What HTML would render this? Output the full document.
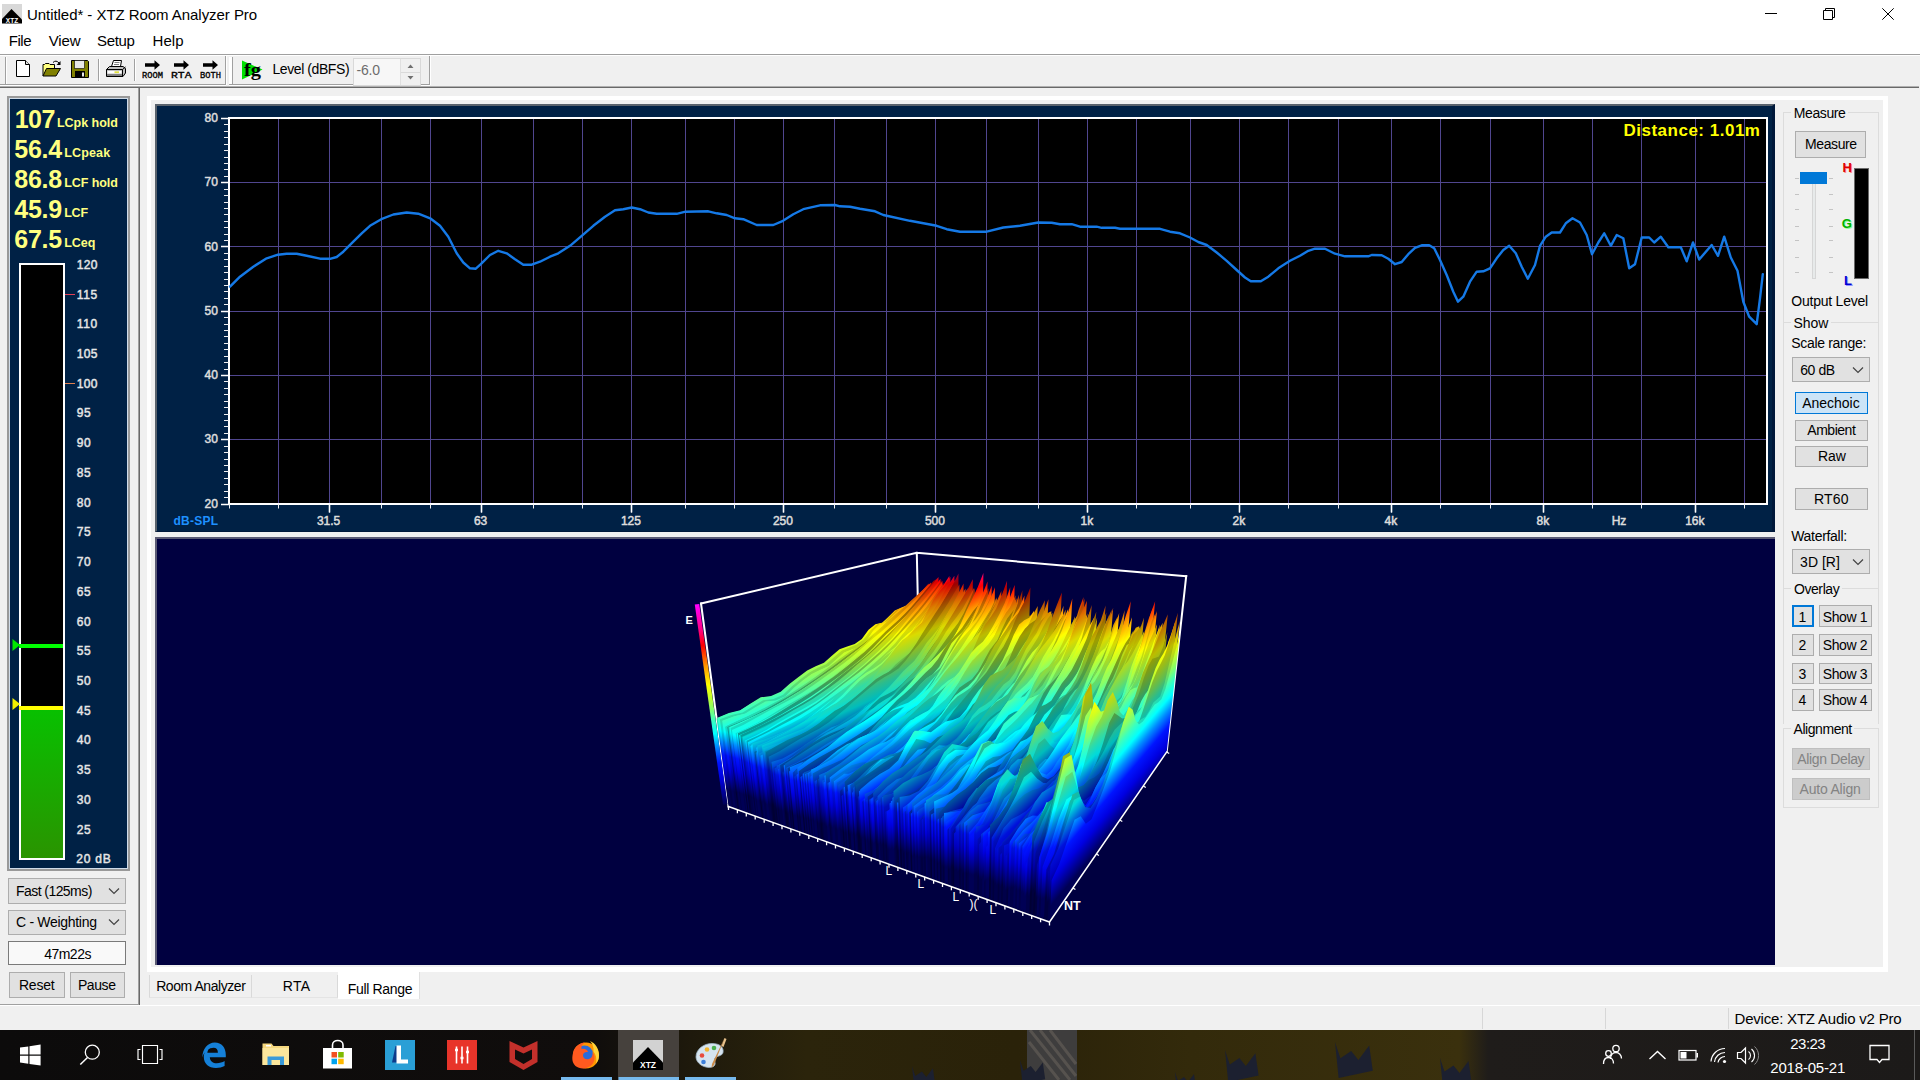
<!DOCTYPE html>
<html lang="en"><head><meta charset="utf-8"><title>Untitled* - XTZ Room Analyzer Pro</title>
<style>
*{box-sizing:border-box}
html,body{margin:0;padding:0}
body{width:1920px;height:1080px;overflow:hidden;background:#f0f0f0;font-family:"Liberation Sans",sans-serif;position:relative}
.a{position:absolute}
.t{position:absolute;white-space:pre;color:#000}
.btn{position:absolute;background:#e1e1e1;border:1px solid #adadad}
.dis{background:#cccccc;border-color:#bfbfbf}
.sel{background:#cce4f7;border-color:#0078d7}
.foc{border:2px solid #0078d7}
.cmb{position:absolute;background:#e1e1e1;border:1px solid #adadad}
.grp{position:absolute;border-top:1px solid #dcdcdc}
.navy{background:#00214a}
</style></head>
<body>
<div class="a" style="left:0px;top:0px;width:1920px;height:54px;background:#fff"></div>
<div class="a" style="left:0px;top:54px;width:1920px;height:1px;background:#a0a0a0"></div>
<div class="a" style="left:0px;top:55px;width:1920px;height:1px;background:#fff"></div>
<svg class="a" style="left:1750px;top:0" width="170" height="30" viewBox="0 0 170 30"><g fill="none" stroke="#000" stroke-width="1"><path d="M15 13.5H27"/><path d="M73.5 10.5h9v9h-9z"/><path d="M75.5 10.5v-2h9v9h-2"/><path d="M132.3 8.3l11.4 11.4M143.7 8.3l-11.4 11.4"/></g></svg>
<div class="a" style="left:0px;top:84px;width:226px;height:1px;background:#a0a0a0"></div>
<div class="a" style="left:0px;top:85px;width:226px;height:1px;background:#fff"></div>
<div class="a" style="left:229px;top:84px;width:201px;height:1px;background:#a0a0a0"></div>
<div class="a" style="left:229px;top:85px;width:201px;height:1px;background:#fff"></div>
<div class="a" style="left:0px;top:86px;width:1919px;height:1px;background:#b0b0b0"></div>
<div class="a" style="left:0px;top:87px;width:1919px;height:1px;background:#696969"></div>
<div class="a" style="left:5px;top:57px;width:1px;height:27px;background:#a0a0a0"></div>
<div class="a" style="left:6px;top:57px;width:1px;height:27px;background:#fff"></div>
<div class="a" style="left:98px;top:59px;width:1px;height:22px;background:#a0a0a0"></div>
<div class="a" style="left:99px;top:59px;width:1px;height:22px;background:#fff"></div>
<div class="a" style="left:134px;top:59px;width:1px;height:22px;background:#a0a0a0"></div>
<div class="a" style="left:135px;top:59px;width:1px;height:22px;background:#fff"></div>
<div class="a" style="left:225px;top:56px;width:1px;height:29px;background:#a0a0a0"></div>
<div class="a" style="left:226px;top:56px;width:1px;height:29px;background:#fff"></div>
<div class="a" style="left:229px;top:57px;width:3px;height:27px;background:#fff"></div>
<div class="a" style="left:232px;top:57px;width:1px;height:27px;background:#a0a0a0"></div>
<div class="a" style="left:429px;top:56px;width:1px;height:29px;background:#a0a0a0"></div>
<div class="a" style="left:430px;top:56px;width:1px;height:29px;background:#fff"></div>
<div class="a" style="left:353px;top:58px;width:68px;height:28px;background:#f7f7f7;border:1px solid #d9d9d9"></div>
<div class="a" style="left:400px;top:59px;width:20px;height:26px;background:#f0f0f0;border-left:1px solid #e0e0e0"></div>
<div class="a" style="left:401px;top:72px;width:19px;height:1px;background:#dadada"></div>
<svg class="a" style="left:400px;top:59px" width="21" height="26" viewBox="0 0 21 26"><path d="M7.5 9L10.5 5.5L13.5 9z M7.5 17L10.5 20.5L13.5 17z" fill="#707070"/></svg>
<div class="a" style="left:138px;top:88px;width:1px;height:917px;background:#a0a0a0"></div>
<div class="a" style="left:139px;top:88px;width:1px;height:917px;background:#696969"></div>
<div class="a" style="left:0px;top:1004px;width:139px;height:1px;background:#a0a0a0"></div>
<div class="a" style="left:0px;top:1005px;width:1920px;height:1px;background:#fff"></div>
<div class="a" style="left:7px;top:96px;width:123px;height:775px;background:#002145;border:2px solid #999;box-shadow:inset 1px 1px 0 #cfdbe8, inset -1px -1px 0 #cfdbe8"></div>
<div class="a" style="left:19px;top:262.5px;width:46px;height:597.5px;background:#000;border:2px solid #fff"></div>
<div class="a" style="left:21px;top:710px;width:42px;height:148px;background:linear-gradient(#08c000,#2a9400)"></div>
<div class="a" style="left:19px;top:706px;width:44px;height:4px;background:#ffff00"></div>
<div class="a" style="left:19px;top:643.5px;width:44px;height:4.0px;background:#00ff00"></div>
<svg class="a" style="left:12px;top:636px" width="10" height="80" viewBox="0 0 10 80"><path d="M0.5 3L8 9L0.5 15z" fill="#00e800"/><path d="M0.5 62L8 68L0.5 74z" fill="#f0f000"/></svg>
<div class="a" style="left:65px;top:294px;width:10px;height:1px;background:#e04058"></div>
<div class="a" style="left:65px;top:383px;width:10px;height:1px;background:#e08050"></div>
<div class="cmb" style="left:8px;top:878px;width:118px;height:26px;"><svg class="a" style="right:5px;top:50%;margin-top:-4px" width="12" height="8" viewBox="0 0 12 8"><path d="M1 1.5 L6 6.5 L11 1.5" fill="none" stroke="#444" stroke-width="1.2"/></svg></div>
<div class="cmb" style="left:8px;top:909.5px;width:118px;height:25.5px;"><svg class="a" style="right:5px;top:50%;margin-top:-4px" width="12" height="8" viewBox="0 0 12 8"><path d="M1 1.5 L6 6.5 L11 1.5" fill="none" stroke="#444" stroke-width="1.2"/></svg></div>
<div class="a" style="left:8px;top:940.5px;width:118px;height:24.5px;background:#f9f9f9;border:1px solid #7a7a7a"></div>
<div class="btn" style="left:9px;top:972px;width:56px;height:25.5px;"></div>
<div class="btn" style="left:69.5px;top:972px;width:55.5px;height:25.5px;"></div>
<div class="a" style="left:147px;top:96px;width:1741px;height:876px;background:#fff"></div>
<div class="a" style="left:151px;top:100px;width:1732px;height:867px;background:#f0f0f0"></div>
<div class="a" style="left:149px;top:975px;width:103px;height:23px;border-left:1px solid #d9d9d9;border-right:1px solid #d9d9d9;border-bottom:1px solid #e4e4e4"></div>
<div class="a" style="left:252px;top:975px;width:86px;height:23px;border-right:1px solid #d9d9d9;border-bottom:1px solid #e4e4e4"></div>
<div class="a" style="left:338px;top:972px;width:82px;height:27px;background:#fff;border-right:1px solid #e0e0e0"></div>
<div class="a" style="left:155px;top:104px;width:1620px;height:428px;background:#002145;border-top:2px solid #59626c;border-left:2px solid #59626c;border-right:3px solid #00183a;border-bottom:1px solid #00183a"></div>
<div class="a" style="left:155px;top:537px;width:1620px;height:428px;background:#000040;border-top:2px solid #5a5a74;border-left:2px solid #5a5a74"></div>
<div class="a" style="left:1783px;top:112px;width:96px;height:210px;border:1px solid #dcdcdc;border-bottom:none"></div>
<div class="a" style="left:1791px;top:104px;width:57px;height:18px;background:#f0f0f0"></div>
<div class="btn" style="left:1795px;top:130.5px;width:71px;height:27.0px;"></div>
<div class="a" style="left:1811.5px;top:178px;width:4.5px;height:101px;background:#e7eaea;border:1px solid #d6d6d6"></div>
<div class="a" style="left:1794.5px;top:178px;width:4.5px;height:1px;background:#c4c4c4"></div>
<div class="a" style="left:1828.5px;top:178px;width:4.5px;height:1px;background:#c4c4c4"></div>
<div class="a" style="left:1794.5px;top:194px;width:4.5px;height:1px;background:#c4c4c4"></div>
<div class="a" style="left:1828.5px;top:194px;width:4.5px;height:1px;background:#c4c4c4"></div>
<div class="a" style="left:1794.5px;top:209px;width:4.5px;height:1px;background:#c4c4c4"></div>
<div class="a" style="left:1828.5px;top:209px;width:4.5px;height:1px;background:#c4c4c4"></div>
<div class="a" style="left:1794.5px;top:226px;width:4.5px;height:1px;background:#c4c4c4"></div>
<div class="a" style="left:1828.5px;top:226px;width:4.5px;height:1px;background:#c4c4c4"></div>
<div class="a" style="left:1794.5px;top:240px;width:4.5px;height:1px;background:#c4c4c4"></div>
<div class="a" style="left:1828.5px;top:240px;width:4.5px;height:1px;background:#c4c4c4"></div>
<div class="a" style="left:1794.5px;top:257px;width:4.5px;height:1px;background:#c4c4c4"></div>
<div class="a" style="left:1828.5px;top:257px;width:4.5px;height:1px;background:#c4c4c4"></div>
<div class="a" style="left:1794.5px;top:272px;width:4.5px;height:1px;background:#c4c4c4"></div>
<div class="a" style="left:1828.5px;top:272px;width:4.5px;height:1px;background:#c4c4c4"></div>
<div class="a" style="left:1800px;top:171.5px;width:26.5px;height:12.5px;background:#0078d7"></div>
<div class="a" style="left:1854px;top:168px;width:15px;height:111px;background:#000;border:1px solid #6a6a6a"></div>
<div class="a" style="left:1783px;top:322px;width:96px;height:266px;border:1px solid #dcdcdc;border-bottom:none"></div>
<div class="a" style="left:1791px;top:314px;width:40px;height:17px;background:#f0f0f0"></div>
<div class="cmb" style="left:1791.5px;top:357px;width:78.0px;height:25px;"><svg class="a" style="right:5px;top:50%;margin-top:-4px" width="12" height="8" viewBox="0 0 12 8"><path d="M1 1.5 L6 6.5 L11 1.5" fill="none" stroke="#444" stroke-width="1.2"/></svg></div>
<div class="btn sel" style="left:1795px;top:392px;width:72.5px;height:21.5px;"></div>
<div class="btn" style="left:1795px;top:419.5px;width:72.5px;height:21.0px;"></div>
<div class="btn" style="left:1795px;top:446px;width:72.5px;height:21px;"></div>
<div class="btn" style="left:1795px;top:488px;width:72.5px;height:21.5px;"></div>
<div class="cmb" style="left:1791.5px;top:549px;width:78.0px;height:25px;"><svg class="a" style="right:5px;top:50%;margin-top:-4px" width="12" height="8" viewBox="0 0 12 8"><path d="M1 1.5 L6 6.5 L11 1.5" fill="none" stroke="#444" stroke-width="1.2"/></svg></div>
<div class="a" style="left:1783px;top:588px;width:96px;height:136px;border:1px solid #dcdcdc;border-bottom:none"></div>
<div class="a" style="left:1791px;top:580px;width:51px;height:17px;background:#f0f0f0"></div>
<div class="btn foc" style="left:1791.5px;top:605.3px;width:22.0px;height:21.700000000000045px;"></div>
<div class="btn" style="left:1819px;top:605.3px;width:53px;height:21.700000000000045px;"></div>
<div class="btn" style="left:1791.5px;top:634.4px;width:22.0px;height:21.399999999999977px;"></div>
<div class="btn" style="left:1819px;top:634.4px;width:53px;height:21.399999999999977px;"></div>
<div class="btn" style="left:1791.5px;top:663px;width:22.0px;height:21.399999999999977px;"></div>
<div class="btn" style="left:1819px;top:663px;width:53px;height:21.399999999999977px;"></div>
<div class="btn" style="left:1791.5px;top:689.4px;width:22.0px;height:21.399999999999977px;"></div>
<div class="btn" style="left:1819px;top:689.4px;width:53px;height:21.399999999999977px;"></div>
<div class="a" style="left:1783px;top:728px;width:96px;height:80px;border:1px solid #dcdcdc"></div>
<div class="a" style="left:1791px;top:720px;width:63px;height:17px;background:#f0f0f0"></div>
<div class="btn dis" style="left:1791.5px;top:748px;width:78.0px;height:21.5px;"></div>
<div class="btn dis" style="left:1791.5px;top:777.5px;width:78.0px;height:22.0px;"></div>
<div class="a" style="left:1482px;top:1008px;width:1px;height:21px;background:#d7d7d7"></div>
<div class="a" style="left:1605px;top:1008px;width:1px;height:21px;background:#d7d7d7"></div>
<div class="a" style="left:1728px;top:1008px;width:1px;height:21px;background:#d7d7d7"></div>
<svg class="a" style="left:155px;top:104px" width="1620" height="427" viewBox="155 104 1620 427">
<rect x="229" y="118" width="1538" height="386" fill="#000" stroke="#fff" stroke-width="2"/>
<path d="M278.5 119V503M329.5 119V503M381.5 119V503M430.5 119V503M481.5 119V503M533.5 119V503M582.5 119V503M631.5 119V503M685.5 119V503M734.5 119V503M783.5 119V503M834.5 119V503M886.5 119V503M935.5 119V503M986.5 119V503M1038.5 119V503M1087.5 119V503M1136.5 119V503M1190.5 119V503M1239.5 119V503M1288.5 119V503M1338.5 119V503M1391.5 119V503M1440.5 119V503M1490.5 119V503M1543.5 119V503M1592.5 119V503M1641.5 119V503M1695.5 119V503M1744.5 119V503M230 182.5H1766M230 246.5H1766M230 311.5H1766M230 375.5H1766M230 439.5H1766" stroke="#50468f" stroke-width="1" fill="none"/>
<path d="M221 504.5H229M224 497.5H229M224 491.5H229M224 484.5H229M224 478.5H229M224 471.5H229M224 465.5H229M224 459.5H229M224 452.5H229M224 446.5H229M221 439.5H229M224 433.5H229M224 426.5H229M224 420.5H229M224 414.5H229M224 407.5H229M224 401.5H229M224 394.5H229M224 388.5H229M224 381.5H229M221 375.5H229M224 369.5H229M224 362.5H229M224 356.5H229M224 349.5H229M224 343.5H229M224 336.5H229M224 330.5H229M224 324.5H229M224 317.5H229M221 311.5H229M224 304.5H229M224 298.5H229M224 291.5H229M224 285.5H229M224 279.5H229M224 272.5H229M224 266.5H229M224 259.5H229M224 253.5H229M221 246.5H229M224 240.5H229M224 234.5H229M224 227.5H229M224 221.5H229M224 214.5H229M224 208.5H229M224 202.5H229M224 195.5H229M224 189.5H229M221 182.5H229M224 176.5H229M224 169.5H229M224 163.5H229M224 157.5H229M224 150.5H229M224 144.5H229M224 137.5H229M224 131.5H229M224 124.5H229M221 118.5H229M229.5 504V508.5M278.5 504V508.5M329.5 504V512.5M381.5 504V508.5M430.5 504V508.5M481.5 504V512.5M533.5 504V508.5M582.5 504V508.5M631.5 504V512.5M685.5 504V508.5M734.5 504V508.5M783.5 504V512.5M834.5 504V508.5M886.5 504V508.5M935.5 504V512.5M986.5 504V508.5M1038.5 504V508.5M1087.5 504V512.5M1136.5 504V508.5M1190.5 504V508.5M1239.5 504V512.5M1288.5 504V508.5M1338.5 504V508.5M1391.5 504V512.5M1440.5 504V508.5M1490.5 504V508.5M1543.5 504V512.5M1592.5 504V508.5M1641.5 504V508.5M1695.5 504V512.5M1744.5 504V508.5" stroke="#f0f0f0" stroke-width="1" fill="none"/>
<path d="M1543.5 504V512.5M1695.5 504V512.5M1391.5 504V512.5M1087.5 504V512.5M1239.5 504V512.5M935.5 504V512.5M783.5 504V512.5M329.5 504V512.5M631.5 504V512.5M481.5 504V512.5M221 504.5H229M221 439.5H229M221 375.5H229M221 311.5H229M221 246.5H229M221 182.5H229M221 118.5H229" stroke="#fff" stroke-width="1.6" fill="none"/>
<path d="M230.0 286.7 L240.0 276.7 L253.3 266.7 L266.7 258.3 L278.0 254.7 L286.7 253.7 L296.7 253.8 L306.7 255.8 L320.0 258.7 L330.0 258.8 L336.7 257.0 L343.3 251.7 L353.3 241.7 L361.7 233.3 L370.0 225.8 L381.3 219.2 L393.3 214.5 L406.7 212.5 L418.3 213.7 L430.8 218.7 L440.0 225.8 L448.3 236.7 L456.7 253.3 L463.3 262.5 L470.0 268.3 L475.8 268.7 L480.8 264.2 L490.0 255.0 L498.3 250.8 L506.7 253.3 L515.0 259.2 L523.3 264.7 L531.7 264.7 L540.0 261.7 L550.0 256.7 L558.3 253.3 L570.0 245.8 L581.7 235.8 L593.3 225.8 L605.0 216.7 L615.0 210.3 L623.3 209.2 L631.7 207.5 L640.0 209.2 L648.3 212.5 L656.7 213.8 L676.7 213.8 L685.5 211.7 L708.3 211.3 L716.7 213.3 L726.7 215.0 L735.0 218.3 L743.3 219.2 L756.7 225.0 L773.3 225.0 L783.0 220.8 L793.3 214.2 L803.3 209.2 L820.0 205.3 L835.0 205.0 L840.0 206.3 L850.0 206.7 L860.0 208.7 L875.0 211.3 L883.3 215.0 L910.0 220.8 L936.7 225.8 L946.7 229.2 L960.0 231.7 L986.7 231.7 L1003.3 227.5 L1020.0 225.8 L1038.3 222.5 L1051.7 222.8 L1060.0 224.2 L1071.7 224.2 L1080.0 226.7 L1096.7 226.7 L1101.7 227.8 L1115.0 227.8 L1120.0 228.8 L1160.0 228.8 L1170.0 231.7 L1180.0 233.3 L1190.0 237.5 L1198.3 242.0 L1206.7 245.0 L1216.7 252.5 L1226.7 260.8 L1236.7 270.0 L1245.0 277.5 L1250.8 281.3 L1260.8 281.3 L1268.3 276.7 L1278.3 268.3 L1290.0 260.8 L1300.0 255.8 L1308.3 250.8 L1315.0 248.7 L1325.0 248.7 L1335.0 253.7 L1345.0 256.3 L1368.3 256.3 L1371.7 255.0 L1381.7 255.3 L1388.3 258.7 L1395.0 264.2 L1401.7 262.0 L1408.3 254.2 L1415.0 247.8 L1421.7 245.3 L1429.2 245.3 L1434.2 248.3 L1440.0 260.0 L1446.7 275.0 L1453.3 291.7 L1458.0 301.7 L1463.3 296.7 L1470.0 281.7 L1476.7 271.7 L1483.3 271.3 L1490.0 268.3 L1496.7 258.3 L1503.3 250.0 L1509.2 245.8 L1515.8 253.3 L1521.7 266.7 L1527.8 278.7 L1535.0 265.0 L1540.0 245.8 L1545.8 236.7 L1551.7 232.5 L1560.0 232.5 L1565.8 223.3 L1572.5 218.3 L1580.0 222.5 L1586.7 235.0 L1592.0 254.2 L1598.3 242.5 L1604.2 233.3 L1610.8 245.8 L1616.7 235.0 L1623.3 238.3 L1629.2 268.3 L1635.0 264.2 L1641.7 237.5 L1649.2 237.5 L1654.2 242.5 L1660.8 236.7 L1668.3 247.2 L1680.8 247.2 L1686.7 261.3 L1693.0 242.5 L1699.2 259.5 L1711.7 245.0 L1718.0 255.8 L1724.2 236.7 L1730.8 257.5 L1737.5 270.8 L1743.3 301.7 L1749.2 316.7 L1756.7 324.2 L1760.0 298.3 L1762.8 274.2" stroke="#1579e6" stroke-width="2.4" fill="none" stroke-linejoin="round" stroke-linecap="round"/>
</svg>
<svg class="a" style="left:157px;top:540px" width="1618" height="425" viewBox="157 540 1618 425">
<defs>
<linearGradient id="j0" gradientUnits="userSpaceOnUse" x1="0" y1="0" x2="0" y2="1"><stop offset="0.000" stop-color="#000034"/><stop offset="0.060" stop-color="#00005d"/><stop offset="0.130" stop-color="#00008b"/><stop offset="0.210" stop-color="#000c9e"/><stop offset="0.290" stop-color="#00569e"/><stop offset="0.354" stop-color="#009e9e"/><stop offset="0.420" stop-color="#259e75"/><stop offset="0.475" stop-color="#509e44"/><stop offset="0.540" stop-color="#7c9e18"/><stop offset="0.597" stop-color="#9e9e00"/><stop offset="0.696" stop-color="#9e5900"/><stop offset="0.795" stop-color="#9e0000"/><stop offset="0.870" stop-color="#9e004f"/><stop offset="1.000" stop-color="#9e009e"/></linearGradient>
<linearGradient id="j1" gradientUnits="userSpaceOnUse" x1="0" y1="0" x2="0" y2="1"><stop offset="0.000" stop-color="#00003e"/><stop offset="0.060" stop-color="#00006f"/><stop offset="0.130" stop-color="#0000a6"/><stop offset="0.210" stop-color="#000ebc"/><stop offset="0.290" stop-color="#0067bc"/><stop offset="0.354" stop-color="#00bcbc"/><stop offset="0.420" stop-color="#2cbc8c"/><stop offset="0.475" stop-color="#60bc51"/><stop offset="0.540" stop-color="#94bc1d"/><stop offset="0.597" stop-color="#bcbc00"/><stop offset="0.696" stop-color="#bc6a00"/><stop offset="0.795" stop-color="#bc0000"/><stop offset="0.870" stop-color="#bc005e"/><stop offset="1.000" stop-color="#bc00bc"/></linearGradient>
<linearGradient id="j2" gradientUnits="userSpaceOnUse" x1="0" y1="0" x2="0" y2="1"><stop offset="0.000" stop-color="#000049"/><stop offset="0.060" stop-color="#000081"/><stop offset="0.130" stop-color="#0000c1"/><stop offset="0.210" stop-color="#0011db"/><stop offset="0.290" stop-color="#0078db"/><stop offset="0.354" stop-color="#00dbdb"/><stop offset="0.420" stop-color="#33dba3"/><stop offset="0.475" stop-color="#6fdb5e"/><stop offset="0.540" stop-color="#acdb22"/><stop offset="0.597" stop-color="#dbdb00"/><stop offset="0.696" stop-color="#db7b00"/><stop offset="0.795" stop-color="#db0000"/><stop offset="0.870" stop-color="#db006e"/><stop offset="1.000" stop-color="#db00db"/></linearGradient>
<linearGradient id="j3" gradientUnits="userSpaceOnUse" x1="0" y1="0" x2="0" y2="1"><stop offset="0.000" stop-color="#000055"/><stop offset="0.060" stop-color="#000096"/><stop offset="0.130" stop-color="#0000e1"/><stop offset="0.210" stop-color="#0014ff"/><stop offset="0.290" stop-color="#008cff"/><stop offset="0.354" stop-color="#00ffff"/><stop offset="0.420" stop-color="#3cffbe"/><stop offset="0.475" stop-color="#82ff6e"/><stop offset="0.540" stop-color="#c8ff28"/><stop offset="0.597" stop-color="#ffff00"/><stop offset="0.696" stop-color="#ff9000"/><stop offset="0.795" stop-color="#ff0000"/><stop offset="0.870" stop-color="#ff0080"/><stop offset="1.000" stop-color="#ff00ff"/></linearGradient>
<linearGradient id="lg" gradientUnits="userSpaceOnUse" x1="697.0" y1="604.3" x2="725.3" y2="804.5"><stop offset="0.000" stop-color="#ff00ff"/><stop offset="0.130" stop-color="#ff0080"/><stop offset="0.205" stop-color="#ff0000"/><stop offset="0.304" stop-color="#ff9000"/><stop offset="0.403" stop-color="#ffff00"/><stop offset="0.460" stop-color="#c8ff28"/><stop offset="0.525" stop-color="#82ff6e"/><stop offset="0.580" stop-color="#3cffbe"/><stop offset="0.646" stop-color="#00ffff"/><stop offset="0.710" stop-color="#008cff"/><stop offset="0.790" stop-color="#0014ff"/><stop offset="0.870" stop-color="#0000e1"/><stop offset="0.940" stop-color="#000096"/><stop offset="1.000" stop-color="#000055"/></linearGradient>
</defs>
<path d="M701.0 603.5L916.8 552.8L1186.2 576.2M916.8 552.8L920.0 700.7" stroke="#fff" stroke-width="2" fill="none" stroke-linecap="square"/>
<path d="M701.0 603.5L728.5 806.5M1186.2 576.2L1166.7 752.0" stroke="#fff" stroke-width="2" fill="none" stroke-linecap="square"/>
<path transform="matrix(-154.07 58.63 -58.63 -154.07 841.50 746.04)" d="M-0.5429 0.0877L-0.7464 0.6594L-0.7033 0.6437L-0.6628 0.6378L-0.6224 0.6350L-0.5818 0.6344L-0.5337 0.6148L-0.4853 0.5974L-0.4448 0.6067L-0.3944 0.5897L-0.3362 0.5516L-0.2842 0.5361L-0.2358 0.5363L-0.1861 0.5367L-0.1290 0.5175L-0.0702 0.4967L-0.0163 0.4979L0.0409 0.4933L0.1029 0.4776L0.1679 0.4572L0.2361 0.4310L0.2996 0.4291L0.3605 0.4449L0.4309 0.4330L0.5039 0.4190L0.5738 0.4277L0.6489 0.4253L0.7711 -0.0990Z" fill="url(#j2)"/>
<path transform="matrix(-154.10 58.22 -58.22 -154.10 842.44 746.24)" d="M-0.5428 0.0892L-0.7535 0.6847L-0.7102 0.6685L-0.6697 0.6626L-0.6294 0.6601L-0.5883 0.6585L-0.5393 0.6362L-0.4899 0.6155L-0.4486 0.6223L-0.3980 0.6048L-0.3401 0.5674L-0.2887 0.5539L-0.2409 0.5559L-0.1913 0.5567L-0.1338 0.5362L-0.0742 0.5132L-0.0197 0.5121L0.0381 0.5053L0.1006 0.4880L0.1656 0.4676L0.2337 0.4417L0.2974 0.4389L0.3588 0.4532L0.4296 0.4396L0.5030 0.4243L0.5729 0.4327L0.6481 0.4304L0.7712 -0.1022Z" fill="url(#j3)"/>
<path transform="matrix(-153.70 59.06 -59.06 -153.70 843.43 746.51)" d="M-0.5432 0.0869L-0.7523 0.6666L-0.7080 0.6478L-0.6665 0.6393L-0.6264 0.6373L-0.5865 0.6390L-0.5380 0.6185L-0.4877 0.5957L-0.4452 0.5991L-0.3943 0.5803L-0.3365 0.5441L-0.2854 0.5316L-0.2377 0.5339L-0.1883 0.5352L-0.1311 0.5160L-0.0717 0.4940L-0.0170 0.4925L0.0408 0.4856L0.1030 0.4697L0.1680 0.4495L0.2366 0.4222L0.3007 0.4180L0.3620 0.4323L0.4323 0.4206L0.5052 0.4073L0.5746 0.4177L0.6493 0.4174L0.7720 -0.0986Z" fill="url(#j3)"/>
<path transform="matrix(-153.69 58.59 -58.59 -153.69 844.37 746.70)" d="M-0.5432 0.0886L-0.7610 0.6964L-0.7158 0.6752L-0.6736 0.6648L-0.6330 0.6613L-0.5931 0.6630L-0.5449 0.6436L-0.4949 0.6216L-0.4522 0.6245L-0.4009 0.6046L-0.3429 0.5677L-0.2913 0.5538L-0.2427 0.5534L-0.1922 0.5514L-0.1345 0.5304L-0.0751 0.5083L-0.0202 0.5060L0.0383 0.4973L0.1011 0.4790L0.1668 0.4564L0.2357 0.4280L0.2997 0.4243L0.3607 0.4396L0.4310 0.4280L0.5041 0.4142L0.5735 0.4249L0.6481 0.4252L0.7723 -0.1021Z" fill="url(#j2)"/>
<path transform="matrix(-153.36 59.04 -59.04 -153.36 845.33 746.90)" d="M-0.5436 0.0872L-0.7615 0.6882L-0.7165 0.6676L-0.6739 0.6561L-0.6324 0.6505L-0.5923 0.6514L-0.5444 0.6331L-0.4949 0.6128L-0.4520 0.6151L-0.3995 0.5921L-0.3403 0.5518L-0.2885 0.5376L-0.2406 0.5391L-0.1905 0.5384L-0.1326 0.5171L-0.0731 0.4948L-0.0185 0.4937L0.0398 0.4855L0.1030 0.4664L0.1689 0.4432L0.2376 0.4158L0.3007 0.4153L0.3609 0.4339L0.4312 0.4227L0.5047 0.4076L0.5742 0.4177L0.6488 0.4180L0.7731 -0.1009Z" fill="url(#j2)"/>
<path transform="matrix(-153.26 58.94 -58.94 -153.26 846.28 747.07)" d="M-0.5437 0.0874L-0.7657 0.6993L-0.7206 0.6785L-0.6779 0.6670L-0.6362 0.6607L-0.5955 0.6601L-0.5472 0.6405L-0.4974 0.6193L-0.4544 0.6213L-0.4016 0.5976L-0.3421 0.5565L-0.2900 0.5412L-0.2418 0.5421L-0.1918 0.5415L-0.1338 0.5199L-0.0739 0.4966L-0.0195 0.4959L0.0379 0.4908L0.1002 0.4748L0.1660 0.4523L0.2355 0.4224L0.2996 0.4185L0.3601 0.4355L0.4303 0.4250L0.5035 0.4110L0.5732 0.4206L0.6481 0.4202L0.7735 -0.1026Z" fill="url(#j3)"/>
<path transform="matrix(-153.02 58.78 -58.78 -153.02 847.21 747.22)" d="M-0.5443 0.0876L-0.7725 0.7166L-0.7272 0.6953L-0.6845 0.6839L-0.6423 0.6765L-0.6007 0.6736L-0.5515 0.6517L-0.5013 0.6295L-0.4582 0.6314L-0.4051 0.6066L-0.3449 0.5638L-0.2921 0.5466L-0.2436 0.5464L-0.1938 0.5466L-0.1361 0.5264L-0.0762 0.5032L-0.0211 0.5004L0.0370 0.4932L0.0994 0.4769L0.1653 0.4545L0.2352 0.4234L0.2997 0.4182L0.3603 0.4353L0.4302 0.4262L0.5032 0.4132L0.5730 0.4228L0.6481 0.4220L0.7746 -0.1048Z" fill="url(#j3)"/>
<path transform="matrix(-152.16 59.35 -59.35 -152.16 848.15 747.35)" d="M-0.5464 0.0850L-0.7808 0.7199L-0.7366 0.7027L-0.6920 0.6867L-0.6465 0.6708L-0.6003 0.6552L-0.5529 0.6392L-0.5038 0.6210L-0.4530 0.6007L-0.4015 0.5816L-0.3502 0.5664L-0.2982 0.5527L-0.2450 0.5388L-0.1906 0.5252L-0.1347 0.5115L-0.0771 0.4963L-0.0176 0.4802L0.0428 0.4658L0.1042 0.4537L0.1674 0.4412L0.2326 0.4281L0.2989 0.4175L0.3663 0.4102L0.4354 0.4048L0.5065 0.4003L0.5800 0.3959L0.6560 0.3914L0.7778 -0.1029Z" fill="url(#j2)"/>
<path transform="matrix(-152.18 59.09 -59.09 -152.18 849.11 747.56)" d="M-0.5462 0.0861L-0.7878 0.7426L-0.7423 0.7218L-0.6970 0.7038L-0.6514 0.6876L-0.6053 0.6723L-0.5584 0.6576L-0.5095 0.6400L-0.4585 0.6193L-0.4067 0.5991L-0.3549 0.5824L-0.3026 0.5676L-0.2492 0.5534L-0.1949 0.5401L-0.1389 0.5261L-0.0809 0.5098L-0.0211 0.4927L0.0397 0.4770L0.1017 0.4626L0.1654 0.4485L0.2304 0.4361L0.2965 0.4263L0.3642 0.4178L0.4339 0.4102L0.5054 0.4041L0.5790 0.3993L0.6551 0.3947L0.7778 -0.1054Z" fill="url(#j2)"/>
<path transform="matrix(-151.85 59.36 -59.36 -151.85 850.07 747.74)" d="M-0.5467 0.0851L-0.7920 0.7456L-0.7452 0.7217L-0.6991 0.7017L-0.6534 0.6853L-0.6069 0.6693L-0.5584 0.6503L-0.5083 0.6296L-0.4577 0.6102L-0.4068 0.5928L-0.3552 0.5769L-0.3029 0.5624L-0.2497 0.5488L-0.1949 0.5344L-0.1383 0.5185L-0.0802 0.5023L-0.0208 0.4867L0.0398 0.4719L0.1019 0.4575L0.1655 0.4440L0.2304 0.4321L0.2967 0.4220L0.3648 0.4126L0.4349 0.4036L0.5068 0.3964L0.5801 0.3929L0.6552 0.3924L0.7788 -0.1051Z" fill="url(#j0)"/>
<path transform="matrix(-151.43 59.44 -59.44 -151.43 851.00 747.85)" d="M-0.5477 0.0841L-0.7978 0.7540L-0.7508 0.7297L-0.7037 0.7074L-0.6571 0.6888L-0.6097 0.6707L-0.5605 0.6500L-0.5105 0.6297L-0.4605 0.6122L-0.4096 0.5956L-0.3574 0.5783L-0.3041 0.5608L-0.2496 0.5437L-0.1938 0.5264L-0.1370 0.5102L-0.0794 0.4959L-0.0206 0.4825L0.0399 0.4685L0.1024 0.4533L0.1664 0.4388L0.2315 0.4264L0.2978 0.4167L0.3656 0.4088L0.4353 0.4019L0.5068 0.3964L0.5802 0.3933L0.6555 0.3926L0.7805 -0.1062Z" fill="url(#j2)"/>
<path transform="matrix(-151.26 59.27 -59.27 -151.26 851.94 748.00)" d="M-0.5481 0.0844L-0.8028 0.7669L-0.7563 0.7439L-0.7097 0.7234L-0.6632 0.7052L-0.6159 0.6871L-0.5670 0.6674L-0.5170 0.6474L-0.4658 0.6269L-0.4137 0.6066L-0.3604 0.5862L-0.3063 0.5667L-0.2518 0.5498L-0.1964 0.5338L-0.1395 0.5174L-0.0810 0.5004L-0.0215 0.4846L0.0390 0.4708L0.1010 0.4575L0.1645 0.4447L0.2295 0.4329L0.2963 0.4215L0.3648 0.4117L0.4343 0.4056L0.5055 0.4016L0.5793 0.3973L0.6555 0.3933L0.7813 -0.1084Z" fill="url(#j3)"/>
<path transform="matrix(-151.26 59.29 -59.29 -151.26 852.93 748.25)" d="M-0.5477 0.0849L-0.8052 0.7735L-0.7591 0.7517L-0.7135 0.7336L-0.6673 0.7162L-0.6195 0.6970L-0.5700 0.6757L-0.5197 0.6547L-0.4689 0.6352L-0.4173 0.6167L-0.3642 0.5967L-0.3094 0.5751L-0.2538 0.5549L-0.1982 0.5381L-0.1418 0.5231L-0.0838 0.5076L-0.0242 0.4918L0.0367 0.4766L0.0990 0.4621L0.1628 0.4486L0.2279 0.4363L0.2948 0.4247L0.3630 0.4153L0.4326 0.4089L0.5044 0.4031L0.5788 0.3961L0.6554 0.3904L0.7810 -0.1093Z" fill="url(#j2)"/>
<path transform="matrix(-150.97 59.72 -59.72 -150.97 853.92 748.50)" d="M-0.5480 0.0838L-0.8077 0.7705L-0.7610 0.7477L-0.7137 0.7252L-0.6659 0.7036L-0.6176 0.6831L-0.5684 0.6628L-0.5181 0.6421L-0.4673 0.6229L-0.4164 0.6061L-0.3643 0.5895L-0.3103 0.5707L-0.2545 0.5497L-0.1977 0.5298L-0.1405 0.5126L-0.0824 0.4972L-0.0232 0.4826L0.0377 0.4675L0.1005 0.4516L0.1646 0.4372L0.2294 0.4263L0.2950 0.4190L0.3624 0.4129L0.4326 0.4047L0.5055 0.3947L0.5804 0.3860L0.6566 0.3820L0.7817 -0.1079Z" fill="url(#j3)"/>
<path transform="matrix(-150.64 59.80 -59.80 -150.64 854.87 748.65)" d="M-0.5487 0.0832L-0.8133 0.7793L-0.7662 0.7556L-0.7177 0.7303L-0.6694 0.7075L-0.6212 0.6878L-0.5725 0.6689L-0.5220 0.6479L-0.4699 0.6253L-0.4174 0.6043L-0.3645 0.5855L-0.3109 0.5680L-0.2560 0.5503L-0.1997 0.5320L-0.1420 0.5136L-0.0831 0.4957L-0.0233 0.4795L0.0377 0.4646L0.1002 0.4501L0.1637 0.4375L0.2283 0.4276L0.2943 0.4197L0.3621 0.4124L0.4326 0.4033L0.5059 0.3925L0.5810 0.3834L0.6575 0.3786L0.7829 -0.1088Z" fill="url(#j3)"/>
<path transform="matrix(-150.55 60.11 -60.11 -150.55 855.87 748.94)" d="M-0.5484 0.0829L-0.8131 0.7740L-0.7656 0.7494L-0.7178 0.7258L-0.6698 0.7040L-0.6215 0.6838L-0.5725 0.6646L-0.5225 0.6450L-0.4710 0.6240L-0.4180 0.6016L-0.3641 0.5799L-0.3099 0.5608L-0.2554 0.5441L-0.1997 0.5278L-0.1422 0.5099L-0.0829 0.4908L-0.0225 0.4729L0.0386 0.4576L0.1002 0.4456L0.1626 0.4368L0.2266 0.4290L0.2930 0.4196L0.3619 0.4088L0.4328 0.3981L0.5058 0.3881L0.5807 0.3796L0.6574 0.3744L0.7828 -0.1081Z" fill="url(#j3)"/>
<path transform="matrix(-150.35 60.46 -60.46 -150.35 856.88 749.21)" d="M-0.5485 0.0822L-0.8141 0.7698L-0.7673 0.7471L-0.7197 0.7241L-0.6705 0.6996L-0.6210 0.6763L-0.5717 0.6560L-0.5218 0.6369L-0.4708 0.6174L-0.4182 0.5966L-0.3643 0.5752L-0.3099 0.5554L-0.2554 0.5388L-0.2001 0.5237L-0.1426 0.5061L-0.0829 0.4861L-0.0224 0.4679L0.0385 0.4533L0.1001 0.4415L0.1629 0.4316L0.2273 0.4225L0.2937 0.4131L0.3625 0.4025L0.4337 0.3909L0.5069 0.3803L0.5815 0.3732L0.6574 0.3705L0.7832 -0.1070Z" fill="url(#j2)"/>
<path transform="matrix(-150.13 60.47 -60.47 -150.13 857.84 749.39)" d="M-0.5489 0.0821L-0.8208 0.7837L-0.7730 0.7588L-0.7242 0.7330L-0.6744 0.7070L-0.6248 0.6836L-0.5752 0.6625L-0.5246 0.6416L-0.4733 0.6216L-0.4212 0.6022L-0.3678 0.5823L-0.3132 0.5622L-0.2582 0.5444L-0.2026 0.5288L-0.1452 0.5115L-0.0854 0.4913L-0.0245 0.4723L0.0367 0.4569L0.0988 0.4438L0.1624 0.4313L0.2276 0.4197L0.2943 0.4094L0.3630 0.3993L0.4338 0.3894L0.5064 0.3810L0.5807 0.3751L0.6568 0.3722L0.7840 -0.1082Z" fill="url(#j3)"/>
<path transform="matrix(-149.79 60.36 -60.36 -149.79 858.78 749.50)" d="M-0.5498 0.0818L-0.8287 0.8001L-0.7809 0.7754L-0.7322 0.7501L-0.6821 0.7236L-0.6314 0.6976L-0.5806 0.6739L-0.5299 0.6529L-0.4792 0.6347L-0.4271 0.6158L-0.3727 0.5933L-0.3167 0.5696L-0.2604 0.5481L-0.2039 0.5300L-0.1461 0.5120L-0.0868 0.4935L-0.0267 0.4773L0.0343 0.4629L0.0969 0.4487L0.1610 0.4351L0.2263 0.4236L0.2934 0.4125L0.3629 0.3998L0.4344 0.3880L0.5069 0.3804L0.5809 0.3762L0.6570 0.3737L0.7855 -0.1103Z" fill="url(#j0)"/>
<path transform="matrix(-149.17 60.85 -60.85 -149.17 859.76 749.70)" d="M-0.5511 0.0798L-0.8319 0.7931L-0.7834 0.7670L-0.7340 0.7406L-0.6838 0.7142L-0.6328 0.6880L-0.5814 0.6632L-0.5301 0.6412L-0.4790 0.6223L-0.4265 0.6026L-0.3715 0.5793L-0.3148 0.5540L-0.2575 0.5306L-0.2005 0.5114L-0.1431 0.4948L-0.0844 0.4787L-0.0243 0.4629L0.0373 0.4472L0.1003 0.4321L0.1645 0.4186L0.2300 0.4071L0.2969 0.3970L0.3658 0.3870L0.4366 0.3783L0.5090 0.3716L0.5833 0.3669L0.6593 0.3652L0.7876 -0.1086Z" fill="url(#j3)"/>
<path transform="matrix(-148.72 60.81 -60.81 -148.72 860.67 749.74)" d="M-0.5523 0.0787L-0.8403 0.8073L-0.7915 0.7810L-0.7406 0.7509L-0.6885 0.7202L-0.6363 0.6912L-0.5840 0.6643L-0.5319 0.6404L-0.4797 0.6190L-0.4268 0.5984L-0.3723 0.5767L-0.3162 0.5535L-0.2593 0.5316L-0.2026 0.5134L-0.1454 0.4981L-0.0867 0.4825L-0.0258 0.4645L0.0371 0.4454L0.1008 0.4287L0.1649 0.4158L0.2301 0.4056L0.2968 0.3966L0.3655 0.3881L0.4357 0.3817L0.5079 0.3764L0.5825 0.3716L0.6593 0.3681L0.7896 -0.1107Z" fill="url(#j0)"/>
<path transform="matrix(-148.25 61.21 -61.21 -148.25 861.66 749.96)" d="M-0.5532 0.0774L-0.8418 0.7993L-0.7941 0.7759L-0.7434 0.7472L-0.6906 0.7150L-0.6380 0.6855L-0.5861 0.6600L-0.5335 0.6354L-0.4799 0.6104L-0.4256 0.5866L-0.3707 0.5639L-0.3145 0.5411L-0.2576 0.5195L-0.2010 0.5020L-0.1438 0.4869L-0.0846 0.4701L-0.0233 0.4515L0.0391 0.4340L0.1024 0.4191L0.1667 0.4059L0.2321 0.3954L0.2985 0.3878L0.3668 0.3811L0.4372 0.3743L0.5098 0.3682L0.5844 0.3636L0.6613 0.3600L0.7912 -0.1095Z" fill="url(#j1)"/>
<path transform="matrix(-148.13 61.05 -61.05 -148.13 862.63 750.14)" d="M-0.5534 0.0779L-0.8494 0.8186L-0.8011 0.7939L-0.7510 0.7665L-0.6990 0.7366L-0.6473 0.7095L-0.5956 0.6849L-0.5423 0.6584L-0.4872 0.6299L-0.4317 0.6029L-0.3764 0.5794L-0.3207 0.5579L-0.2642 0.5375L-0.2069 0.5184L-0.1479 0.4982L-0.0869 0.4763L-0.0252 0.4566L0.0365 0.4413L0.0993 0.4280L0.1636 0.4150L0.2291 0.4043L0.2958 0.3960L0.3650 0.3864L0.4368 0.3754L0.5100 0.3671L0.5844 0.3632L0.6611 0.3607L0.7917 -0.1117Z" fill="url(#j2)"/>
<path transform="matrix(-147.54 61.91 -61.91 -147.54 863.67 750.48)" d="M-0.5543 0.0755L-0.8469 0.7934L-0.7971 0.7654L-0.7473 0.7395L-0.6969 0.7143L-0.6454 0.6882L-0.5918 0.6594L-0.5365 0.6283L-0.4806 0.5982L-0.4255 0.5728L-0.3706 0.5509L-0.3149 0.5298L-0.2582 0.5094L-0.2005 0.4896L-0.1415 0.4699L-0.0812 0.4505L-0.0202 0.4332L0.0413 0.4188L0.1042 0.4055L0.1683 0.3936L0.2334 0.3844L0.3002 0.3763L0.3693 0.3672L0.4407 0.3580L0.5136 0.3509L0.5881 0.3472L0.6645 0.3459L0.7933 -0.1073Z" fill="url(#j2)"/>
<path transform="matrix(-147.58 61.78 -61.78 -147.58 864.65 750.67)" d="M-0.5539 0.0761L-0.8520 0.8080L-0.8016 0.7786L-0.7512 0.7512L-0.7004 0.7247L-0.6489 0.6987L-0.5962 0.6719L-0.5414 0.6422L-0.4847 0.6100L-0.4288 0.5823L-0.3743 0.5613L-0.3188 0.5407L-0.2618 0.5193L-0.2037 0.4984L-0.1452 0.4800L-0.0859 0.4634L-0.0250 0.4465L0.0374 0.4297L0.1013 0.4134L0.1656 0.4007L0.2304 0.3925L0.2969 0.3851L0.3656 0.3774L0.4369 0.3683L0.5110 0.3576L0.5867 0.3495L0.6633 0.3473L0.7930 -0.1094Z" fill="url(#j3)"/>
<path transform="matrix(-147.77 62.16 -62.16 -147.77 865.72 751.07)" d="M-0.5526 0.0766L-0.8487 0.7991L-0.7977 0.7679L-0.7470 0.7396L-0.6957 0.7118L-0.6439 0.6846L-0.5914 0.6583L-0.5381 0.6321L-0.4832 0.6045L-0.4278 0.5779L-0.3729 0.5557L-0.3176 0.5354L-0.2613 0.5158L-0.2039 0.4964L-0.1455 0.4782L-0.0864 0.4618L-0.0259 0.4457L0.0363 0.4292L0.1006 0.4112L0.1660 0.3950L0.2312 0.3851L0.2971 0.3792L0.3651 0.3731L0.4362 0.3643L0.5097 0.3550L0.5844 0.3499L0.6606 0.3485L0.7914 -0.1079Z" fill="url(#j1)"/>
<path transform="matrix(-147.56 62.54 -62.54 -147.56 866.75 751.36)" d="M-0.5526 0.0760L-0.8499 0.7948L-0.7986 0.7633L-0.7469 0.7325L-0.6944 0.7021L-0.6420 0.6736L-0.5895 0.6475L-0.5367 0.6227L-0.4827 0.5975L-0.4278 0.5726L-0.3726 0.5497L-0.3167 0.5279L-0.2601 0.5075L-0.2029 0.4888L-0.1449 0.4719L-0.0861 0.4565L-0.0259 0.4413L0.0362 0.4252L0.1002 0.4083L0.1656 0.3923L0.2317 0.3796L0.2987 0.3702L0.3671 0.3631L0.4372 0.3571L0.5097 0.3512L0.5844 0.3461L0.6614 0.3423L0.7916 -0.1067Z" fill="url(#j3)"/>
<path transform="matrix(-147.11 63.07 -63.07 -147.11 867.77 751.64)" d="M-0.5532 0.0745L-0.8497 0.7818L-0.7982 0.7503L-0.7455 0.7177L-0.6923 0.6858L-0.6407 0.6600L-0.5900 0.6386L-0.5371 0.6139L-0.4811 0.5842L-0.4244 0.5551L-0.3686 0.5307L-0.3132 0.5106L-0.2570 0.4918L-0.1994 0.4722L-0.1403 0.4527L-0.0807 0.4350L-0.0207 0.4207L0.0404 0.4078L0.1035 0.3938L0.1684 0.3797L0.2348 0.3664L0.3022 0.3560L0.3701 0.3504L0.4392 0.3481L0.5109 0.3450L0.5858 0.3397L0.6631 0.3349L0.7929 -0.1045Z" fill="url(#j2)"/>
<path transform="matrix(-146.81 64.22 -64.22 -146.81 868.89 752.14)" d="M-0.5528 0.0726L-0.8390 0.7409L-0.7876 0.7100L-0.7345 0.6768L-0.6807 0.6440L-0.6295 0.6193L-0.5790 0.5986L-0.5241 0.5693L-0.4667 0.5364L-0.4119 0.5122L-0.3591 0.4959L-0.3062 0.4823L-0.2502 0.4641L-0.1916 0.4422L-0.1311 0.4189L-0.0686 0.3936L-0.0072 0.3752L0.0524 0.3663L0.1128 0.3595L0.1765 0.3486L0.2442 0.3316L0.3117 0.3206L0.3769 0.3226L0.4434 0.3279L0.5139 0.3285L0.5873 0.3277L0.6622 0.3309L0.7925 -0.0980Z" fill="url(#j3)"/>
<path transform="matrix(-147.44 63.99 -63.99 -147.44 869.96 752.51)" d="M-0.5506 0.0753L-0.8370 0.7484L-0.7903 0.7280L-0.7420 0.7058L-0.6905 0.6779L-0.6365 0.6460L-0.5816 0.6140L-0.5257 0.5816L-0.4719 0.5568L-0.4211 0.5424L-0.3697 0.5291L-0.3152 0.5111L-0.2574 0.4876L-0.1984 0.4643L-0.1393 0.4440L-0.0804 0.4280L-0.0213 0.4158L0.0389 0.4045L0.1014 0.3919L0.1670 0.3750L0.2357 0.3545L0.3050 0.3375L0.3734 0.3294L0.4421 0.3269L0.5122 0.3274L0.5836 0.3324L0.6574 0.3382L0.7896 -0.1003Z" fill="url(#j3)"/>
<path transform="matrix(-146.99 63.72 -63.72 -146.99 870.85 752.49)" d="M-0.5520 0.0745L-0.8519 0.7790L-0.8019 0.7513L-0.7491 0.7187L-0.6952 0.6853L-0.6413 0.6538L-0.5862 0.6217L-0.5294 0.5875L-0.4737 0.5582L-0.4215 0.5404L-0.3712 0.5300L-0.3184 0.5168L-0.2618 0.4967L-0.2024 0.4727L-0.1437 0.4540L-0.0872 0.4449L-0.0289 0.4353L0.0339 0.4175L0.1003 0.3944L0.1672 0.3741L0.2346 0.3578L0.3029 0.3444L0.3712 0.3370L0.4401 0.3348L0.5106 0.3350L0.5823 0.3394L0.6558 0.3471L0.7919 -0.1039Z" fill="url(#j2)"/>
<path transform="matrix(-146.00 65.09 -65.09 -146.00 871.94 752.90)" d="M-0.5536 0.0706L-0.8475 0.7407L-0.7983 0.7158L-0.7445 0.6822L-0.6876 0.6430L-0.6298 0.6034L-0.5735 0.5694L-0.5195 0.5430L-0.4664 0.5210L-0.4129 0.5008L-0.3590 0.4823L-0.3043 0.4645L-0.2492 0.4489L-0.1941 0.4367L-0.1392 0.4288L-0.0830 0.4213L-0.0225 0.4063L0.0419 0.3854L0.1077 0.3646L0.1736 0.3484L0.2403 0.3351L0.3088 0.3221L0.3778 0.3132L0.4480 0.3076L0.5206 0.3018L0.5941 0.3007L0.6682 0.3063L0.7945 -0.0960Z" fill="url(#j0)"/>
<path transform="matrix(-145.66 64.97 -64.97 -145.66 872.91 753.04)" d="M-0.5545 0.0705L-0.8568 0.7584L-0.8070 0.7324L-0.7530 0.6984L-0.6966 0.6608L-0.6381 0.6199L-0.5809 0.5840L-0.5274 0.5592L-0.4758 0.5413L-0.4218 0.5199L-0.3634 0.4906L-0.3044 0.4626L-0.2485 0.4452L-0.1962 0.4403L-0.1444 0.4405L-0.0879 0.4326L-0.0260 0.4143L0.0392 0.3915L0.1055 0.3699L0.1729 0.3499L0.2417 0.3307L0.3102 0.3180L0.3769 0.3162L0.4454 0.3161L0.5186 0.3089L0.5943 0.3018L0.6705 0.3010L0.7961 -0.0979Z" fill="url(#j2)"/>
<path transform="matrix(-145.66 63.74 -63.74 -145.66 873.75 752.88)" d="M-0.5554 0.0723L-0.8820 0.8292L-0.8282 0.7939L-0.7743 0.7597L-0.7165 0.7184L-0.6555 0.6711L-0.5972 0.6323L-0.5455 0.6116L-0.4967 0.6005L-0.4439 0.5825L-0.3846 0.5509L-0.3240 0.5187L-0.2662 0.4966L-0.2115 0.4860L-0.1577 0.4814L-0.0991 0.4679L-0.0346 0.4429L0.0330 0.4131L0.0992 0.3917L0.1640 0.3790L0.2316 0.3636L0.3006 0.3496L0.3692 0.3428L0.4385 0.3408L0.5107 0.3373L0.5864 0.3306L0.6643 0.3253L0.7976 -0.1080Z" fill="url(#j3)"/>
<path transform="matrix(-145.39 63.68 -63.68 -145.39 874.70 752.96)" d="M-0.5560 0.0717L-0.8819 0.8252L-0.8282 0.7901L-0.7791 0.7674L-0.7252 0.7354L-0.6622 0.6839L-0.5976 0.6299L-0.5416 0.5990L-0.4936 0.5899L-0.4444 0.5807L-0.3870 0.5541L-0.3253 0.5192L-0.2659 0.4932L-0.2094 0.4779L-0.1542 0.4694L-0.0945 0.4534L-0.0301 0.4283L0.0366 0.4013L0.1019 0.3822L0.1642 0.3767L0.2279 0.3725L0.2949 0.3649L0.3647 0.3550L0.4360 0.3474L0.5090 0.3419L0.5844 0.3365L0.6602 0.3384L0.7987 -0.1102Z" fill="url(#j2)"/>
<path transform="matrix(-144.69 65.37 -65.37 -144.69 875.90 753.63)" d="M-0.5563 0.0686L-0.8615 0.7516L-0.8127 0.7282L-0.7614 0.7013L-0.7061 0.6670L-0.6471 0.6259L-0.5885 0.5877L-0.5344 0.5623L-0.4827 0.5446L-0.4278 0.5220L-0.3668 0.4872L-0.3041 0.4509L-0.2444 0.4247L-0.1878 0.4090L-0.1320 0.3992L-0.0732 0.3853L-0.0119 0.3690L0.0502 0.3545L0.1134 0.3417L0.1766 0.3337L0.2400 0.3303L0.3046 0.3294L0.3726 0.3251L0.4438 0.3177L0.5175 0.3103L0.5931 0.3043L0.6696 0.3039L0.7995 -0.0993Z" fill="url(#j2)"/>
<path transform="matrix(-144.88 65.87 -65.87 -144.88 877.04 754.13)" d="M-0.5548 0.0694L-0.8567 0.7398L-0.8105 0.7224L-0.7601 0.6971L-0.7045 0.6622L-0.6484 0.6278L-0.5951 0.6020L-0.5420 0.5789L-0.4836 0.5456L-0.4221 0.5070L-0.3623 0.4749L-0.3060 0.4542L-0.2508 0.4387L-0.1940 0.4227L-0.1363 0.4081L-0.0764 0.3912L-0.0151 0.3748L0.0464 0.3616L0.1091 0.3501L0.1726 0.3411L0.2378 0.3325L0.3057 0.3218L0.3771 0.3073L0.4492 0.2968L0.5205 0.2954L0.5938 0.2959L0.6704 0.2940L0.7976 -0.0966Z" fill="url(#j3)"/>
<path transform="matrix(-145.45 66.32 -66.32 -145.45 878.20 754.67)" d="M-0.5520 0.0710L-0.8522 0.7347L-0.8013 0.7062L-0.7497 0.6779L-0.6957 0.6461L-0.6410 0.6146L-0.5882 0.5893L-0.5360 0.5676L-0.4802 0.5400L-0.4220 0.5089L-0.3660 0.4855L-0.3133 0.4731L-0.2585 0.4584L-0.1968 0.4299L-0.1315 0.3955L-0.0686 0.3705L-0.0093 0.3580L0.0492 0.3521L0.1076 0.3508L0.1692 0.3461L0.2367 0.3306L0.3083 0.3088L0.3794 0.2939L0.4477 0.2933L0.5171 0.2966L0.5898 0.2976L0.6649 0.2995L0.7939 -0.0945Z" fill="url(#j3)"/>
<path transform="matrix(-145.77 64.34 -64.34 -145.77 878.94 754.29)" d="M-0.5526 0.0742L-0.8855 0.8338L-0.8322 0.7992L-0.7754 0.7583L-0.7168 0.7150L-0.6600 0.6776L-0.6084 0.6547L-0.5601 0.6419L-0.5084 0.6234L-0.4531 0.5990L-0.3959 0.5726L-0.3379 0.5468L-0.2769 0.5165L-0.2123 0.4799L-0.1482 0.4476L-0.0877 0.4284L-0.0289 0.4175L0.0312 0.4074L0.0906 0.4041L0.1523 0.3993L0.2215 0.3791L0.2946 0.3529L0.3657 0.3381L0.4333 0.3399L0.5028 0.3438L0.5762 0.3436L0.6514 0.3463L0.7950 -0.1101Z" fill="url(#j2)"/>
<path transform="matrix(-144.83 65.22 -65.22 -144.83 880.00 754.60)" d="M-0.5546 0.0713L-0.8858 0.8108L-0.8321 0.7764L-0.7744 0.7347L-0.7151 0.6910L-0.6589 0.6562L-0.6052 0.6290L-0.5519 0.6051L-0.4957 0.5768L-0.4405 0.5531L-0.3867 0.5355L-0.3298 0.5133L-0.2688 0.4839L-0.2053 0.4511L-0.1427 0.4238L-0.0828 0.4068L-0.0229 0.3937L0.0386 0.3806L0.1004 0.3712L0.1647 0.3599L0.2335 0.3413L0.3044 0.3223L0.3734 0.3141L0.4407 0.3174L0.5096 0.3233L0.5807 0.3305L0.6544 0.3385L0.7981 -0.1053Z" fill="url(#j2)"/>
<path transform="matrix(-145.39 66.21 -66.21 -145.39 881.21 755.25)" d="M-0.5513 0.0718L-0.8580 0.7479L-0.8105 0.7269L-0.7577 0.6957L-0.7026 0.6613L-0.6510 0.6367L-0.5972 0.6091L-0.5396 0.5748L-0.4790 0.5356L-0.4221 0.5075L-0.3710 0.4954L-0.3171 0.4796L-0.2584 0.4554L-0.1986 0.4311L-0.1407 0.4150L-0.0835 0.4044L-0.0210 0.3841L0.0420 0.3664L0.1001 0.3657L0.1613 0.3619L0.2302 0.3425L0.3034 0.3166L0.3726 0.3068L0.4388 0.3120L0.5090 0.3130L0.5814 0.3149L0.6535 0.3260L0.7936 -0.0998Z" fill="url(#j1)"/>
<path transform="matrix(-143.46 65.21 -65.21 -143.46 881.83 754.59)" d="M-0.5585 0.0673L-0.9007 0.8220L-0.8462 0.7870L-0.7889 0.7473L-0.7307 0.7075L-0.6737 0.6718L-0.6152 0.6348L-0.5548 0.5955L-0.4922 0.5531L-0.4311 0.5163L-0.3737 0.4906L-0.3183 0.4728L-0.2640 0.4605L-0.2095 0.4510L-0.1534 0.4413L-0.0930 0.4244L-0.0277 0.3989L0.0359 0.3815L0.0953 0.3796L0.1571 0.3765L0.2255 0.3608L0.2979 0.3395L0.3685 0.3289L0.4370 0.3305L0.5081 0.3318L0.5837 0.3273L0.6630 0.3200L0.8043 -0.1094Z" fill="url(#j0)"/>
<path transform="matrix(-142.93 65.26 -65.26 -142.93 882.79 754.67)" d="M-0.5599 0.0660L-0.9167 0.8484L-0.8554 0.7991L-0.7953 0.7535L-0.7364 0.7125L-0.6771 0.6722L-0.6166 0.6312L-0.5563 0.5923L-0.4953 0.5543L-0.4359 0.5218L-0.3767 0.4926L-0.3194 0.4703L-0.2671 0.4632L-0.2162 0.4630L-0.1610 0.4560L-0.1001 0.4384L-0.0369 0.4191L0.0268 0.4023L0.0915 0.3873L0.1568 0.3753L0.2245 0.3623L0.2944 0.3482L0.3654 0.3371L0.4368 0.3311L0.5099 0.3272L0.5867 0.3199L0.6670 0.3102L0.8065 -0.1108Z" fill="url(#j0)"/>
<path transform="matrix(-144.41 66.57 -66.57 -144.41 884.24 755.83)" d="M-0.5531 0.0700L-0.8816 0.7824L-0.8262 0.7450L-0.7690 0.7051L-0.7132 0.6700L-0.6577 0.6373L-0.6009 0.6034L-0.5444 0.5725L-0.4884 0.5447L-0.4316 0.5176L-0.3724 0.4872L-0.3143 0.4622L-0.2616 0.4526L-0.2100 0.4493L-0.1551 0.4413L-0.0963 0.4276L-0.0348 0.4109L0.0289 0.3924L0.0952 0.3715L0.1622 0.3533L0.2301 0.3376L0.2979 0.3270L0.3654 0.3230L0.4353 0.3188L0.5090 0.3106L0.5855 0.3015L0.6621 0.2997L0.7971 -0.1015Z" fill="url(#j1)"/>
<path transform="matrix(-142.81 69.13 -69.13 -142.81 885.52 756.59)" d="M-0.5552 0.0638L-0.8592 0.6908L-0.8032 0.6540L-0.7442 0.6126L-0.6846 0.5713L-0.6261 0.5339L-0.5732 0.5104L-0.5238 0.4963L-0.4687 0.4722L-0.4075 0.4370L-0.3443 0.3997L-0.2840 0.3708L-0.2270 0.3523L-0.1709 0.3387L-0.1151 0.3288L-0.0586 0.3211L0.0016 0.3081L0.0646 0.2923L0.1276 0.2805L0.1885 0.2781L0.2519 0.2746L0.3211 0.2616L0.3926 0.2477L0.4634 0.2415L0.5324 0.2463L0.6019 0.2571L0.6721 0.2738L0.8004 -0.0844Z" fill="url(#j0)"/>
<path transform="matrix(-143.21 68.14 -68.14 -143.21 886.44 756.60)" d="M-0.5547 0.0664L-0.8632 0.7131L-0.8166 0.6953L-0.7662 0.6713L-0.7088 0.6341L-0.6482 0.5916L-0.5937 0.5643L-0.5401 0.5410L-0.4794 0.5041L-0.4191 0.4702L-0.3628 0.4478L-0.3056 0.4255L-0.2427 0.3932L-0.1804 0.3649L-0.1240 0.3535L-0.0709 0.3535L-0.0116 0.3425L0.0538 0.3205L0.1172 0.3072L0.1761 0.3100L0.2358 0.3159L0.3033 0.3072L0.3748 0.2934L0.4474 0.2826L0.5213 0.2743L0.5960 0.2708L0.6686 0.2811L0.7999 -0.0927Z" fill="url(#j2)"/>
<path transform="matrix(-143.04 68.47 -68.47 -143.04 887.51 756.90)" d="M-0.5545 0.0660L-0.8706 0.7236L-0.8164 0.6902L-0.7653 0.6648L-0.7120 0.6366L-0.6525 0.5968L-0.5913 0.5552L-0.5316 0.5185L-0.4720 0.4841L-0.4167 0.4616L-0.3653 0.4499L-0.3101 0.4326L-0.2496 0.4061L-0.1903 0.3850L-0.1336 0.3731L-0.0748 0.3598L-0.0135 0.3441L0.0465 0.3356L0.1064 0.3314L0.1708 0.3207L0.2371 0.3100L0.3029 0.3054L0.3700 0.3033L0.4422 0.2937L0.5206 0.2737L0.6006 0.2557L0.6785 0.2504L0.8000 -0.0918Z" fill="url(#j1)"/>
<path transform="matrix(-141.24 68.18 -68.18 -141.24 888.36 756.75)" d="M-0.5605 0.0626L-0.9117 0.7861L-0.8503 0.7393L-0.7893 0.6949L-0.7281 0.6515L-0.6653 0.6061L-0.6026 0.5627L-0.5436 0.5292L-0.4865 0.5018L-0.4314 0.4809L-0.3784 0.4672L-0.3227 0.4503L-0.2618 0.4245L-0.2000 0.3996L-0.1393 0.3800L-0.0768 0.3596L-0.0134 0.3408L0.0486 0.3287L0.1109 0.3202L0.1764 0.3086L0.2444 0.2952L0.3121 0.2877L0.3801 0.2850L0.4512 0.2801L0.5268 0.2696L0.6061 0.2559L0.6860 0.2477L0.8089 -0.0944Z" fill="url(#j2)"/>
<path transform="matrix(-141.50 69.20 -69.20 -141.50 889.59 757.39)" d="M-0.5581 0.0628L-0.8895 0.7359L-0.8324 0.6979L-0.7727 0.6562L-0.7113 0.6124L-0.6507 0.5719L-0.5918 0.5366L-0.5329 0.5032L-0.4739 0.4715L-0.4181 0.4491L-0.3660 0.4369L-0.3121 0.4236L-0.2519 0.3991L-0.1889 0.3712L-0.1271 0.3487L-0.0654 0.3297L-0.0030 0.3126L0.0600 0.2976L0.1223 0.2886L0.1844 0.2842L0.2486 0.2797L0.3146 0.2758L0.3831 0.2708L0.4549 0.2637L0.5304 0.2526L0.6075 0.2442L0.6836 0.2455L0.8057 -0.0883Z" fill="url(#j2)"/>
<path transform="matrix(-141.89 68.55 -68.55 -141.89 890.51 757.38)" d="M-0.5572 0.0641L-0.8947 0.7572L-0.8411 0.7259L-0.7822 0.6852L-0.7183 0.6355L-0.6559 0.5904L-0.5981 0.5569L-0.5412 0.5272L-0.4810 0.4924L-0.4221 0.4624L-0.3672 0.4440L-0.3136 0.4307L-0.2570 0.4138L-0.1978 0.3938L-0.1389 0.3775L-0.0809 0.3670L-0.0227 0.3595L0.0396 0.3464L0.1058 0.3279L0.1709 0.3160L0.2332 0.3161L0.2972 0.3173L0.3684 0.3059L0.4456 0.2844L0.5247 0.2636L0.6006 0.2579L0.6735 0.2677L0.8046 -0.0954Z" fill="url(#j2)"/>
<path transform="matrix(-143.02 69.72 -69.72 -143.02 891.87 758.27)" d="M-0.5517 0.0666L-0.8675 0.7083L-0.8171 0.6830L-0.7603 0.6460L-0.6991 0.6013L-0.6400 0.5626L-0.5857 0.5357L-0.5313 0.5107L-0.4732 0.4798L-0.4170 0.4550L-0.3641 0.4400L-0.3117 0.4285L-0.2550 0.4105L-0.1944 0.3865L-0.1327 0.3631L-0.0736 0.3485L-0.0170 0.3437L0.0422 0.3363L0.1054 0.3237L0.1685 0.3158L0.2305 0.3152L0.2975 0.3073L0.3722 0.2852L0.4492 0.2624L0.5238 0.2516L0.5976 0.2496L0.6730 0.2505L0.7970 -0.0884Z" fill="url(#j3)"/>
<path transform="matrix(-143.27 68.84 -68.84 -143.27 892.81 758.30)" d="M-0.5515 0.0687L-0.8878 0.7610L-0.8293 0.7186L-0.7697 0.6752L-0.7091 0.6313L-0.6516 0.5953L-0.6010 0.5761L-0.5526 0.5636L-0.4953 0.5341L-0.4331 0.4961L-0.3761 0.4718L-0.3239 0.4606L-0.2680 0.4442L-0.2079 0.4212L-0.1470 0.3993L-0.0857 0.3794L-0.0233 0.3607L0.0392 0.3455L0.1006 0.3368L0.1621 0.3326L0.2252 0.3290L0.2923 0.3206L0.3646 0.3043L0.4387 0.2890L0.5116 0.2826L0.5857 0.2800L0.6635 0.2746L0.7970 -0.0959Z" fill="url(#j2)"/>
<path transform="matrix(-143.57 69.37 -69.37 -143.57 893.93 758.69)" d="M-0.5495 0.0688L-0.8668 0.7175L-0.8106 0.6795L-0.7574 0.6491L-0.7035 0.6189L-0.6494 0.5901L-0.5965 0.5656L-0.5431 0.5421L-0.4836 0.5077L-0.4208 0.4680L-0.3621 0.4396L-0.3065 0.4203L-0.2492 0.3999L-0.1930 0.3850L-0.1411 0.3832L-0.0878 0.3817L-0.0256 0.3630L0.0424 0.3345L0.1079 0.3153L0.1700 0.3089L0.2303 0.3114L0.2918 0.3165L0.3576 0.3164L0.4284 0.3094L0.5036 0.2968L0.5819 0.2826L0.6608 0.2736L0.7945 -0.0942Z" fill="url(#j0)"/>
<path transform="matrix(-142.55 70.70 -70.70 -142.55 895.09 759.14)" d="M-0.5510 0.0652L-0.8554 0.6709L-0.7990 0.6337L-0.7441 0.6007L-0.6908 0.5728L-0.6400 0.5517L-0.5882 0.5302L-0.5321 0.5022L-0.4704 0.4642L-0.4059 0.4222L-0.3438 0.3873L-0.2853 0.3623L-0.2293 0.3455L-0.1741 0.3333L-0.1212 0.3293L-0.0681 0.3282L-0.0077 0.3143L0.0579 0.2920L0.1220 0.2771L0.1837 0.2719L0.2452 0.2718L0.3066 0.2771L0.3690 0.2855L0.4358 0.2891L0.5101 0.2798L0.5910 0.2597L0.6732 0.2426L0.7968 -0.0862Z" fill="url(#j0)"/>
<path transform="matrix(-141.88 70.90 -70.90 -141.88 896.14 759.39)" d="M-0.5526 0.0643L-0.8630 0.6767L-0.8096 0.6459L-0.7539 0.6120L-0.6952 0.5738L-0.6416 0.5474L-0.5909 0.5287L-0.5353 0.5020L-0.4739 0.4653L-0.4100 0.4252L-0.3486 0.3925L-0.2897 0.3674L-0.2340 0.3517L-0.1778 0.3377L-0.1182 0.3193L-0.0580 0.3028L0.0036 0.2865L0.0650 0.2742L0.1249 0.2691L0.1848 0.2685L0.2452 0.2715L0.3061 0.2784L0.3698 0.2842L0.4407 0.2781L0.5185 0.2604L0.5979 0.2449L0.6747 0.2426L0.7994 -0.0855Z" fill="url(#j1)"/>
<path transform="matrix(-142.25 69.61 -69.61 -142.25 897.01 759.28)" d="M-0.5525 0.0669L-0.8836 0.7328L-0.8268 0.6946L-0.7751 0.6681L-0.7213 0.6392L-0.6664 0.6098L-0.6103 0.5797L-0.5495 0.5415L-0.4854 0.4982L-0.4237 0.4621L-0.3693 0.4438L-0.3158 0.4301L-0.2580 0.4097L-0.1961 0.3829L-0.1316 0.3533L-0.0696 0.3323L-0.0096 0.3192L0.0485 0.3141L0.1063 0.3144L0.1666 0.3129L0.2285 0.3127L0.2915 0.3147L0.3580 0.3137L0.4310 0.3022L0.5079 0.2866L0.5839 0.2799L0.6602 0.2793L0.7996 -0.0962Z" fill="url(#j3)"/>
<path transform="matrix(-140.61 68.40 -68.40 -140.61 897.70 758.75)" d="M-0.5590 0.0641L-0.9342 0.8220L-0.8735 0.7770L-0.8158 0.7396L-0.7571 0.7018L-0.6974 0.6635L-0.6372 0.6259L-0.5754 0.5866L-0.5127 0.5475L-0.4505 0.5115L-0.3892 0.4796L-0.3291 0.4528L-0.2691 0.4288L-0.2082 0.4054L-0.1451 0.3803L-0.0841 0.3631L-0.0273 0.3590L0.0293 0.3595L0.0912 0.3519L0.1585 0.3359L0.2262 0.3233L0.2926 0.3189L0.3595 0.3189L0.4307 0.3139L0.5059 0.3051L0.5839 0.2953L0.6646 0.2856L0.8094 -0.1062Z" fill="url(#j1)"/>
<path transform="matrix(-141.47 69.83 -69.83 -141.47 899.11 759.74)" d="M-0.5541 0.0661L-0.9065 0.7670L-0.8470 0.7242L-0.7875 0.6828L-0.7327 0.6523L-0.6789 0.6258L-0.6208 0.5922L-0.5591 0.5529L-0.4985 0.5178L-0.4398 0.4889L-0.3792 0.4580L-0.3176 0.4274L-0.2582 0.4040L-0.2021 0.3905L-0.1476 0.3840L-0.0934 0.3813L-0.0358 0.3748L0.0275 0.3592L0.0959 0.3353L0.1655 0.3129L0.2325 0.3007L0.2981 0.2967L0.3656 0.2936L0.4374 0.2854L0.5120 0.2762L0.5876 0.2710L0.6640 0.2706L0.8025 -0.0968Z" fill="url(#j2)"/>
<path transform="matrix(-141.52 70.36 -70.36 -141.52 900.24 760.12)" d="M-0.5529 0.0658L-0.9075 0.7651L-0.8406 0.7078L-0.7749 0.6540L-0.7161 0.6155L-0.6620 0.5882L-0.6057 0.5580L-0.5476 0.5262L-0.4889 0.4949L-0.4314 0.4685L-0.3753 0.4470L-0.3203 0.4303L-0.2672 0.4208L-0.2110 0.4072L-0.1490 0.3840L-0.0858 0.3613L-0.0247 0.3464L0.0352 0.3381L0.0979 0.3273L0.1636 0.3136L0.2303 0.3021L0.2976 0.2940L0.3671 0.2856L0.4384 0.2783L0.5106 0.2749L0.5847 0.2731L0.6618 0.2708L0.8011 -0.0948Z" fill="url(#j0)"/>
<path transform="matrix(-143.00 72.38 -72.38 -143.00 901.75 761.24)" d="M-0.5453 0.0676L-0.8461 0.6497L-0.7891 0.6111L-0.7352 0.5801L-0.6832 0.5542L-0.6305 0.5288L-0.5768 0.5032L-0.5243 0.4816L-0.4733 0.4653L-0.4196 0.4458L-0.3603 0.4168L-0.2973 0.3824L-0.2368 0.3556L-0.1813 0.3419L-0.1252 0.3299L-0.0652 0.3127L-0.0050 0.2982L0.0535 0.2910L0.1125 0.2867L0.1736 0.2817L0.2368 0.2763L0.3018 0.2716L0.3701 0.2639L0.4392 0.2597L0.5082 0.2618L0.5801 0.2632L0.6566 0.2598L0.7903 -0.0831Z" fill="url(#j3)"/>
<path transform="matrix(-143.99 72.06 -72.06 -143.99 902.90 761.68)" d="M-0.5421 0.0716L-0.8431 0.6596L-0.7944 0.6366L-0.7477 0.6190L-0.6959 0.5929L-0.6389 0.5581L-0.5828 0.5268L-0.5297 0.5034L-0.4799 0.4889L-0.4288 0.4739L-0.3730 0.4516L-0.3137 0.4240L-0.2545 0.3993L-0.1992 0.3855L-0.1432 0.3732L-0.0827 0.3543L-0.0201 0.3336L0.0422 0.3172L0.1036 0.3067L0.1658 0.2984L0.2297 0.2905L0.2953 0.2833L0.3648 0.2718L0.4355 0.2627L0.5033 0.2666L0.5706 0.2783L0.6432 0.2840L0.7860 -0.0864Z" fill="url(#j3)"/>
<path transform="matrix(-143.49 72.17 -72.17 -143.49 903.93 761.86)" d="M-0.5432 0.0707L-0.8565 0.6792L-0.8061 0.6530L-0.7493 0.6158L-0.6890 0.5732L-0.6325 0.5396L-0.5822 0.5203L-0.5352 0.5096L-0.4864 0.4973L-0.4321 0.4762L-0.3742 0.4496L-0.3163 0.4256L-0.2602 0.4076L-0.2029 0.3901L-0.1446 0.3732L-0.0857 0.3580L-0.0222 0.3359L0.0456 0.3076L0.1107 0.2888L0.1691 0.2895L0.2275 0.2946L0.2924 0.2895L0.3628 0.2763L0.4334 0.2680L0.5019 0.2706L0.5720 0.2759L0.6486 0.2716L0.7879 -0.0870Z" fill="url(#j3)"/>
<path transform="matrix(-142.44 71.59 -71.59 -142.44 904.80 761.71)" d="M-0.5469 0.0691L-0.8824 0.7203L-0.8253 0.6818L-0.7633 0.6350L-0.7030 0.5930L-0.6494 0.5659L-0.5988 0.5464L-0.5483 0.5294L-0.4955 0.5096L-0.4388 0.4841L-0.3784 0.4531L-0.3160 0.4202L-0.2562 0.3949L-0.2007 0.3818L-0.1490 0.3798L-0.0946 0.3751L-0.0293 0.3501L0.0432 0.3122L0.1111 0.2878L0.1683 0.2919L0.2240 0.3044L0.2867 0.3056L0.3556 0.2974L0.4255 0.2922L0.4958 0.2918L0.5724 0.2822L0.6589 0.2541L0.7936 -0.0921Z" fill="url(#j1)"/>
<path transform="matrix(-141.15 72.54 -72.54 -141.15 905.92 762.04)" d="M-0.5496 0.0656L-0.8824 0.6966L-0.8270 0.6627L-0.7632 0.6140L-0.6952 0.5585L-0.6360 0.5213L-0.5859 0.5037L-0.5408 0.4981L-0.4943 0.4918L-0.4396 0.4714L-0.3758 0.4347L-0.3073 0.3907L-0.2448 0.3611L-0.1882 0.3463L-0.1300 0.3309L-0.0684 0.3115L-0.0066 0.2947L0.0534 0.2853L0.1141 0.2782L0.1758 0.2729L0.2387 0.2693L0.3033 0.2667L0.3696 0.2652L0.4372 0.2662L0.5073 0.2672L0.5841 0.2582L0.6678 0.2385L0.7978 -0.0861Z" fill="url(#j2)"/>
<path transform="matrix(-140.81 71.58 -71.58 -140.81 906.82 761.95)" d="M-0.5515 0.0664L-0.9079 0.7487L-0.8468 0.7036L-0.7860 0.6607L-0.7229 0.6146L-0.6603 0.5708L-0.6044 0.5421L-0.5554 0.5288L-0.5064 0.5178L-0.4505 0.4951L-0.3876 0.4602L-0.3231 0.4243L-0.2614 0.3964L-0.2011 0.3740L-0.1384 0.3494L-0.0732 0.3224L-0.0103 0.3033L0.0481 0.2976L0.1063 0.2964L0.1670 0.2939L0.2308 0.2889L0.2974 0.2820L0.3652 0.2775L0.4330 0.2786L0.5023 0.2820L0.5764 0.2803L0.6562 0.2712L0.8008 -0.0940Z" fill="url(#j1)"/>
<path transform="matrix(-141.04 72.25 -72.25 -141.04 907.99 762.41)" d="M-0.5496 0.0665L-0.9050 0.7410L-0.8338 0.6768L-0.7737 0.6351L-0.7176 0.6025L-0.6547 0.5584L-0.5926 0.5172L-0.5392 0.4950L-0.4923 0.4877L-0.4414 0.4747L-0.3847 0.4524L-0.3285 0.4333L-0.2709 0.4142L-0.2099 0.3903L-0.1458 0.3627L-0.0818 0.3383L-0.0218 0.3256L0.0365 0.3201L0.0973 0.3129L0.1608 0.3040L0.2262 0.2949L0.2934 0.2866L0.3626 0.2784L0.4331 0.2726L0.5044 0.2707L0.5799 0.2646L0.6612 0.2511L0.7983 -0.0912Z" fill="url(#j3)"/>
<path transform="matrix(-139.54 69.87 -69.87 -139.54 908.42 761.37)" d="M-0.5570 0.0640L-0.9701 0.8645L-0.8994 0.8014L-0.8342 0.7502L-0.7685 0.6995L-0.6986 0.6418L-0.6314 0.5907L-0.5731 0.5594L-0.5199 0.5405L-0.4662 0.5226L-0.4125 0.5075L-0.3581 0.4932L-0.2985 0.4708L-0.2357 0.4442L-0.1723 0.4193L-0.1112 0.4023L-0.0509 0.3905L0.0114 0.3780L0.0751 0.3663L0.1395 0.3573L0.2044 0.3515L0.2714 0.3457L0.3443 0.3312L0.4210 0.3130L0.4954 0.3059L0.5724 0.2989L0.6560 0.2821L0.8094 -0.1107Z" fill="url(#j3)"/>
<path transform="matrix(-142.73 72.15 -72.15 -142.73 910.36 763.34)" d="M-0.5434 0.0728L-0.8837 0.7253L-0.8300 0.6930L-0.7823 0.6739L-0.7281 0.6438L-0.6714 0.6104L-0.6200 0.5893L-0.5695 0.5718L-0.5121 0.5427L-0.4490 0.5039L-0.3911 0.4777L-0.3373 0.4622L-0.2801 0.4423L-0.2211 0.4214L-0.1630 0.4051L-0.1044 0.3908L-0.0399 0.3671L0.0279 0.3392L0.0921 0.3230L0.1549 0.3136L0.2190 0.3058L0.2843 0.3000L0.3510 0.2959L0.4194 0.2930L0.4905 0.2898L0.5658 0.2823L0.6452 0.2712L0.7900 -0.0945Z" fill="url(#j0)"/>
<path transform="matrix(-140.92 72.98 -72.98 -140.92 911.44 763.57)" d="M-0.5479 0.0684L-0.8952 0.7178L-0.8403 0.6849L-0.7872 0.6568L-0.7289 0.6204L-0.6730 0.5901L-0.6247 0.5763L-0.5724 0.5566L-0.5062 0.5116L-0.4366 0.4615L-0.3792 0.4376L-0.3296 0.4318L-0.2724 0.4132L-0.2080 0.3825L-0.1490 0.3655L-0.0956 0.3633L-0.0344 0.3481L0.0347 0.3193L0.1013 0.2993L0.1670 0.2851L0.2356 0.2685L0.3040 0.2566L0.3675 0.2609L0.4325 0.2672L0.5054 0.2611L0.5824 0.2512L0.6596 0.2470L0.7968 -0.0890Z" fill="url(#j3)"/>
<path transform="matrix(-139.46 72.39 -72.39 -139.46 912.22 763.24)" d="M-0.5531 0.0650L-0.9335 0.7739L-0.8679 0.7220L-0.8035 0.6736L-0.7425 0.6328L-0.6863 0.6027L-0.6307 0.5757L-0.5688 0.5381L-0.5008 0.4904L-0.4381 0.4547L-0.3866 0.4434L-0.3379 0.4403L-0.2813 0.4241L-0.2188 0.3982L-0.1594 0.3817L-0.1038 0.3760L-0.0417 0.3603L0.0279 0.3318L0.0975 0.3067L0.1637 0.2927L0.2279 0.2873L0.2919 0.2871L0.3566 0.2904L0.4285 0.2828L0.5087 0.2610L0.5884 0.2465L0.6632 0.2499L0.8045 -0.0949Z" fill="url(#j1)"/>
<path transform="matrix(-137.31 72.00 -72.00 -137.31 912.96 762.84)" d="M-0.5604 0.0593L-0.9692 0.8125L-0.8986 0.7531L-0.8249 0.6891L-0.7529 0.6294L-0.6854 0.5792L-0.6216 0.5377L-0.5617 0.5053L-0.5022 0.4755L-0.4438 0.4497L-0.3862 0.4278L-0.3273 0.4057L-0.2666 0.3823L-0.2069 0.3636L-0.1524 0.3584L-0.1013 0.3636L-0.0473 0.3664L0.0149 0.3555L0.0854 0.3309L0.1583 0.3046L0.2302 0.2844L0.2998 0.2738L0.3694 0.2680L0.4413 0.2624L0.5146 0.2590L0.5885 0.2608L0.6627 0.2686L0.8155 -0.0990Z" fill="url(#j3)"/>
<path transform="matrix(-138.72 72.63 -72.63 -138.72 914.33 763.63)" d="M-0.5544 0.0635L-0.9391 0.7723L-0.8750 0.7239L-0.8067 0.6688L-0.7434 0.6244L-0.6841 0.5889L-0.6234 0.5524L-0.5624 0.5170L-0.5027 0.4859L-0.4453 0.4612L-0.3859 0.4348L-0.3216 0.4008L-0.2555 0.3655L-0.1939 0.3415L-0.1427 0.3416L-0.0959 0.3541L-0.0464 0.3650L0.0100 0.3650L0.0778 0.3447L0.1516 0.3152L0.2275 0.2850L0.3008 0.2643L0.3717 0.2538L0.4411 0.2520L0.5086 0.2603L0.5786 0.2692L0.6518 0.2776L0.8071 -0.0962Z" fill="url(#j1)"/>
<path transform="matrix(-138.39 73.40 -73.40 -138.39 915.54 764.11)" d="M-0.5542 0.0627L-0.9282 0.7423L-0.8604 0.6877L-0.7956 0.6397L-0.7366 0.6038L-0.6799 0.5736L-0.6205 0.5399L-0.5561 0.4986L-0.4909 0.4574L-0.4313 0.4286L-0.3737 0.4059L-0.3124 0.3780L-0.2477 0.3458L-0.1844 0.3187L-0.1283 0.3089L-0.0786 0.3151L-0.0309 0.3290L0.0224 0.3351L0.0868 0.3222L0.1565 0.3016L0.2284 0.2805L0.3020 0.2595L0.3772 0.2397L0.4495 0.2311L0.5160 0.2412L0.5815 0.2604L0.6522 0.2743L0.8070 -0.0917Z" fill="url(#j3)"/>
<path transform="matrix(-138.88 73.08 -73.08 -138.88 916.60 764.31)" d="M-0.5525 0.0645L-0.9280 0.7513L-0.8621 0.6994L-0.7988 0.6536L-0.7419 0.6209L-0.6911 0.6014L-0.6371 0.5775L-0.5722 0.5349L-0.5049 0.4890L-0.4439 0.4572L-0.3829 0.4274L-0.3167 0.3896L-0.2517 0.3562L-0.1937 0.3393L-0.1416 0.3370L-0.0910 0.3411L-0.0391 0.3463L0.0195 0.3411L0.0873 0.3203L0.1552 0.3029L0.2191 0.2983L0.2843 0.2954L0.3574 0.2800L0.4334 0.2630L0.5054 0.2604L0.5760 0.2672L0.6503 0.2724L0.8050 -0.0960Z" fill="url(#j1)"/>
<path transform="matrix(-139.44 72.47 -72.47 -139.44 917.64 764.47)" d="M-0.5511 0.0671L-0.9436 0.7928L-0.8709 0.7277L-0.8054 0.6770L-0.7517 0.6496L-0.7029 0.6335L-0.6500 0.6112L-0.5907 0.5786L-0.5279 0.5411L-0.4643 0.5037L-0.3973 0.4615L-0.3297 0.4201L-0.2671 0.3909L-0.2119 0.3794L-0.1598 0.3770L-0.1029 0.3680L-0.0397 0.3492L0.0270 0.3261L0.0928 0.3087L0.1557 0.3011L0.2164 0.3029L0.2752 0.3138L0.3377 0.3216L0.4083 0.3166L0.4864 0.3000L0.5674 0.2823L0.6473 0.2733L0.8031 -0.1022Z" fill="url(#j3)"/>
<path transform="matrix(-140.40 73.09 -73.09 -140.40 918.94 765.12)" d="M-0.5467 0.0696L-0.9149 0.7484L-0.8539 0.7042L-0.7954 0.6659L-0.7407 0.6362L-0.6887 0.6131L-0.6388 0.5959L-0.5855 0.5741L-0.5256 0.5415L-0.4597 0.4991L-0.3913 0.4535L-0.3280 0.4199L-0.2697 0.3988L-0.2137 0.3847L-0.1564 0.3709L-0.0938 0.3491L-0.0291 0.3260L0.0343 0.3090L0.0934 0.3047L0.1495 0.3109L0.2058 0.3212L0.2662 0.3274L0.3338 0.3228L0.4066 0.3118L0.4825 0.2988L0.5606 0.2867L0.6420 0.2728L0.7971 -0.0997Z" fill="url(#j2)"/>
<path transform="matrix(-140.52 74.09 -74.09 -140.52 920.17 765.63)" d="M-0.5447 0.0689L-0.9010 0.7168L-0.8381 0.6693L-0.7784 0.6291L-0.7216 0.5954L-0.6663 0.5660L-0.6158 0.5475L-0.5644 0.5289L-0.5075 0.5020L-0.4451 0.4664L-0.3800 0.4274L-0.3204 0.4012L-0.2656 0.3868L-0.2107 0.3749L-0.1536 0.3613L-0.0924 0.3423L-0.0316 0.3273L0.0277 0.3186L0.0878 0.3120L0.1451 0.3153L0.1997 0.3290L0.2619 0.3311L0.3350 0.3140L0.4124 0.2920L0.4886 0.2781L0.5630 0.2740L0.6442 0.2600L0.7945 -0.0949Z" fill="url(#j3)"/>
<path transform="matrix(-139.65 72.93 -72.93 -139.65 920.96 765.29)" d="M-0.5486 0.0679L-0.9396 0.7846L-0.8691 0.7235L-0.8066 0.6784L-0.7487 0.6429L-0.6920 0.6115L-0.6341 0.5792L-0.5733 0.5433L-0.5136 0.5111L-0.4564 0.4857L-0.3974 0.4589L-0.3376 0.4329L-0.2792 0.4119L-0.2235 0.3988L-0.1670 0.3872L-0.1071 0.3715L-0.0488 0.3625L0.0097 0.3565L0.0734 0.3432L0.1389 0.3300L0.2004 0.3295L0.2618 0.3342L0.3308 0.3272L0.4068 0.3093L0.4832 0.2959L0.5567 0.2952L0.6316 0.2977L0.8004 -0.1047Z" fill="url(#j3)"/>
<path transform="matrix(-139.75 74.45 -74.45 -139.75 922.40 766.19)" d="M-0.5460 0.0682L-0.9073 0.7170L-0.8443 0.6701L-0.7885 0.6376L-0.7316 0.6044L-0.6731 0.5696L-0.6136 0.5347L-0.5557 0.5045L-0.5008 0.4815L-0.4462 0.4613L-0.3900 0.4400L-0.3314 0.4165L-0.2714 0.3923L-0.2082 0.3645L-0.1412 0.3315L-0.0763 0.3054L-0.0196 0.2988L0.0347 0.3004L0.0941 0.2954L0.1550 0.2912L0.2137 0.2962L0.2757 0.2985L0.3463 0.2870L0.4192 0.2756L0.4881 0.2784L0.5573 0.2866L0.6337 0.2849L0.7969 -0.0945Z" fill="url(#j1)"/>
<path transform="matrix(-138.01 74.94 -74.94 -138.01 923.50 766.45)" d="M-0.5506 0.0650L-0.9249 0.7238L-0.8566 0.6691L-0.7992 0.6351L-0.7442 0.6068L-0.6833 0.5693L-0.6204 0.5296L-0.5665 0.5080L-0.5127 0.4886L-0.4502 0.4550L-0.3848 0.4177L-0.3212 0.3859L-0.2602 0.3610L-0.1967 0.3340L-0.1312 0.3055L-0.0686 0.2851L-0.0095 0.2749L0.0500 0.2670L0.1119 0.2580L0.1728 0.2547L0.2293 0.2647L0.2880 0.2750L0.3563 0.2700L0.4274 0.2639L0.4982 0.2638L0.5734 0.2599L0.6553 0.2472L0.8040 -0.0904Z" fill="url(#j2)"/>
<path transform="matrix(-138.32 75.79 -75.79 -138.32 924.80 767.06)" d="M-0.5481 0.0657L-0.9023 0.6829L-0.8428 0.6439L-0.7901 0.6181L-0.7380 0.5947L-0.6789 0.5605L-0.6153 0.5196L-0.5586 0.4929L-0.5063 0.4759L-0.4507 0.4548L-0.3882 0.4231L-0.3176 0.3782L-0.2487 0.3383L-0.1870 0.3144L-0.1292 0.3003L-0.0711 0.2886L-0.0140 0.2819L0.0430 0.2788L0.1047 0.2698L0.1727 0.2520L0.2375 0.2442L0.2974 0.2512L0.3608 0.2556L0.4281 0.2569L0.4995 0.2548L0.5771 0.2449L0.6564 0.2373L0.8006 -0.0860Z" fill="url(#j1)"/>
<path transform="matrix(-138.09 74.97 -74.97 -138.09 925.69 766.93)" d="M-0.5495 0.0659L-0.9211 0.7184L-0.8673 0.6892L-0.8125 0.6597L-0.7544 0.6257L-0.6915 0.5845L-0.6255 0.5390L-0.5629 0.5014L-0.5043 0.4727L-0.4470 0.4483L-0.3860 0.4191L-0.3213 0.3850L-0.2596 0.3587L-0.2049 0.3481L-0.1532 0.3463L-0.0980 0.3405L-0.0390 0.3307L0.0239 0.3162L0.0926 0.2937L0.1665 0.2638L0.2361 0.2465L0.2962 0.2532L0.3531 0.2716L0.4156 0.2838L0.4876 0.2809L0.5659 0.2701L0.6448 0.2639L0.8030 -0.0938Z" fill="url(#j0)"/>
<path transform="matrix(-138.22 75.05 -75.05 -138.22 926.82 767.22)" d="M-0.5486 0.0666L-0.9288 0.7333L-0.8706 0.6962L-0.8153 0.6658L-0.7582 0.6335L-0.6958 0.5930L-0.6317 0.5510L-0.5697 0.5145L-0.5086 0.4811L-0.4468 0.4483L-0.3875 0.4220L-0.3327 0.4064L-0.2767 0.3909L-0.2202 0.3768L-0.1667 0.3716L-0.1150 0.3728L-0.0576 0.3661L0.0114 0.3398L0.0838 0.3096L0.1547 0.2859L0.2210 0.2754L0.2829 0.2784L0.3463 0.2832L0.4162 0.2792L0.4933 0.2648L0.5706 0.2557L0.6426 0.2645L0.8019 -0.0950Z" fill="url(#j1)"/>
<path transform="matrix(-139.03 74.89 -74.89 -139.03 927.96 767.54)" d="M-0.5458 0.0691L-0.9393 0.7637L-0.8745 0.7145L-0.8086 0.6643L-0.7442 0.6181L-0.6814 0.5761L-0.6245 0.5463L-0.5733 0.5286L-0.5238 0.5160L-0.4717 0.5006L-0.4148 0.4785L-0.3539 0.4511L-0.2891 0.4183L-0.2257 0.3905L-0.1659 0.3723L-0.1108 0.3660L-0.0561 0.3639L0.0041 0.3542L0.0686 0.3394L0.1368 0.3206L0.2048 0.3060L0.2722 0.2970L0.3419 0.2876L0.4134 0.2792L0.4854 0.2750L0.5565 0.2788L0.6294 0.2850L0.7981 -0.0985Z" fill="url(#j2)"/>
<path transform="matrix(-141.10 75.12 -75.12 -141.10 929.36 768.34)" d="M-0.5384 0.0753L-0.9159 0.7485L-0.8540 0.7027L-0.7931 0.6598L-0.7373 0.6275L-0.6866 0.6061L-0.6393 0.5927L-0.5899 0.5771L-0.5354 0.5542L-0.4790 0.5296L-0.4234 0.5084L-0.3649 0.4841L-0.3025 0.4544L-0.2392 0.4253L-0.1767 0.4002L-0.1165 0.3825L-0.0582 0.3714L-0.0006 0.3653L0.0611 0.3543L0.1275 0.3373L0.1918 0.3286L0.2549 0.3268L0.3227 0.3194L0.3966 0.3040L0.4715 0.2915L0.5458 0.2857L0.6235 0.2785L0.7876 -0.0989Z" fill="url(#j2)"/>
<path transform="matrix(-140.39 77.34 -77.34 -140.39 930.83 769.21)" d="M-0.5375 0.0724L-0.8735 0.6512L-0.8144 0.6114L-0.7647 0.5893L-0.7186 0.5749L-0.6717 0.5609L-0.6215 0.5427L-0.5668 0.5183L-0.5074 0.4871L-0.4482 0.4580L-0.3954 0.4426L-0.3420 0.4281L-0.2795 0.3991L-0.2089 0.3572L-0.1403 0.3210L-0.0812 0.3056L-0.0283 0.3050L0.0245 0.3080L0.0840 0.3015L0.1505 0.2845L0.2183 0.2687L0.2847 0.2596L0.3519 0.2535L0.4214 0.2473L0.4895 0.2491L0.5562 0.2597L0.6285 0.2647L0.7866 -0.0845Z" fill="url(#j2)"/>
<path transform="matrix(-138.54 77.16 -77.16 -138.54 931.70 769.03)" d="M-0.5432 0.0680L-0.8993 0.6741L-0.8338 0.6248L-0.7798 0.5964L-0.7298 0.5762L-0.6766 0.5521L-0.6172 0.5188L-0.5534 0.4791L-0.4887 0.4394L-0.4335 0.4185L-0.3883 0.4175L-0.3407 0.4147L-0.2804 0.3910L-0.2091 0.3492L-0.1378 0.3096L-0.0737 0.2858L-0.0171 0.2791L0.0350 0.2843L0.0880 0.2916L0.1480 0.2891L0.2154 0.2756L0.2863 0.2592L0.3565 0.2485L0.4251 0.2458L0.4929 0.2499L0.5612 0.2589L0.6369 0.2580L0.7952 -0.0865Z" fill="url(#j3)"/>
<path transform="matrix(-136.75 75.14 -75.14 -136.75 932.22 768.20)" d="M-0.5512 0.0649L-0.9752 0.7951L-0.9004 0.7304L-0.8314 0.6769L-0.7673 0.6330L-0.7048 0.5932L-0.6412 0.5530L-0.5729 0.5059L-0.5057 0.4622L-0.4523 0.4453L-0.4064 0.4443L-0.3585 0.4420L-0.3047 0.4313L-0.2445 0.4115L-0.1819 0.3893L-0.1175 0.3667L-0.0531 0.3469L0.0089 0.3350L0.0693 0.3295L0.1331 0.3212L0.2019 0.3067L0.2729 0.2919L0.3425 0.2844L0.4146 0.2766L0.4881 0.2711L0.5570 0.2811L0.6296 0.2899L0.8074 -0.1021Z" fill="url(#j3)"/>
<path transform="matrix(-136.38 74.47 -74.47 -136.38 933.18 768.17)" d="M-0.5529 0.0651L-0.9955 0.8310L-0.9192 0.7638L-0.8490 0.7079L-0.7927 0.6779L-0.7382 0.6525L-0.6736 0.6106L-0.5986 0.5518L-0.5255 0.4975L-0.4660 0.4697L-0.4104 0.4511L-0.3538 0.4328L-0.2984 0.4191L-0.2442 0.4104L-0.1902 0.4047L-0.1319 0.3940L-0.0694 0.3782L-0.0041 0.3601L0.0656 0.3366L0.1381 0.3111L0.2067 0.2969L0.2708 0.2964L0.3364 0.2976L0.4069 0.2936L0.4775 0.2947L0.5472 0.3040L0.6252 0.3014L0.8101 -0.1085Z" fill="url(#j1)"/>
<path transform="matrix(-136.11 76.65 -76.65 -136.11 934.77 769.29)" d="M-0.5505 0.0644L-0.9503 0.7351L-0.8746 0.6704L-0.8110 0.6270L-0.7565 0.6006L-0.6992 0.5707L-0.6394 0.5381L-0.5766 0.5017L-0.5079 0.4566L-0.4399 0.4143L-0.3792 0.3867L-0.3283 0.3788L-0.2783 0.3749L-0.2190 0.3567L-0.1495 0.3222L-0.0814 0.2927L-0.0260 0.2899L0.0258 0.2970L0.0911 0.2821L0.1648 0.2544L0.2279 0.2510L0.2831 0.2674L0.3461 0.2733L0.4189 0.2642L0.4922 0.2593L0.5648 0.2613L0.6420 0.2596L0.8069 -0.0928Z" fill="url(#j2)"/>
<path transform="matrix(-139.15 77.40 -77.40 -139.15 936.32 770.30)" d="M-0.5393 0.0720L-0.9063 0.6942L-0.8421 0.6467L-0.7931 0.6263L-0.7402 0.6005L-0.6763 0.5572L-0.6210 0.5304L-0.5799 0.5302L-0.5300 0.5164L-0.4607 0.4699L-0.3951 0.4317L-0.3454 0.4243L-0.2984 0.4241L-0.2367 0.3996L-0.1588 0.3473L-0.0880 0.3103L-0.0390 0.3174L0.0048 0.3379L0.0703 0.3202L0.1477 0.2826L0.2084 0.2813L0.2592 0.3044L0.3248 0.3024L0.4051 0.2750L0.4796 0.2642L0.5512 0.2650L0.6282 0.2603L0.7908 -0.0914Z" fill="url(#j3)"/>
<path transform="matrix(-137.97 75.73 -75.73 -137.97 936.97 769.72)" d="M-0.5448 0.0704L-0.9657 0.7923L-0.8887 0.7230L-0.8239 0.6757L-0.7627 0.6359L-0.7019 0.5983L-0.6470 0.5725L-0.6002 0.5628L-0.5483 0.5460L-0.4849 0.5104L-0.4218 0.4772L-0.3652 0.4577L-0.3089 0.4415L-0.2433 0.4100L-0.1709 0.3681L-0.1079 0.3465L-0.0569 0.3508L-0.0042 0.3554L0.0612 0.3388L0.1318 0.3155L0.1944 0.3116L0.2528 0.3209L0.3175 0.3221L0.3893 0.3136L0.4629 0.3064L0.5396 0.2980L0.6213 0.2850L0.7992 -0.1047Z" fill="url(#j3)"/>
<path transform="matrix(-138.41 77.50 -77.50 -138.41 938.55 770.77)" d="M-0.5407 0.0715L-0.9201 0.7091L-0.8536 0.6582L-0.7968 0.6249L-0.7417 0.5957L-0.6860 0.5670L-0.6309 0.5408L-0.5787 0.5213L-0.5257 0.5023L-0.4657 0.4729L-0.4013 0.4373L-0.3376 0.4048L-0.2779 0.3817L-0.2193 0.3628L-0.1591 0.3435L-0.1025 0.3337L-0.0452 0.3254L0.0193 0.3066L0.0862 0.2863L0.1529 0.2699L0.2197 0.2568L0.2859 0.2488L0.3460 0.2577L0.3999 0.2843L0.4627 0.2985L0.5385 0.2913L0.6178 0.2824L0.7935 -0.0932Z" fill="url(#j2)"/>
<path transform="matrix(-137.24 77.61 -77.61 -137.24 939.61 770.92)" d="M-0.5439 0.0694L-0.9271 0.7064L-0.8648 0.6635L-0.8142 0.6413L-0.7636 0.6207L-0.7076 0.5924L-0.6424 0.5499L-0.5721 0.4998L-0.5045 0.4559L-0.4468 0.4309L-0.3946 0.4176L-0.3382 0.3988L-0.2786 0.3767L-0.2219 0.3621L-0.1676 0.3544L-0.1096 0.3426L-0.0445 0.3208L0.0237 0.2958L0.0876 0.2822L0.1506 0.2737L0.2219 0.2529L0.2964 0.2296L0.3604 0.2311L0.4127 0.2612L0.4718 0.2834L0.5413 0.2902L0.6199 0.2841L0.7984 -0.0928Z" fill="url(#j2)"/>
<path transform="matrix(-136.13 78.23 -78.23 -136.13 940.73 771.15)" d="M-0.5462 0.0663L-0.9421 0.7134L-0.8694 0.6544L-0.8006 0.6030L-0.7402 0.5665L-0.6843 0.5389L-0.6228 0.5035L-0.5543 0.4575L-0.4851 0.4119L-0.4308 0.3932L-0.3891 0.3985L-0.3409 0.3949L-0.2792 0.3699L-0.2115 0.3364L-0.1510 0.3181L-0.0956 0.3115L-0.0353 0.2992L0.0315 0.2777L0.0972 0.2614L0.1561 0.2612L0.2208 0.2540L0.2957 0.2311L0.3700 0.2133L0.4322 0.2238L0.4852 0.2582L0.5417 0.2919L0.6219 0.2834L0.8022 -0.0896Z" fill="url(#j3)"/>
<path transform="matrix(-136.36 76.57 -76.57 -136.36 941.56 770.87)" d="M-0.5473 0.0686L-0.9896 0.8072L-0.9173 0.7479L-0.8457 0.6908L-0.7801 0.6450L-0.7217 0.6128L-0.6668 0.5880L-0.6109 0.5633L-0.5506 0.5324L-0.4908 0.5044L-0.4333 0.4824L-0.3758 0.4623L-0.3153 0.4392L-0.2499 0.4096L-0.1867 0.3862L-0.1296 0.3767L-0.0775 0.3797L-0.0221 0.3798L0.0444 0.3625L0.1160 0.3387L0.1872 0.3192L0.2565 0.3073L0.3284 0.2946L0.4041 0.2788L0.4788 0.2699L0.5492 0.2755L0.6265 0.2726L0.8041 -0.1036Z" fill="url(#j3)"/>
<path transform="matrix(-137.40 77.55 -77.55 -137.40 943.02 771.71)" d="M-0.5422 0.0716L-0.9503 0.7487L-0.8853 0.7011L-0.8258 0.6638L-0.7655 0.6265L-0.7044 0.5891L-0.6480 0.5612L-0.5982 0.5462L-0.5490 0.5342L-0.4949 0.5155L-0.4319 0.4833L-0.3628 0.4420L-0.2976 0.4096L-0.2384 0.3903L-0.1829 0.3801L-0.1252 0.3686L-0.0641 0.3538L-0.0052 0.3462L0.0562 0.3371L0.1234 0.3207L0.1925 0.3040L0.2596 0.2952L0.3253 0.2937L0.3953 0.2882L0.4706 0.2769L0.5453 0.2723L0.6217 0.2699L0.7969 -0.0985Z" fill="url(#j2)"/>
<path transform="matrix(-135.89 77.81 -77.81 -135.89 944.11 771.88)" d="M-0.5463 0.0687L-0.9520 0.7317L-0.9003 0.7070L-0.8506 0.6872L-0.7920 0.6540L-0.7215 0.6022L-0.6458 0.5429L-0.5775 0.4973L-0.5232 0.4770L-0.4787 0.4754L-0.4314 0.4712L-0.3730 0.4501L-0.3096 0.4222L-0.2448 0.3941L-0.1790 0.3665L-0.1145 0.3437L-0.0485 0.3208L0.0151 0.3052L0.0748 0.3000L0.1363 0.2951L0.2048 0.2808L0.2772 0.2627L0.3444 0.2589L0.4062 0.2705L0.4719 0.2797L0.5475 0.2748L0.6295 0.2623L0.8032 -0.0967Z" fill="url(#j2)"/>
<path transform="matrix(-134.66 78.96 -78.96 -134.66 945.36 772.32)" d="M-0.5483 0.0652L-0.9383 0.6874L-0.8906 0.6700L-0.8402 0.6497L-0.7749 0.6066L-0.7000 0.5491L-0.6209 0.4859L-0.5502 0.4375L-0.4960 0.4181L-0.4536 0.4201L-0.4107 0.4236L-0.3581 0.4131L-0.2980 0.3920L-0.2334 0.3652L-0.1631 0.3307L-0.0969 0.3058L-0.0331 0.2878L0.0320 0.2703L0.0910 0.2670L0.1501 0.2671L0.2175 0.2555L0.2905 0.2373L0.3590 0.2317L0.4191 0.2468L0.4829 0.2600L0.5597 0.2533L0.6436 0.2381L0.8064 -0.0890Z" fill="url(#j0)"/>
<path transform="matrix(-131.60 78.75 -78.75 -131.60 946.17 772.04)" d="M-0.5582 0.0578L-1.0007 0.7490L-0.9178 0.6783L-0.8395 0.6158L-0.7594 0.5511L-0.6846 0.4961L-0.6203 0.4590L-0.5626 0.4340L-0.5006 0.4037L-0.4392 0.3760L-0.3858 0.3634L-0.3334 0.3545L-0.2763 0.3400L-0.2167 0.3237L-0.1563 0.3085L-0.0952 0.2946L-0.0272 0.2715L0.0462 0.2417L0.1097 0.2323L0.1626 0.2453L0.2188 0.2565L0.2863 0.2513L0.3571 0.2442L0.4255 0.2463L0.4997 0.2422L0.5823 0.2272L0.6655 0.2165L0.8213 -0.0892Z" fill="url(#j2)"/>
<path transform="matrix(-134.76 78.87 -78.87 -134.76 947.58 772.74)" d="M-0.5472 0.0660L-0.9603 0.7245L-0.8861 0.6645L-0.8201 0.6188L-0.7568 0.5785L-0.6973 0.5456L-0.6456 0.5270L-0.5915 0.5062L-0.5239 0.4645L-0.4509 0.4154L-0.3872 0.3833L-0.3356 0.3739L-0.2887 0.3746L-0.2345 0.3654L-0.1692 0.3394L-0.1029 0.3141L-0.0455 0.3071L0.0089 0.3086L0.0717 0.2984L0.1394 0.2826L0.2063 0.2719L0.2731 0.2652L0.3387 0.2648L0.4047 0.2685L0.4746 0.2699L0.5518 0.2622L0.6304 0.2573L0.8055 -0.0939Z" fill="url(#j1)"/>
<path transform="matrix(-135.47 79.33 -79.33 -135.47 948.94 773.38)" d="M-0.5439 0.0689L-0.9604 0.7316L-0.8853 0.6700L-0.8173 0.6206L-0.7512 0.5755L-0.6890 0.5378L-0.6360 0.5166L-0.5860 0.5019L-0.5291 0.4777L-0.4659 0.4445L-0.4056 0.4180L-0.3538 0.4079L-0.3043 0.4040L-0.2467 0.3884L-0.1798 0.3593L-0.1129 0.3324L-0.0499 0.3152L0.0132 0.3004L0.0827 0.2772L0.1537 0.2546L0.2199 0.2439L0.2807 0.2474L0.3386 0.2606L0.4003 0.2717L0.4687 0.2750L0.5446 0.2690L0.6245 0.2607L0.8009 -0.0922Z" fill="url(#j3)"/>
<path transform="matrix(-136.23 78.16 -78.16 -136.23 949.89 773.29)" d="M-0.5426 0.0716L-0.9806 0.7814L-0.9015 0.7119L-0.8299 0.6554L-0.7688 0.6174L-0.7163 0.5948L-0.6662 0.5779L-0.6108 0.5538L-0.5461 0.5155L-0.4778 0.4728L-0.4196 0.4490L-0.3728 0.4470L-0.3229 0.4420L-0.2579 0.4128L-0.1874 0.3763L-0.1247 0.3561L-0.0680 0.3493L-0.0114 0.3459L0.0536 0.3302L0.1253 0.3056L0.1995 0.2796L0.2659 0.2722L0.3210 0.2907L0.3775 0.3119L0.4424 0.3219L0.5206 0.3111L0.6086 0.2859L0.7994 -0.1036Z" fill="url(#j0)"/>
<path transform="matrix(-134.77 80.43 -80.43 -134.77 951.36 774.10)" d="M-0.5437 0.0670L-0.9277 0.6654L-0.8597 0.6158L-0.8019 0.5833L-0.7522 0.5650L-0.6964 0.5384L-0.6306 0.4972L-0.5622 0.4531L-0.4997 0.4199L-0.4420 0.3962L-0.3884 0.3811L-0.3396 0.3760L-0.2838 0.3615L-0.2135 0.3246L-0.1418 0.2875L-0.0821 0.2733L-0.0305 0.2755L0.0193 0.2843L0.0768 0.2829L0.1456 0.2649L0.2209 0.2384L0.2882 0.2298L0.3418 0.2509L0.3994 0.2695L0.4689 0.2707L0.5480 0.2589L0.6313 0.2442L0.8013 -0.0877Z" fill="url(#j1)"/>
<path transform="matrix(-135.40 78.82 -78.82 -135.40 952.29 773.99)" d="M-0.5435 0.0709L-0.9710 0.7524L-0.9035 0.7025L-0.8498 0.6760L-0.8001 0.6572L-0.7409 0.6244L-0.6748 0.5818L-0.6089 0.5409L-0.5464 0.5070L-0.4846 0.4760L-0.4240 0.4487L-0.3687 0.4325L-0.3202 0.4300L-0.2682 0.4240L-0.2036 0.3986L-0.1333 0.3658L-0.0689 0.3458L-0.0150 0.3475L0.0408 0.3491L0.1088 0.3322L0.1820 0.3091L0.2502 0.2991L0.3159 0.2978L0.3890 0.2871L0.4681 0.2695L0.5424 0.2661L0.6138 0.2744L0.8014 -0.1011Z" fill="url(#j3)"/>
<path transform="matrix(-135.59 80.30 -80.30 -135.59 953.71 774.70)" d="M-0.5405 0.0703L-0.9295 0.6795L-0.8642 0.6334L-0.8148 0.6135L-0.7622 0.5900L-0.6999 0.5523L-0.6375 0.5158L-0.5792 0.4873L-0.5195 0.4581L-0.4590 0.4292L-0.4021 0.4080L-0.3477 0.3930L-0.2968 0.3860L-0.2428 0.3760L-0.1781 0.3505L-0.1077 0.3172L-0.0405 0.2919L0.0147 0.2904L0.0687 0.2945L0.1296 0.2897L0.1908 0.2880L0.2496 0.2947L0.3103 0.3023L0.3789 0.2997L0.4602 0.2780L0.5449 0.2543L0.6207 0.2531L0.7972 -0.0931Z" fill="url(#j3)"/>
<path transform="matrix(-136.42 79.18 -79.18 -136.42 954.81 774.88)" d="M-0.5389 0.0749L-0.9449 0.7224L-0.8916 0.6944L-0.8463 0.6806L-0.7958 0.6599L-0.7391 0.6304L-0.6848 0.6064L-0.6306 0.5842L-0.5648 0.5443L-0.4906 0.4919L-0.4215 0.4495L-0.3632 0.4272L-0.3147 0.4238L-0.2658 0.4222L-0.2069 0.4059L-0.1395 0.3771L-0.0707 0.3484L-0.0079 0.3331L0.0579 0.3154L0.1273 0.2944L0.1892 0.2905L0.2438 0.3045L0.3003 0.3194L0.3654 0.3231L0.4398 0.3137L0.5232 0.2917L0.6059 0.2762L0.7952 -0.1025Z" fill="url(#j1)"/>
<path transform="matrix(-136.20 80.88 -80.88 -136.20 956.28 775.66)" d="M-0.5369 0.0736L-0.9085 0.6526L-0.8602 0.6327L-0.8143 0.6180L-0.7663 0.6014L-0.7144 0.5799L-0.6564 0.5503L-0.5914 0.5108L-0.5219 0.4653L-0.4546 0.4250L-0.3941 0.3973L-0.3404 0.3828L-0.2918 0.3789L-0.2391 0.3705L-0.1786 0.3514L-0.1127 0.3254L-0.0457 0.2999L0.0204 0.2787L0.0906 0.2531L0.1588 0.2341L0.2185 0.2336L0.2658 0.2598L0.3044 0.3069L0.3580 0.3316L0.4360 0.3156L0.5288 0.2760L0.6211 0.2418L0.7925 -0.0921Z" fill="url(#j3)"/>
<path transform="matrix(-134.89 79.42 -79.42 -134.89 957.05 775.27)" d="M-0.5426 0.0723L-0.9760 0.7522L-0.9094 0.7043L-0.8512 0.6707L-0.7971 0.6449L-0.7437 0.6217L-0.6840 0.5897L-0.6201 0.5524L-0.5539 0.5130L-0.4913 0.4808L-0.4333 0.4579L-0.3708 0.4297L-0.3079 0.4027L-0.2491 0.3847L-0.1945 0.3762L-0.1334 0.3593L-0.0619 0.3268L0.0090 0.2980L0.0751 0.2806L0.1361 0.2754L0.1948 0.2783L0.2484 0.2945L0.3009 0.3175L0.3638 0.3260L0.4384 0.3176L0.5241 0.2927L0.6127 0.2671L0.8013 -0.1029Z" fill="url(#j2)"/>
<path transform="matrix(-133.05 78.61 -78.61 -133.05 957.82 774.87)" d="M-0.5493 0.0680L-1.0210 0.8046L-0.9508 0.7523L-0.8901 0.7158L-0.8204 0.6663L-0.7444 0.6078L-0.6772 0.5647L-0.6200 0.5391L-0.5592 0.5092L-0.4956 0.4763L-0.4393 0.4572L-0.3836 0.4413L-0.3221 0.4178L-0.2600 0.3954L-0.1977 0.3750L-0.1270 0.3426L-0.0485 0.2992L0.0203 0.2750L0.0709 0.2861L0.1153 0.3121L0.1688 0.3259L0.2357 0.3196L0.3056 0.3121L0.3743 0.3113L0.4492 0.3038L0.5253 0.2991L0.6020 0.2990L0.8115 -0.1098Z" fill="url(#j0)"/>
<path transform="matrix(-135.58 81.27 -81.27 -135.58 959.72 776.37)" d="M-0.5370 0.0727L-0.9095 0.6457L-0.8717 0.6422L-0.8243 0.6253L-0.7552 0.5757L-0.6829 0.5222L-0.6272 0.4961L-0.5823 0.4888L-0.5339 0.4775L-0.4764 0.4535L-0.4145 0.4240L-0.3523 0.3958L-0.2907 0.3704L-0.2317 0.3516L-0.1697 0.3300L-0.0985 0.2951L-0.0258 0.2599L0.0335 0.2502L0.0718 0.2802L0.1058 0.3219L0.1587 0.3344L0.2336 0.3117L0.3117 0.2866L0.3802 0.2833L0.4475 0.2870L0.5178 0.2901L0.5927 0.2903L0.7936 -0.0951Z" fill="url(#j0)"/>
<path transform="matrix(-134.79 83.39 -83.39 -134.79 961.13 777.02)" d="M-0.5360 0.0684L-0.8878 0.5925L-0.8363 0.5687L-0.7763 0.5331L-0.7058 0.4828L-0.6405 0.4414L-0.5878 0.4205L-0.5419 0.4116L-0.4966 0.4054L-0.4452 0.3915L-0.3870 0.3686L-0.3286 0.3473L-0.2694 0.3267L-0.2057 0.3007L-0.1379 0.2703L-0.0701 0.2420L-0.0066 0.2229L0.0480 0.2215L0.0799 0.2612L0.0980 0.3286L0.1424 0.3559L0.2289 0.3142L0.3262 0.2568L0.4008 0.2428L0.4654 0.2510L0.5385 0.2488L0.6201 0.2363L0.7925 -0.0827Z" fill="url(#j1)"/>
<path transform="matrix(-135.45 82.31 -82.31 -135.45 962.18 777.10)" d="M-0.5351 0.0719L-0.9128 0.6438L-0.8541 0.6083L-0.8030 0.5857L-0.7479 0.5582L-0.6838 0.5179L-0.6142 0.4704L-0.5509 0.4339L-0.4975 0.4143L-0.4506 0.4069L-0.4043 0.4023L-0.3541 0.3936L-0.2931 0.3695L-0.2224 0.3314L-0.1602 0.3095L-0.1115 0.3122L-0.0628 0.3178L-0.0054 0.3119L0.0431 0.3242L0.0722 0.3737L0.1165 0.4013L0.2081 0.3500L0.3146 0.2749L0.3905 0.2577L0.4544 0.2669L0.5262 0.2668L0.6034 0.2618L0.7915 -0.0922Z" fill="url(#j3)"/>
<path transform="matrix(-135.47 81.14 -81.14 -135.47 963.22 777.15)" d="M-0.5362 0.0746L-0.9266 0.6733L-0.8773 0.6518L-0.8418 0.6531L-0.8005 0.6468L-0.7385 0.6097L-0.6637 0.5537L-0.5930 0.5054L-0.5320 0.4738L-0.4771 0.4535L-0.4239 0.4379L-0.3694 0.4221L-0.3069 0.3952L-0.2369 0.3579L-0.1756 0.3371L-0.1293 0.3440L-0.0860 0.3589L-0.0299 0.3553L0.0296 0.3490L0.0686 0.3819L0.1131 0.4096L0.2014 0.3633L0.2993 0.3028L0.3746 0.2868L0.4427 0.2887L0.5180 0.2821L0.5998 0.2683L0.7934 -0.1011Z" fill="url(#j3)"/>
<path transform="matrix(-133.16 82.64 -82.64 -133.16 964.53 777.62)" d="M-0.5409 0.0688L-0.9393 0.6585L-0.8742 0.6151L-0.8163 0.5834L-0.7609 0.5567L-0.7052 0.5309L-0.6473 0.5031L-0.5861 0.4716L-0.5205 0.4348L-0.4535 0.3973L-0.3889 0.3650L-0.3276 0.3397L-0.2728 0.3266L-0.2242 0.3254L-0.1731 0.3227L-0.1170 0.3146L-0.0575 0.3036L0.0066 0.2876L0.0623 0.2886L0.0923 0.3363L0.1324 0.3713L0.2226 0.3247L0.3208 0.2672L0.3975 0.2506L0.4674 0.2503L0.5463 0.2388L0.6354 0.2135L0.8008 -0.0896Z" fill="url(#j1)"/>
<path transform="matrix(-133.37 83.52 -83.52 -133.37 965.85 778.11)" d="M-0.5386 0.0687L-0.9168 0.6230L-0.8547 0.5840L-0.7876 0.5387L-0.7269 0.5039L-0.6792 0.4899L-0.6355 0.4833L-0.5842 0.4668L-0.5190 0.4307L-0.4462 0.3844L-0.3787 0.3477L-0.3191 0.3248L-0.2686 0.3182L-0.2232 0.3219L-0.1753 0.3241L-0.1238 0.3231L-0.0675 0.3171L-0.0014 0.2980L0.0644 0.2820L0.1134 0.2972L0.1634 0.3143L0.2381 0.2936L0.3195 0.2651L0.3910 0.2572L0.4607 0.2569L0.5377 0.2485L0.6231 0.2301L0.7976 -0.0862Z" fill="url(#j3)"/>
<path transform="matrix(-133.06 82.50 -82.50 -133.06 967.00 778.36)" d="M-0.5406 0.0718L-0.9637 0.6971L-0.9059 0.6646L-0.8401 0.6212L-0.7731 0.5771L-0.7155 0.5483L-0.6669 0.5346L-0.6200 0.5249L-0.5614 0.4990L-0.4906 0.4559L-0.4230 0.4192L-0.3654 0.3998L-0.3101 0.3859L-0.2523 0.3704L-0.1957 0.3590L-0.1427 0.3559L-0.0887 0.3540L-0.0233 0.3361L0.0510 0.3063L0.1190 0.2899L0.1799 0.2887L0.2472 0.2804L0.3223 0.2623L0.3980 0.2472L0.4698 0.2431L0.5382 0.2503L0.6083 0.2598L0.8009 -0.0923Z" fill="url(#j2)"/>
<path transform="matrix(-133.46 84.99 -84.99 -133.46 968.71 779.44)" d="M-0.5353 0.0714L-0.8958 0.5900L-0.8461 0.5693L-0.7939 0.5461L-0.7399 0.5216L-0.6890 0.5029L-0.6374 0.4845L-0.5798 0.4586L-0.5169 0.4264L-0.4510 0.3911L-0.3887 0.3627L-0.3383 0.3541L-0.2959 0.3599L-0.2502 0.3630L-0.1900 0.3458L-0.1186 0.3134L-0.0489 0.2857L0.0139 0.2714L0.0742 0.2640L0.1359 0.2575L0.2003 0.2498L0.2713 0.2343L0.3451 0.2179L0.4157 0.2108L0.4834 0.2128L0.5495 0.2226L0.6155 0.2379L0.7933 -0.0775Z" fill="url(#j2)"/>
<path transform="matrix(-132.96 82.86 -82.86 -132.96 969.43 779.00)" d="M-0.5395 0.0726L-0.9293 0.6444L-0.8894 0.6380L-0.8521 0.6368L-0.8073 0.6261L-0.7534 0.6031L-0.6868 0.5623L-0.6113 0.5093L-0.5393 0.4628L-0.4758 0.4308L-0.4190 0.4106L-0.3692 0.4032L-0.3226 0.4030L-0.2674 0.3916L-0.1973 0.3587L-0.1262 0.3262L-0.0676 0.3162L-0.0190 0.3255L0.0318 0.3343L0.0967 0.3232L0.1716 0.2985L0.2452 0.2793L0.3130 0.2738L0.3800 0.2737L0.4551 0.2640L0.5344 0.2515L0.6119 0.2472L0.8000 -0.0934Z" fill="url(#j0)"/>
<path transform="matrix(-132.00 84.37 -84.37 -132.00 970.79 779.52)" d="M-0.5398 0.0690L-0.8966 0.5791L-0.8525 0.5668L-0.8150 0.5653L-0.7687 0.5526L-0.7128 0.5271L-0.6501 0.4932L-0.5855 0.4575L-0.5194 0.4211L-0.4501 0.3812L-0.3852 0.3495L-0.3301 0.3341L-0.2812 0.3303L-0.2289 0.3235L-0.1646 0.3003L-0.0932 0.2681L-0.0277 0.2475L0.0269 0.2469L0.0751 0.2593L0.1295 0.2653L0.1920 0.2615L0.2563 0.2584L0.3213 0.2579L0.3889 0.2572L0.4631 0.2497L0.5389 0.2439L0.6161 0.2408L0.8008 -0.0843Z" fill="url(#j2)"/>
<path transform="matrix(-133.43 85.76 -85.76 -133.43 972.32 780.33)" d="M-0.5329 0.0715L-0.8773 0.5606L-0.8181 0.5262L-0.7679 0.5056L-0.7218 0.4921L-0.6767 0.4816L-0.6292 0.4689L-0.5774 0.4515L-0.5203 0.4277L-0.4537 0.3914L-0.3872 0.3567L-0.3295 0.3368L-0.2758 0.3248L-0.2218 0.3145L-0.1645 0.3012L-0.1024 0.2827L-0.0393 0.2651L0.0218 0.2532L0.0804 0.2479L0.1439 0.2378L0.2106 0.2259L0.2708 0.2278L0.3243 0.2448L0.3782 0.2655L0.4454 0.2685L0.5241 0.2565L0.6057 0.2443L0.7908 -0.0791Z" fill="url(#j3)"/>
<path transform="matrix(-132.29 84.23 -84.23 -132.29 973.21 780.14)" d="M-0.5383 0.0717L-0.9469 0.6566L-0.8832 0.6161L-0.8241 0.5833L-0.7634 0.5492L-0.6971 0.5082L-0.6333 0.4719L-0.5828 0.4565L-0.5338 0.4452L-0.4760 0.4221L-0.4211 0.4053L-0.3763 0.4056L-0.3269 0.4010L-0.2603 0.3721L-0.1886 0.3374L-0.1201 0.3096L-0.0565 0.2918L-0.0009 0.2892L0.0547 0.2897L0.1200 0.2778L0.1894 0.2623L0.2515 0.2622L0.3076 0.2761L0.3653 0.2918L0.4390 0.2849L0.5291 0.2543L0.6222 0.2227L0.7991 -0.0889Z" fill="url(#j3)"/>
<path transform="matrix(-133.78 82.81 -82.81 -133.78 974.26 780.21)" d="M-0.5352 0.0774L-0.9836 0.7361L-0.9219 0.6971L-0.8547 0.6510L-0.7850 0.6021L-0.7195 0.5606L-0.6611 0.5310L-0.6116 0.5163L-0.5647 0.5071L-0.5186 0.5012L-0.4794 0.5076L-0.4365 0.5106L-0.3743 0.4855L-0.2946 0.4348L-0.2177 0.3902L-0.1524 0.3662L-0.0956 0.3583L-0.0403 0.3558L0.0202 0.3476L0.0878 0.3307L0.1561 0.3161L0.2198 0.3125L0.2847 0.3110L0.3502 0.3125L0.4193 0.3124L0.4984 0.2994L0.5900 0.2688L0.7949 -0.1022Z" fill="url(#j1)"/>
<path transform="matrix(-132.00 85.53 -85.53 -132.00 975.82 781.02)" d="M-0.5363 0.0711L-0.9325 0.6274L-0.8607 0.5759L-0.7924 0.5303L-0.7302 0.4943L-0.6728 0.4665L-0.6187 0.4445L-0.5724 0.4354L-0.5281 0.4308L-0.4758 0.4161L-0.4160 0.3921L-0.3596 0.3749L-0.3087 0.3678L-0.2525 0.3549L-0.1862 0.3287L-0.1173 0.3006L-0.0564 0.2872L-0.0012 0.2851L0.0596 0.2773L0.1287 0.2592L0.1949 0.2487L0.2546 0.2522L0.3176 0.2543L0.3863 0.2509L0.4546 0.2526L0.5236 0.2579L0.6036 0.2494L0.7969 -0.0836Z" fill="url(#j1)"/>
<path transform="matrix(-128.96 84.01 -84.01 -128.96 976.57 780.59)" d="M-0.5478 0.0665L-1.0030 0.7015L-0.9211 0.6378L-0.8457 0.5838L-0.7827 0.5483L-0.7206 0.5154L-0.6571 0.4815L-0.6011 0.4598L-0.5509 0.4481L-0.4895 0.4217L-0.4114 0.3723L-0.3412 0.3361L-0.2940 0.3358L-0.2537 0.3480L-0.1974 0.3387L-0.1228 0.3038L-0.0487 0.2719L0.0071 0.2705L0.0530 0.2879L0.1121 0.2878L0.1886 0.2633L0.2686 0.2364L0.3373 0.2311L0.3964 0.2458L0.4609 0.2562L0.5369 0.2524L0.6181 0.2446L0.8143 -0.0909Z" fill="url(#j3)"/>
<path transform="matrix(-129.32 83.05 -83.05 -129.32 977.51 780.49)" d="M-0.5477 0.0679L-1.0254 0.7427L-0.9478 0.6841L-0.8698 0.6257L-0.8009 0.5812L-0.7370 0.5450L-0.6733 0.5104L-0.6086 0.4755L-0.5442 0.4425L-0.4862 0.4203L-0.4266 0.3976L-0.3714 0.3831L-0.3273 0.3874L-0.2814 0.3913L-0.2186 0.3719L-0.1359 0.3239L-0.0544 0.2799L0.0060 0.2711L0.0460 0.2975L0.0856 0.3282L0.1482 0.3259L0.2339 0.2896L0.3155 0.2631L0.3770 0.2740L0.4378 0.2906L0.5153 0.2841L0.6030 0.2651L0.8145 -0.1013Z" fill="url(#j2)"/>
<path transform="matrix(-130.67 85.12 -85.12 -130.67 979.27 781.61)" d="M-0.5398 0.0706L-0.9396 0.6270L-0.8843 0.5992L-0.8318 0.5764L-0.7734 0.5466L-0.7137 0.5161L-0.6545 0.4876L-0.5947 0.4595L-0.5271 0.4214L-0.4555 0.3791L-0.3970 0.3572L-0.3565 0.3635L-0.3189 0.3764L-0.2648 0.3670L-0.1917 0.3312L-0.1145 0.2911L-0.0463 0.2668L0.0094 0.2642L0.0553 0.2798L0.1008 0.2995L0.1590 0.3026L0.2325 0.2850L0.3045 0.2733L0.3671 0.2808L0.4373 0.2803L0.5241 0.2566L0.6131 0.2334L0.8030 -0.0901Z" fill="url(#j2)"/>
<path transform="matrix(-132.22 84.05 -84.05 -132.22 980.57 782.05)" d="M-0.5361 0.0781L-0.9596 0.6808L-0.9176 0.6708L-0.8749 0.6613L-0.8250 0.6426L-0.7723 0.6213L-0.7154 0.5950L-0.6505 0.5586L-0.5821 0.5183L-0.5194 0.4877L-0.4657 0.4722L-0.4135 0.4609L-0.3548 0.4417L-0.2908 0.4164L-0.2242 0.3890L-0.1574 0.3636L-0.0897 0.3390L-0.0234 0.3190L0.0367 0.3116L0.0916 0.3156L0.1475 0.3215L0.2108 0.3191L0.2797 0.3111L0.3508 0.3036L0.4293 0.2877L0.5134 0.2667L0.5946 0.2552L0.7978 -0.0993Z" fill="url(#j1)"/>
<path transform="matrix(-131.14 84.47 -84.47 -131.14 981.76 782.30)" d="M-0.5384 0.0757L-0.9694 0.6806L-0.9361 0.6833L-0.8797 0.6549L-0.8141 0.6144L-0.7594 0.5906L-0.7038 0.5669L-0.6337 0.5236L-0.5598 0.4759L-0.5031 0.4547L-0.4569 0.4507L-0.3992 0.4317L-0.3380 0.4091L-0.2883 0.4060L-0.2403 0.4076L-0.1784 0.3907L-0.0991 0.3492L-0.0218 0.3130L0.0401 0.3033L0.0890 0.3172L0.1367 0.3368L0.2020 0.3320L0.2858 0.3006L0.3738 0.2657L0.4559 0.2442L0.5246 0.2497L0.5902 0.2658L0.8016 -0.0972Z" fill="url(#j2)"/>
<path transform="matrix(-130.66 85.01 -85.01 -130.66 983.00 782.61)" d="M-0.5387 0.0742L-0.9678 0.6700L-0.9222 0.6556L-0.8645 0.6254L-0.7997 0.5866L-0.7432 0.5603L-0.6875 0.5366L-0.6194 0.4966L-0.5466 0.4510L-0.4863 0.4248L-0.4370 0.4162L-0.3826 0.4021L-0.3252 0.3854L-0.2750 0.3814L-0.2276 0.3840L-0.1741 0.3798L-0.1076 0.3585L-0.0349 0.3299L0.0295 0.3168L0.0823 0.3248L0.1380 0.3316L0.2094 0.3171L0.2958 0.2820L0.3842 0.2467L0.4605 0.2351L0.5209 0.2546L0.5816 0.2791L0.8023 -0.0953Z" fill="url(#j1)"/>
<path transform="matrix(-127.58 86.65 -86.65 -127.58 984.39 783.13)" d="M-0.5453 0.0669L-0.9583 0.6164L-0.9060 0.5945L-0.8437 0.5603L-0.7743 0.5175L-0.7026 0.4727L-0.6327 0.4314L-0.5737 0.4061L-0.5272 0.3996L-0.4872 0.4037L-0.4365 0.3948L-0.3683 0.3631L-0.2936 0.3238L-0.2231 0.2921L-0.1695 0.2866L-0.1255 0.2972L-0.0649 0.2864L0.0150 0.2496L0.0871 0.2267L0.1379 0.2383L0.1890 0.2530L0.2537 0.2505L0.3262 0.2398L0.4018 0.2277L0.4824 0.2119L0.5622 0.2015L0.6353 0.2065L0.8125 -0.0803Z" fill="url(#j2)"/>
<path transform="matrix(-128.28 86.90 -86.90 -128.28 985.79 783.68)" d="M-0.5422 0.0701L-0.9672 0.6361L-0.9107 0.6083L-0.8468 0.5716L-0.7755 0.5259L-0.7035 0.4802L-0.6382 0.4447L-0.5869 0.4297L-0.5475 0.4326L-0.5070 0.4357L-0.4532 0.4221L-0.3906 0.3980L-0.3186 0.3621L-0.2380 0.3157L-0.1732 0.2935L-0.1332 0.3095L-0.0901 0.3238L-0.0205 0.3018L0.0597 0.2667L0.1307 0.2477L0.2006 0.2333L0.2734 0.2176L0.3368 0.2197L0.3985 0.2286L0.4711 0.2245L0.5519 0.2118L0.6289 0.2098L0.8083 -0.0808Z" fill="url(#j3)"/>
<path transform="matrix(-129.21 87.20 -87.20 -129.21 987.19 784.25)" d="M-0.5384 0.0734L-0.9669 0.6455L-0.9004 0.6038L-0.8315 0.5598L-0.7727 0.5304L-0.7273 0.5203L-0.6773 0.5053L-0.6175 0.4784L-0.5529 0.4460L-0.4907 0.4184L-0.4330 0.3986L-0.3847 0.3938L-0.3374 0.3923L-0.2722 0.3675L-0.2024 0.3377L-0.1440 0.3267L-0.0929 0.3286L-0.0313 0.3177L0.0430 0.2906L0.1174 0.2658L0.1914 0.2446L0.2646 0.2275L0.3304 0.2252L0.3927 0.2321L0.4617 0.2329L0.5422 0.2198L0.6280 0.2026L0.8030 -0.0816Z" fill="url(#j3)"/>
<path transform="matrix(-128.84 85.86 -85.86 -128.84 988.09 784.07)" d="M-0.5413 0.0742L-1.0107 0.7079L-0.9356 0.6544L-0.8646 0.6071L-0.8015 0.5716L-0.7543 0.5592L-0.7076 0.5488L-0.6517 0.5272L-0.5848 0.4915L-0.5154 0.4539L-0.4519 0.4258L-0.3988 0.4143L-0.3550 0.4180L-0.3005 0.4084L-0.2299 0.3776L-0.1583 0.3473L-0.0936 0.3293L-0.0289 0.3137L0.0392 0.2958L0.1029 0.2871L0.1624 0.2882L0.2294 0.2811L0.3068 0.2612L0.3842 0.2451L0.4569 0.2402L0.5259 0.2459L0.6001 0.2482L0.8076 -0.0925Z" fill="url(#j3)"/>
<path transform="matrix(-130.73 87.70 -87.70 -130.73 989.78 785.04)" d="M-0.5321 0.0773L-0.9204 0.5974L-0.8730 0.5802L-0.8207 0.5574L-0.7685 0.5360L-0.7254 0.5282L-0.6759 0.5131L-0.6161 0.4851L-0.5560 0.4580L-0.5002 0.4383L-0.4453 0.4216L-0.3843 0.3979L-0.3241 0.3770L-0.2632 0.3569L-0.2010 0.3369L-0.1431 0.3254L-0.0905 0.3239L-0.0388 0.3263L0.0211 0.3194L0.0881 0.3047L0.1560 0.2916L0.2294 0.2731L0.3071 0.2514L0.3819 0.2375L0.4506 0.2371L0.5112 0.2542L0.5795 0.2642L0.7942 -0.0853Z" fill="url(#j3)"/>
<path transform="matrix(-128.97 85.94 -85.94 -128.97 990.58 784.70)" d="M-0.5398 0.0761L-0.9889 0.6809L-0.9350 0.6556L-0.8809 0.6311L-0.8264 0.6073L-0.7692 0.5810L-0.7053 0.5468L-0.6438 0.5170L-0.5874 0.4957L-0.5282 0.4721L-0.4640 0.4429L-0.3987 0.4137L-0.3378 0.3925L-0.2781 0.3749L-0.2188 0.3599L-0.1604 0.3485L-0.0990 0.3349L-0.0327 0.3168L0.0374 0.2954L0.1062 0.2787L0.1728 0.2682L0.2420 0.2570L0.3097 0.2518L0.3711 0.2603L0.4315 0.2748L0.4978 0.2847L0.5758 0.2807L0.8061 -0.0960Z" fill="url(#j2)"/>
<path transform="matrix(-127.80 84.17 -84.17 -127.80 991.17 784.02)" d="M-0.5459 0.0732L-1.0740 0.7915L-1.0006 0.7402L-0.9225 0.6832L-0.8430 0.6251L-0.7691 0.5758L-0.7048 0.5409L-0.6520 0.5233L-0.5996 0.5079L-0.5424 0.4872L-0.4775 0.4572L-0.4144 0.4314L-0.3655 0.4280L-0.3187 0.4297L-0.2607 0.4174L-0.1947 0.3956L-0.1258 0.3717L-0.0528 0.3440L0.0256 0.3107L0.0963 0.2917L0.1569 0.2913L0.2193 0.2916L0.2841 0.2920L0.3462 0.3007L0.4072 0.3160L0.4769 0.3218L0.5592 0.3123L0.8155 -0.1113Z" fill="url(#j1)"/>
<path transform="matrix(-129.51 87.87 -87.87 -129.51 993.36 785.72)" d="M-0.5342 0.0758L-0.9550 0.6313L-0.8856 0.5854L-0.8158 0.5398L-0.7570 0.5098L-0.7106 0.4976L-0.6677 0.4915L-0.6174 0.4768L-0.5578 0.4509L-0.4962 0.4236L-0.4320 0.3943L-0.3727 0.3732L-0.3256 0.3710L-0.2821 0.3760L-0.2319 0.3737L-0.1712 0.3586L-0.1050 0.3380L-0.0389 0.3198L0.0273 0.3039L0.0879 0.2990L0.1456 0.3016L0.2126 0.2936L0.2890 0.2747L0.3669 0.2569L0.4382 0.2530L0.5021 0.2654L0.5705 0.2755L0.7984 -0.0890Z" fill="url(#j0)"/>
<path transform="matrix(-126.84 86.69 -86.69 -126.84 994.27 785.53)" d="M-0.5440 0.0724L-1.0323 0.7118L-0.9517 0.6527L-0.8747 0.5991L-0.8022 0.5524L-0.7390 0.5189L-0.6841 0.4978L-0.6354 0.4864L-0.5849 0.4741L-0.5295 0.4567L-0.4663 0.4302L-0.3971 0.3970L-0.3374 0.3786L-0.2852 0.3726L-0.2265 0.3596L-0.1571 0.3336L-0.0849 0.3056L-0.0251 0.2978L0.0272 0.3037L0.0768 0.3167L0.1276 0.3312L0.2019 0.3144L0.2945 0.2730L0.3865 0.2358L0.4707 0.2139L0.5340 0.2287L0.5857 0.2670L0.8133 -0.0937Z" fill="url(#j3)"/>
<path transform="matrix(-129.26 86.99 -86.99 -129.26 995.72 786.15)" d="M-0.5355 0.0785L-0.9823 0.6717L-0.9340 0.6535L-0.8796 0.6284L-0.8123 0.5871L-0.7426 0.5435L-0.6832 0.5149L-0.6339 0.5014L-0.5843 0.4890L-0.5298 0.4714L-0.4743 0.4541L-0.4130 0.4303L-0.3495 0.4050L-0.2865 0.3824L-0.2265 0.3659L-0.1710 0.3580L-0.1139 0.3502L-0.0606 0.3505L-0.0031 0.3475L0.0530 0.3496L0.0987 0.3704L0.1731 0.3516L0.2737 0.2958L0.3648 0.2575L0.4417 0.2448L0.5029 0.2613L0.5604 0.2888L0.8010 -0.0977Z" fill="url(#j0)"/>
<path transform="matrix(-129.46 86.68 -86.68 -129.46 996.99 786.50)" d="M-0.5348 0.0810L-0.9986 0.6988L-0.9358 0.6611L-0.8799 0.6337L-0.8284 0.6134L-0.7780 0.5957L-0.7283 0.5803L-0.6742 0.5604L-0.6109 0.5290L-0.5456 0.4964L-0.4865 0.4737L-0.4252 0.4496L-0.3551 0.4148L-0.2891 0.3877L-0.2367 0.3817L-0.1829 0.3762L-0.1104 0.3456L-0.0350 0.3131L0.0188 0.3149L0.0517 0.3511L0.0873 0.3870L0.1592 0.3717L0.2584 0.3177L0.3515 0.2760L0.4333 0.2554L0.4986 0.2652L0.5567 0.2917L0.8004 -0.1012Z" fill="url(#j2)"/>
<path transform="matrix(-128.95 89.61 -89.61 -128.95 998.74 787.48)" d="M-0.5314 0.0774L-0.9273 0.5855L-0.8567 0.5388L-0.8017 0.5132L-0.7611 0.5073L-0.7245 0.5081L-0.6822 0.5027L-0.6262 0.4807L-0.5614 0.4482L-0.4996 0.4211L-0.4391 0.3972L-0.3752 0.3702L-0.3066 0.3384L-0.2451 0.3179L-0.1975 0.3186L-0.1483 0.3192L-0.0855 0.3033L-0.0141 0.2775L0.0434 0.2738L0.0702 0.3170L0.0935 0.3692L0.1651 0.3549L0.2652 0.3017L0.3617 0.2565L0.4514 0.2246L0.5273 0.2173L0.5918 0.2323L0.7955 -0.0833Z" fill="url(#j1)"/>
<path transform="matrix(-126.90 87.10 -87.10 -126.90 999.36 786.88)" d="M-0.5413 0.0757L-1.0228 0.7005L-0.9561 0.6594L-0.8872 0.6164L-0.8260 0.5845L-0.7709 0.5616L-0.7120 0.5351L-0.6443 0.4979L-0.5795 0.4660L-0.5265 0.4513L-0.4780 0.4444L-0.4278 0.4369L-0.3665 0.4160L-0.2926 0.3795L-0.2145 0.3389L-0.1416 0.3073L-0.0838 0.2991L-0.0305 0.2999L0.0212 0.3058L0.0610 0.3321L0.1019 0.3605L0.1630 0.3627L0.2472 0.3341L0.3475 0.2846L0.4382 0.2527L0.5155 0.2452L0.5923 0.2432L0.8107 -0.0989Z" fill="url(#j3)"/>
<path transform="matrix(-123.79 87.33 -87.33 -123.79 1000.48 786.97)" d="M-0.5504 0.0691L-1.0312 0.6760L-0.9770 0.6527L-0.9069 0.6105L-0.8355 0.5674L-0.7659 0.5277L-0.6930 0.4846L-0.6209 0.4438L-0.5607 0.4196L-0.5142 0.4149L-0.4659 0.4095L-0.4044 0.3884L-0.3308 0.3528L-0.2565 0.3177L-0.1854 0.2888L-0.1126 0.2595L-0.0511 0.2478L-0.0067 0.2622L0.0316 0.2882L0.0707 0.3164L0.1207 0.3326L0.1898 0.3252L0.2799 0.2906L0.3823 0.2410L0.4696 0.2169L0.5392 0.2233L0.6110 0.2311L0.8247 -0.0936Z" fill="url(#j1)"/>
<path transform="matrix(-124.27 87.41 -87.41 -124.27 1001.69 787.22)" d="M-0.5482 0.0702L-1.0384 0.6897L-0.9601 0.6357L-0.8828 0.5838L-0.8151 0.5449L-0.7535 0.5148L-0.6953 0.4904L-0.6411 0.4725L-0.5828 0.4507L-0.5123 0.4141L-0.4445 0.3824L-0.3908 0.3712L-0.3348 0.3586L-0.2679 0.3332L-0.1973 0.3046L-0.1356 0.2900L-0.0902 0.3003L-0.0444 0.3128L0.0106 0.3151L0.0686 0.3164L0.1296 0.3166L0.1968 0.3110L0.2773 0.2898L0.3663 0.2592L0.4456 0.2466L0.5156 0.2521L0.5893 0.2567L0.8218 -0.0970Z" fill="url(#j2)"/>
<path transform="matrix(-125.04 86.87 -86.87 -125.04 1002.92 787.48)" d="M-0.5462 0.0738L-1.0823 0.7587L-0.9921 0.6886L-0.9081 0.6272L-0.8388 0.5856L-0.7805 0.5593L-0.7267 0.5401L-0.6707 0.5193L-0.5994 0.4798L-0.5215 0.4327L-0.4612 0.4103L-0.4233 0.4198L-0.3922 0.4405L-0.3480 0.4458L-0.2823 0.4237L-0.2053 0.3882L-0.1363 0.3657L-0.0771 0.3592L-0.0151 0.3515L0.0554 0.3346L0.1313 0.3125L0.2092 0.2906L0.2854 0.2745L0.3523 0.2755L0.4164 0.2850L0.4929 0.2802L0.5794 0.2648L0.8191 -0.1039Z" fill="url(#j3)"/>
<path transform="matrix(-124.94 89.78 -89.78 -124.94 1004.80 788.64)" d="M-0.5411 0.0721L-0.9887 0.6249L-0.9058 0.5657L-0.8309 0.5171L-0.7704 0.4874L-0.7118 0.4610L-0.6557 0.4391L-0.6057 0.4261L-0.5497 0.4070L-0.4828 0.3751L-0.4236 0.3545L-0.3785 0.3539L-0.3437 0.3687L-0.2997 0.3735L-0.2397 0.3592L-0.1773 0.3439L-0.1110 0.3254L-0.0422 0.3057L0.0269 0.2880L0.0961 0.2727L0.1631 0.2632L0.2354 0.2493L0.3075 0.2389L0.3680 0.2484L0.4302 0.2598L0.5076 0.2534L0.5941 0.2377L0.8119 -0.0852Z" fill="url(#j0)"/>
<path transform="matrix(-123.00 89.38 -89.38 -123.00 1005.81 788.57)" d="M-0.5474 0.0680L-0.9913 0.6097L-0.9214 0.5675L-0.8491 0.5234L-0.7803 0.4843L-0.7062 0.4398L-0.6388 0.4044L-0.5903 0.3940L-0.5441 0.3879L-0.4838 0.3654L-0.4173 0.3364L-0.3621 0.3235L-0.3183 0.3271L-0.2620 0.3163L-0.1911 0.2885L-0.1246 0.2683L-0.0669 0.2618L-0.0096 0.2583L0.0562 0.2459L0.1208 0.2377L0.1753 0.2463L0.2284 0.2603L0.2837 0.2748L0.3474 0.2815L0.4288 0.2669L0.5199 0.2421L0.6030 0.2331L0.8217 -0.0869Z" fill="url(#j3)"/>
<path transform="matrix(-125.33 88.52 -88.52 -125.33 1007.08 788.91)" d="M-0.5411 0.0757L-1.0108 0.6642L-0.9372 0.6154L-0.8686 0.5739L-0.8024 0.5362L-0.7385 0.5026L-0.6892 0.4887L-0.6543 0.4948L-0.6116 0.4925L-0.5488 0.4655L-0.4716 0.4210L-0.3989 0.3838L-0.3365 0.3616L-0.2729 0.3398L-0.2087 0.3189L-0.1501 0.3075L-0.0987 0.3083L-0.0453 0.3088L0.0174 0.2991L0.0765 0.2972L0.1282 0.3089L0.1853 0.3162L0.2528 0.3123L0.3277 0.3012L0.4035 0.2926L0.4804 0.2865L0.5591 0.2822L0.8126 -0.0989Z" fill="url(#j2)"/>
<path transform="matrix(-125.68 90.24 -90.24 -125.68 1008.79 789.83)" d="M-0.5367 0.0767L-0.9512 0.5871L-0.8946 0.5598L-0.8386 0.5341L-0.7794 0.5056L-0.7269 0.4864L-0.6874 0.4848L-0.6483 0.4852L-0.5967 0.4712L-0.5284 0.4372L-0.4527 0.3950L-0.3831 0.3621L-0.3216 0.3411L-0.2668 0.3307L-0.2145 0.3255L-0.1599 0.3193L-0.1038 0.3135L-0.0458 0.3075L0.0158 0.2991L0.0774 0.2934L0.1387 0.2909L0.2046 0.2853L0.2751 0.2763L0.3477 0.2679L0.4158 0.2696L0.4843 0.2751L0.5617 0.2719L0.8063 -0.0891Z" fill="url(#j3)"/>
<path transform="matrix(-122.96 88.45 -88.45 -122.96 1009.65 789.55)" d="M-0.5478 0.0740L-1.0347 0.6718L-0.9846 0.6537L-0.9245 0.6242L-0.8566 0.5861L-0.7900 0.5506L-0.7297 0.5241L-0.6743 0.5050L-0.6155 0.4830L-0.5525 0.4570L-0.4879 0.4304L-0.4175 0.3978L-0.3435 0.3620L-0.2784 0.3393L-0.2244 0.3332L-0.1717 0.3310L-0.1136 0.3239L-0.0519 0.3143L0.0140 0.3017L0.0839 0.2861L0.1505 0.2780L0.2132 0.2783L0.2820 0.2735L0.3586 0.2613L0.4332 0.2556L0.5032 0.2608L0.5778 0.2638L0.8234 -0.0971Z" fill="url(#j2)"/>
<path transform="matrix(-124.22 89.79 -89.79 -124.22 1011.28 790.34)" d="M-0.5411 0.0768L-0.9875 0.6217L-0.9390 0.6049L-0.8868 0.5846L-0.8308 0.5606L-0.7731 0.5356L-0.7154 0.5119L-0.6595 0.4916L-0.6009 0.4692L-0.5387 0.4436L-0.4743 0.4166L-0.4069 0.3872L-0.3383 0.3578L-0.2770 0.3395L-0.2241 0.3339L-0.1721 0.3319L-0.1186 0.3301L-0.0633 0.3282L-0.0042 0.3240L0.0577 0.3186L0.1185 0.3177L0.1841 0.3132L0.2635 0.2929L0.3511 0.2641L0.4337 0.2459L0.5094 0.2415L0.5822 0.2455L0.8136 -0.0923Z" fill="url(#j3)"/>
<path transform="matrix(-122.92 89.07 -89.07 -122.92 1012.39 790.43)" d="M-0.5460 0.0760L-1.0585 0.6993L-0.9762 0.6419L-0.8985 0.5908L-0.8342 0.5572L-0.7800 0.5369L-0.7306 0.5239L-0.6883 0.5212L-0.6457 0.5196L-0.5922 0.5057L-0.5235 0.4742L-0.4419 0.4274L-0.3542 0.3742L-0.2756 0.3341L-0.2135 0.3170L-0.1632 0.3176L-0.1128 0.3203L-0.0554 0.3163L0.0069 0.3081L0.0676 0.3049L0.1265 0.3073L0.1963 0.2977L0.2778 0.2749L0.3593 0.2555L0.4327 0.2513L0.5048 0.2529L0.5772 0.2586L0.8213 -0.0962Z" fill="url(#j2)"/>
<path transform="matrix(-119.86 88.75 -88.75 -119.86 1013.52 790.52)" d="M-0.5559 0.0708L-1.1026 0.7210L-1.0184 0.6636L-0.9308 0.6030L-0.8606 0.5640L-0.8017 0.5397L-0.7448 0.5189L-0.6908 0.5030L-0.6393 0.4915L-0.5826 0.4751L-0.5201 0.4530L-0.4488 0.4214L-0.3630 0.3731L-0.2732 0.3210L-0.1947 0.2849L-0.1376 0.2779L-0.0836 0.2773L-0.0234 0.2709L0.0357 0.2685L0.0950 0.2687L0.1598 0.2645L0.2334 0.2515L0.3050 0.2446L0.3719 0.2474L0.4449 0.2459L0.5295 0.2321L0.6162 0.2197L0.8366 -0.0933Z" fill="url(#j1)"/>
<path transform="matrix(-119.74 87.95 -87.95 -119.74 1014.49 790.41)" d="M-0.5574 0.0706L-1.1447 0.7739L-1.0658 0.7226L-0.9618 0.6418L-0.8759 0.5837L-0.8203 0.5631L-0.7738 0.5550L-0.7109 0.5280L-0.6364 0.4880L-0.5688 0.4578L-0.5183 0.4503L-0.4731 0.4513L-0.4090 0.4302L-0.3261 0.3869L-0.2426 0.3444L-0.1769 0.3265L-0.1144 0.3150L-0.0450 0.2967L0.0136 0.2952L0.0607 0.3116L0.1140 0.3231L0.1854 0.3136L0.2642 0.2972L0.3422 0.2852L0.4310 0.2619L0.5293 0.2289L0.6207 0.2094L0.8392 -0.1026Z" fill="url(#j2)"/>
<path transform="matrix(-119.28 87.77 -87.77 -119.28 1015.57 790.45)" d="M-0.5587 0.0690L-1.1443 0.7681L-1.0704 0.7231L-0.9831 0.6626L-0.8912 0.5974L-0.8075 0.5428L-0.7371 0.5055L-0.6678 0.4706L-0.5945 0.4319L-0.5357 0.4124L-0.4997 0.4229L-0.4708 0.4442L-0.4226 0.4433L-0.3489 0.4121L-0.2704 0.3763L-0.2095 0.3650L-0.1491 0.3566L-0.0664 0.3214L0.0205 0.2828L0.0853 0.2758L0.1292 0.2997L0.1788 0.3195L0.2429 0.3234L0.3209 0.3119L0.4151 0.2816L0.5161 0.2453L0.6054 0.2294L0.8416 -0.1068Z" fill="url(#j1)"/>
<path transform="matrix(-123.40 88.86 -88.86 -123.40 1017.42 791.52)" d="M-0.5429 0.0800L-1.0526 0.7005L-1.0090 0.6896L-0.9613 0.6748L-0.8900 0.6320L-0.8041 0.5720L-0.7382 0.5379L-0.6863 0.5222L-0.6185 0.4880L-0.5466 0.4499L-0.4915 0.4344L-0.4551 0.4443L-0.4152 0.4520L-0.3579 0.4390L-0.2981 0.4248L-0.2451 0.4215L-0.1869 0.4136L-0.1018 0.3723L-0.0019 0.3130L0.0726 0.2901L0.1169 0.3110L0.1614 0.3352L0.2283 0.3321L0.3094 0.3128L0.3852 0.3044L0.4586 0.3034L0.5422 0.2923L0.8182 -0.1083Z" fill="url(#j3)"/>
<path transform="matrix(-120.26 87.94 -87.94 -120.26 1018.27 791.23)" d="M-0.5542 0.0735L-1.1273 0.7602L-1.0592 0.7212L-0.9975 0.6908L-0.9249 0.6483L-0.8357 0.5864L-0.7534 0.5338L-0.6893 0.5045L-0.6210 0.4713L-0.5514 0.4378L-0.4938 0.4205L-0.4486 0.4205L-0.4024 0.4212L-0.3460 0.4108L-0.2862 0.3981L-0.2280 0.3894L-0.1703 0.3837L-0.1040 0.3692L-0.0292 0.3458L0.0408 0.3313L0.1081 0.3232L0.1883 0.3008L0.2817 0.2632L0.3608 0.2483L0.4133 0.2742L0.4615 0.3110L0.5355 0.3164L0.8355 -0.1118Z" fill="url(#j2)"/>
<path transform="matrix(-122.89 89.94 -89.94 -122.89 1020.20 792.42)" d="M-0.5417 0.0798L-1.0510 0.6887L-0.9854 0.6514L-0.9228 0.6188L-0.8609 0.5877L-0.7877 0.5441L-0.7134 0.5000L-0.6521 0.4729L-0.6028 0.4619L-0.5574 0.4572L-0.5097 0.4511L-0.4574 0.4410L-0.3995 0.4256L-0.3406 0.4106L-0.2838 0.4001L-0.2261 0.3906L-0.1622 0.3753L-0.0970 0.3604L-0.0387 0.3570L0.0121 0.3662L0.0723 0.3660L0.1556 0.3377L0.2486 0.2990L0.3294 0.2799L0.3977 0.2818L0.4614 0.2942L0.5356 0.2965L0.8171 -0.1041Z" fill="url(#j2)"/>
<path transform="matrix(-122.42 90.79 -90.79 -122.42 1021.67 792.95)" d="M-0.5413 0.0791L-1.0295 0.6547L-0.9500 0.6014L-0.8821 0.5626L-0.8337 0.5481L-0.7838 0.5329L-0.7217 0.5042L-0.6611 0.4784L-0.6122 0.4681L-0.5646 0.4608L-0.5054 0.4407L-0.4286 0.4005L-0.3468 0.3552L-0.2806 0.3310L-0.2296 0.3276L-0.1824 0.3312L-0.1281 0.3279L-0.0651 0.3159L-0.0162 0.3244L0.0073 0.3691L0.0555 0.3849L0.1388 0.3573L0.2255 0.3279L0.3116 0.3023L0.3984 0.2792L0.4804 0.2661L0.5594 0.2615L0.8168 -0.0992Z" fill="url(#j0)"/>
<path transform="matrix(-121.02 90.22 -90.22 -121.02 1022.78 793.01)" d="M-0.5462 0.0774L-1.0755 0.6973L-1.0045 0.6550L-0.9268 0.6055L-0.8611 0.5711L-0.8022 0.5456L-0.7404 0.5179L-0.6764 0.4887L-0.6147 0.4634L-0.5547 0.4415L-0.4861 0.4105L-0.4048 0.3651L-0.3285 0.3273L-0.2824 0.3285L-0.2490 0.3478L-0.2055 0.3567L-0.1521 0.3554L-0.0935 0.3498L-0.0495 0.3655L-0.0269 0.4121L0.0250 0.4240L0.1238 0.3771L0.2278 0.3259L0.3296 0.2802L0.4251 0.2458L0.5068 0.2339L0.5718 0.2493L0.8246 -0.1024Z" fill="url(#j3)"/>
<path transform="matrix(-117.99 89.82 -89.82 -117.99 1023.73 792.86)" d="M-0.5562 0.0702L-1.1320 0.7304L-1.0384 0.6639L-0.9360 0.5879L-0.8486 0.5299L-0.7761 0.4900L-0.7049 0.4526L-0.6387 0.4221L-0.5771 0.3984L-0.5147 0.3749L-0.4495 0.3494L-0.3938 0.3368L-0.3509 0.3414L-0.3083 0.3483L-0.2539 0.3429L-0.1903 0.3281L-0.1281 0.3172L-0.0774 0.3229L-0.0489 0.3593L-0.0341 0.4165L0.0185 0.4290L0.1370 0.3596L0.2697 0.2738L0.3745 0.2266L0.4505 0.2207L0.5106 0.2400L0.5729 0.2612L0.8401 -0.1021Z" fill="url(#j1)"/>
<path transform="matrix(-122.90 91.33 -91.33 -122.90 1025.73 794.11)" d="M-0.5374 0.0828L-1.0150 0.6427L-0.9519 0.6084L-0.8870 0.5728L-0.8314 0.5492L-0.7850 0.5377L-0.7359 0.5241L-0.6818 0.5058L-0.6242 0.4845L-0.5589 0.4551L-0.4867 0.4186L-0.4210 0.3913L-0.3706 0.3845L-0.3232 0.3833L-0.2671 0.3730L-0.2039 0.3559L-0.1449 0.3461L-0.0943 0.3492L-0.0532 0.3672L-0.0182 0.3961L0.0382 0.4003L0.1306 0.3601L0.2311 0.3115L0.3119 0.2921L0.3796 0.2939L0.4433 0.3054L0.5095 0.3179L0.8121 -0.1028Z" fill="url(#j3)"/>
<path transform="matrix(-119.50 91.98 -91.98 -119.50 1027.02 794.37)" d="M-0.5464 0.0755L-0.9738 0.5590L-0.9401 0.5601L-0.8980 0.5527L-0.8442 0.5330L-0.7840 0.5070L-0.7232 0.4815L-0.6647 0.4597L-0.6015 0.4336L-0.5311 0.4002L-0.4541 0.3604L-0.3809 0.3262L-0.3203 0.3085L-0.2624 0.2957L-0.2024 0.2821L-0.1488 0.2782L-0.1077 0.2918L-0.0618 0.3020L-0.0125 0.3105L0.0272 0.3339L0.0827 0.3405L0.1686 0.3115L0.2677 0.2681L0.3496 0.2498L0.4168 0.2540L0.4797 0.2681L0.5372 0.2938L0.8260 -0.0931Z" fill="url(#j1)"/>
<path transform="matrix(-116.87 90.22 -90.22 -116.87 1027.97 794.21)" d="M-0.5577 0.0733L-1.0928 0.6761L-1.0354 0.6516L-0.9724 0.6215L-0.9116 0.5951L-0.8492 0.5677L-0.7832 0.5374L-0.7166 0.5074L-0.6472 0.4753L-0.5667 0.4316L-0.4859 0.3885L-0.4257 0.3710L-0.3779 0.3699L-0.3148 0.3524L-0.2333 0.3144L-0.1639 0.2928L-0.1136 0.2964L-0.0635 0.3027L-0.0078 0.3047L0.0476 0.3097L0.1014 0.3198L0.1675 0.3174L0.2536 0.2926L0.3423 0.2676L0.4251 0.2535L0.5066 0.2447L0.5901 0.2376L0.8435 -0.1003Z" fill="url(#j3)"/>
<path transform="matrix(-117.98 90.61 -90.61 -117.98 1029.34 794.62)" d="M-0.5529 0.0758L-1.1060 0.7014L-1.0267 0.6515L-0.9405 0.5944L-0.8710 0.5571L-0.8042 0.5239L-0.7373 0.4915L-0.6815 0.4731L-0.6294 0.4604L-0.5656 0.4353L-0.5012 0.4108L-0.4586 0.4135L-0.4207 0.4238L-0.3496 0.3962L-0.2650 0.3539L-0.1980 0.3346L-0.1326 0.3192L-0.0588 0.2956L0.0119 0.2780L0.0640 0.2861L0.1069 0.3088L0.1676 0.3122L0.2446 0.2980L0.3182 0.2915L0.3862 0.2958L0.4648 0.2902L0.5559 0.2721L0.8366 -0.1032Z" fill="url(#j0)"/>
<path transform="matrix(-113.58 91.35 -91.35 -113.58 1030.59 794.83)" d="M-0.5653 0.0649L-1.1186 0.6623L-1.0097 0.5839L-0.8916 0.4959L-0.8018 0.4392L-0.7332 0.4066L-0.6790 0.3908L-0.6313 0.3835L-0.5698 0.3621L-0.5030 0.3361L-0.4516 0.3287L-0.4184 0.3435L-0.3659 0.3382L-0.2760 0.2918L-0.1940 0.2560L-0.1454 0.2605L-0.1012 0.2723L-0.0423 0.2693L0.0206 0.2640L0.0808 0.2645L0.1462 0.2614L0.2299 0.2392L0.3208 0.2108L0.3927 0.2088L0.4467 0.2327L0.5027 0.2585L0.5820 0.2594L0.8557 -0.0894Z" fill="url(#j2)"/>
<path transform="matrix(-116.43 93.06 -93.06 -116.43 1032.59 796.01)" d="M-0.5522 0.0736L-1.0419 0.6049L-0.9719 0.5672L-0.8929 0.5202L-0.8214 0.4824L-0.7573 0.4536L-0.7017 0.4351L-0.6491 0.4212L-0.5835 0.3940L-0.5101 0.3592L-0.4579 0.3496L-0.4310 0.3702L-0.3795 0.3646L-0.2877 0.3144L-0.2026 0.2733L-0.1531 0.2751L-0.1228 0.3017L-0.0834 0.3202L-0.0246 0.3181L0.0592 0.2887L0.1563 0.2455L0.2445 0.2152L0.3222 0.2006L0.3894 0.2019L0.4426 0.2244L0.4892 0.2596L0.5573 0.2720L0.8363 -0.0850Z" fill="url(#j1)"/>
<path transform="matrix(-117.66 93.24 -93.24 -117.66 1034.11 796.60)" d="M-0.5475 0.0786L-1.0124 0.5867L-0.9765 0.5854L-0.9263 0.5694L-0.8593 0.5359L-0.7796 0.4891L-0.7085 0.4528L-0.6590 0.4417L-0.6149 0.4379L-0.5551 0.4177L-0.4911 0.3941L-0.4423 0.3894L-0.3925 0.3851L-0.3210 0.3575L-0.2488 0.3305L-0.1990 0.3316L-0.1555 0.3422L-0.0879 0.3266L0.0018 0.2866L0.0873 0.2538L0.1557 0.2438L0.2112 0.2526L0.2746 0.2547L0.3583 0.2349L0.4354 0.2266L0.4853 0.2565L0.5381 0.2876L0.8295 -0.0880Z" fill="url(#j3)"/>
<path transform="matrix(-115.93 92.62 -92.62 -115.93 1035.16 796.57)" d="M-0.5537 0.0753L-1.0601 0.6237L-0.9994 0.5960L-0.9219 0.5508L-0.8486 0.5111L-0.7912 0.4897L-0.7365 0.4723L-0.6810 0.4553L-0.6287 0.4429L-0.5737 0.4290L-0.5054 0.4015L-0.4279 0.3648L-0.3598 0.3402L-0.3074 0.3350L-0.2582 0.3355L-0.2000 0.3275L-0.1315 0.3095L-0.0605 0.2905L0.0057 0.2794L0.0636 0.2807L0.1194 0.2872L0.1778 0.2936L0.2475 0.2894L0.3375 0.2633L0.4286 0.2390L0.5056 0.2357L0.5795 0.2404L0.8394 -0.0911Z" fill="url(#j3)"/>
<path transform="matrix(-116.74 94.63 -94.63 -116.74 1037.14 797.68)" d="M-0.5468 0.0784L-1.0053 0.5673L-0.9408 0.5354L-0.8829 0.5114L-0.8344 0.4985L-0.7823 0.4828L-0.7151 0.4516L-0.6468 0.4203L-0.5955 0.4087L-0.5622 0.4183L-0.5208 0.4206L-0.4569 0.3993L-0.3787 0.3634L-0.3115 0.3413L-0.2535 0.3312L-0.1888 0.3152L-0.1296 0.3076L-0.0802 0.3134L-0.0226 0.3120L0.0632 0.2799L0.1581 0.2391L0.2321 0.2257L0.2897 0.2347L0.3529 0.2403L0.4269 0.2363L0.5077 0.2275L0.5981 0.2104L0.8291 -0.0796Z" fill="url(#j1)"/>
<path transform="matrix(-114.49 93.29 -93.29 -114.49 1038.00 797.42)" d="M-0.5560 0.0744L-1.0705 0.6195L-0.9921 0.5738L-0.9260 0.5419L-0.8631 0.5144L-0.7831 0.4694L-0.6983 0.4200L-0.6379 0.3980L-0.6014 0.4034L-0.5741 0.4202L-0.5248 0.4145L-0.4552 0.3878L-0.3817 0.3582L-0.3123 0.3345L-0.2431 0.3127L-0.1737 0.2925L-0.1254 0.2981L-0.0865 0.3169L-0.0245 0.3116L0.0729 0.2673L0.1746 0.2200L0.2484 0.2079L0.2969 0.2289L0.3453 0.2538L0.4117 0.2606L0.4975 0.2474L0.5988 0.2187L0.8436 -0.0863Z" fill="url(#j2)"/>
<path transform="matrix(-112.23 90.36 -90.36 -112.23 1038.48 796.71)" d="M-0.5691 0.0713L-1.1950 0.7415L-1.1025 0.6812L-1.0416 0.6556L-0.9821 0.6325L-0.8943 0.5797L-0.7971 0.5174L-0.7165 0.4741L-0.6529 0.4506L-0.5943 0.4339L-0.5265 0.4083L-0.4617 0.3875L-0.4075 0.3802L-0.3577 0.3795L-0.2942 0.3652L-0.2165 0.3365L-0.1501 0.3226L-0.0973 0.3267L-0.0343 0.3214L0.0540 0.2887L0.1431 0.2572L0.2062 0.2595L0.2462 0.2930L0.2981 0.3159L0.3892 0.2946L0.5047 0.2463L0.6148 0.2081L0.8638 -0.1053Z" fill="url(#j1)"/>
<path transform="matrix(-113.37 91.65 -91.65 -113.37 1040.24 797.55)" d="M-0.5621 0.0751L-1.1513 0.7026L-1.0824 0.6673L-1.0124 0.6315L-0.9327 0.5861L-0.8435 0.5312L-0.7624 0.4859L-0.6941 0.4556L-0.6370 0.4387L-0.5919 0.4362L-0.5459 0.4344L-0.4944 0.4280L-0.4340 0.4132L-0.3667 0.3923L-0.2918 0.3645L-0.2104 0.3308L-0.1357 0.3066L-0.0728 0.2980L-0.0136 0.2961L0.0497 0.2919L0.1098 0.2940L0.1624 0.3081L0.2137 0.3271L0.2888 0.3209L0.3982 0.2762L0.5163 0.2235L0.6184 0.1941L0.8536 -0.1002Z" fill="url(#j0)"/>
<path transform="matrix(-111.03 92.17 -92.17 -111.03 1041.58 797.87)" d="M-0.5683 0.0695L-1.1393 0.6614L-1.0624 0.6192L-0.9785 0.5704L-0.8874 0.5148L-0.7959 0.4595L-0.7249 0.4266L-0.6760 0.4183L-0.6314 0.4158L-0.5704 0.3971L-0.4985 0.3680L-0.4338 0.3481L-0.3746 0.3355L-0.3135 0.3225L-0.2514 0.3102L-0.1908 0.3014L-0.1221 0.2855L-0.0488 0.2665L0.0112 0.2646L0.0582 0.2800L0.1074 0.2959L0.1698 0.2997L0.2411 0.2960L0.3297 0.2752L0.4398 0.2320L0.5430 0.2000L0.6246 0.1977L0.8634 -0.0926Z" fill="url(#j2)"/>
<path transform="matrix(-110.59 91.73 -91.73 -110.59 1042.75 798.00)" d="M-0.5703 0.0694L-1.1669 0.6875L-1.0669 0.6213L-0.9757 0.5650L-0.8867 0.5115L-0.8047 0.4663L-0.7398 0.4399L-0.6926 0.4335L-0.6505 0.4337L-0.5956 0.4218L-0.5243 0.3935L-0.4371 0.3493L-0.3534 0.3101L-0.2835 0.2873L-0.2219 0.2754L-0.1680 0.2738L-0.1183 0.2790L-0.0783 0.2975L-0.0383 0.3186L0.0260 0.3147L0.1153 0.2848L0.2073 0.2542L0.2787 0.2502L0.3362 0.2659L0.4086 0.2677L0.4990 0.2516L0.5958 0.2315L0.8668 -0.0977Z" fill="url(#j2)"/>
<path transform="matrix(-111.10 93.63 -93.63 -111.10 1044.63 798.96)" d="M-0.5639 0.0710L-1.0761 0.5927L-0.9993 0.5508L-0.9210 0.5081L-0.8436 0.4670L-0.7743 0.4351L-0.7177 0.4175L-0.6697 0.4099L-0.6150 0.3965L-0.5515 0.3751L-0.4815 0.3481L-0.4090 0.3197L-0.3424 0.2990L-0.2800 0.2842L-0.2120 0.2652L-0.1419 0.2455L-0.0855 0.2426L-0.0445 0.2589L0.0007 0.2731L0.0685 0.2645L0.1537 0.2388L0.2370 0.2178L0.3023 0.2200L0.3554 0.2395L0.4156 0.2546L0.4893 0.2577L0.5777 0.2473L0.8576 -0.0867Z" fill="url(#j2)"/>
<path transform="matrix(-109.84 91.49 -91.49 -109.84 1045.59 798.84)" d="M-0.5723 0.0725L-1.2013 0.7198L-1.1304 0.6843L-1.0483 0.6379L-0.9658 0.5919L-0.8867 0.5503L-0.8090 0.5110L-0.7376 0.4793L-0.6703 0.4530L-0.6033 0.4283L-0.5388 0.4075L-0.4833 0.3977L-0.4271 0.3888L-0.3624 0.3724L-0.2915 0.3507L-0.2237 0.3343L-0.1668 0.3320L-0.1104 0.3323L-0.0387 0.3178L0.0550 0.2808L0.1530 0.2409L0.2346 0.2222L0.2932 0.2328L0.3465 0.2532L0.4206 0.2530L0.5043 0.2450L0.5855 0.2439L0.8708 -0.0998Z" fill="url(#j1)"/>
<path transform="matrix(-108.63 91.14 -91.14 -108.63 1046.67 798.84)" d="M-0.5768 0.0692L-1.2259 0.7317L-1.1287 0.6698L-1.0284 0.6054L-0.9459 0.5599L-0.8697 0.5217L-0.7885 0.4794L-0.7082 0.4388L-0.6371 0.4089L-0.5688 0.3832L-0.5083 0.3670L-0.4569 0.3619L-0.4059 0.3588L-0.3511 0.3535L-0.2949 0.3484L-0.2389 0.3455L-0.1678 0.3280L-0.0817 0.2959L-0.0032 0.2743L0.0635 0.2681L0.1368 0.2571L0.2209 0.2364L0.2953 0.2297L0.3473 0.2521L0.3995 0.2780L0.4751 0.2808L0.5761 0.2573L0.8779 -0.1031Z" fill="url(#j2)"/>
<path transform="matrix(-109.49 93.65 -93.65 -109.49 1048.84 800.13)" d="M-0.5678 0.0726L-1.1214 0.6263L-1.0153 0.5560L-0.9457 0.5230L-0.9021 0.5170L-0.8476 0.5012L-0.7724 0.4653L-0.6852 0.4179L-0.5946 0.3680L-0.5101 0.3253L-0.4531 0.3124L-0.4182 0.3238L-0.3754 0.3287L-0.3176 0.3196L-0.2665 0.3193L-0.2172 0.3228L-0.1326 0.2903L-0.0219 0.2314L0.0652 0.1996L0.1142 0.2117L0.1669 0.2226L0.2462 0.2066L0.3316 0.1865L0.3917 0.1979L0.4260 0.2425L0.4741 0.2756L0.5648 0.2635L0.8647 -0.0871Z" fill="url(#j1)"/>
<path transform="matrix(-110.63 93.64 -93.64 -110.63 1050.30 800.59)" d="M-0.5636 0.0774L-1.1161 0.6349L-1.0276 0.5813L-0.9689 0.5585L-0.9316 0.5586L-0.8847 0.5499L-0.8135 0.5173L-0.7281 0.4711L-0.6337 0.4164L-0.5500 0.3737L-0.4933 0.3605L-0.4677 0.3814L-0.4392 0.4011L-0.3692 0.3786L-0.2847 0.3420L-0.2173 0.3252L-0.1574 0.3186L-0.0772 0.2918L0.0121 0.2569L0.0800 0.2476L0.1376 0.2524L0.2054 0.2485L0.2878 0.2309L0.3637 0.2236L0.4173 0.2455L0.4732 0.2686L0.5527 0.2684L0.8587 -0.0924Z" fill="url(#j3)"/>
<path transform="matrix(-108.61 93.36 -93.36 -108.61 1051.38 800.59)" d="M-0.5704 0.0721L-1.0990 0.5968L-1.0539 0.5876L-0.9853 0.5560L-0.9135 0.5220L-0.8496 0.4967L-0.7867 0.4736L-0.7122 0.4397L-0.6232 0.3919L-0.5445 0.3557L-0.4767 0.3318L-0.4197 0.3204L-0.3685 0.3165L-0.3160 0.3130L-0.2607 0.3083L-0.1961 0.2955L-0.1345 0.2879L-0.0780 0.2877L-0.0219 0.2903L0.0376 0.2917L0.1064 0.2855L0.1861 0.2698L0.2773 0.2440L0.3642 0.2259L0.4335 0.2308L0.4973 0.2457L0.5694 0.2552L0.8695 -0.0924Z" fill="url(#j1)"/>
<path transform="matrix(-106.15 91.65 -91.65 -106.15 1052.26 800.37)" d="M-0.5822 0.0683L-1.2098 0.6878L-1.1463 0.6615L-1.0285 0.5820L-0.9262 0.5186L-0.8715 0.5035L-0.8199 0.4926L-0.7330 0.4472L-0.6290 0.3853L-0.5533 0.3531L-0.4950 0.3401L-0.4304 0.3218L-0.3694 0.3088L-0.3277 0.3176L-0.2708 0.3122L-0.1831 0.2762L-0.1035 0.2506L-0.0501 0.2547L0.0027 0.2619L0.0780 0.2472L0.1526 0.2356L0.2079 0.2481L0.2685 0.2578L0.3481 0.2496L0.4295 0.2427L0.4989 0.2531L0.5546 0.2834L0.8879 -0.1003Z" fill="url(#j2)"/>
<path transform="matrix(-105.87 91.82 -91.82 -105.87 1053.73 800.82)" d="M-0.5823 0.0695L-1.2305 0.7057L-1.1425 0.6554L-1.0379 0.5895L-0.9454 0.5360L-0.8742 0.5046L-0.8085 0.4796L-0.7417 0.4545L-0.6731 0.4288L-0.6014 0.4010L-0.5295 0.3743L-0.4563 0.3475L-0.3834 0.3223L-0.3139 0.3022L-0.2391 0.2781L-0.1664 0.2579L-0.1099 0.2565L-0.0632 0.2678L-0.0006 0.2644L0.0826 0.2413L0.1571 0.2299L0.2012 0.2544L0.2398 0.2883L0.3078 0.2933L0.4034 0.2709L0.5109 0.2382L0.6049 0.2244L0.8884 -0.1001Z" fill="url(#j3)"/>
<path transform="matrix(-108.10 93.48 -93.48 -108.10 1055.61 801.75)" d="M-0.5704 0.0756L-1.1306 0.6263L-1.0705 0.6023L-1.0187 0.5874L-0.9518 0.5584L-0.8760 0.5214L-0.8098 0.4950L-0.7536 0.4796L-0.6897 0.4576L-0.6043 0.4149L-0.5228 0.3773L-0.4534 0.3531L-0.3768 0.3230L-0.2904 0.2840L-0.2174 0.2603L-0.1770 0.2725L-0.1591 0.3107L-0.1361 0.3460L-0.0747 0.3429L0.0244 0.3016L0.1199 0.2661L0.1740 0.2783L0.2088 0.3147L0.2868 0.3070L0.4024 0.2602L0.5152 0.2193L0.6056 0.2073L0.8707 -0.0964Z" fill="url(#j3)"/>
<path transform="matrix(-110.92 95.13 -95.13 -110.92 1057.41 802.59)" d="M-0.5571 0.0819L-1.1085 0.6277L-1.0386 0.5927L-0.9657 0.5556L-0.8887 0.5150L-0.8229 0.4865L-0.7677 0.4696L-0.7186 0.4600L-0.6624 0.4444L-0.5878 0.4110L-0.5101 0.3757L-0.4420 0.3514L-0.3761 0.3307L-0.3027 0.3035L-0.2377 0.2867L-0.2078 0.3085L-0.2115 0.3685L-0.2142 0.4302L-0.1526 0.4257L-0.0208 0.3472L0.0894 0.2938L0.1229 0.3269L0.1412 0.3802L0.2253 0.3638L0.3696 0.2825L0.5017 0.2171L0.5974 0.1962L0.8508 -0.0959Z" fill="url(#j3)"/>
<path transform="matrix(-113.76 95.92 -95.92 -113.76 1059.25 803.52)" d="M-0.5461 0.0913L-1.1192 0.6676L-1.0381 0.6198L-0.9663 0.5821L-0.9038 0.5547L-0.8400 0.5267L-0.7711 0.4945L-0.7126 0.4739L-0.6680 0.4688L-0.6180 0.4594L-0.5535 0.4361L-0.4857 0.4106L-0.4220 0.3908L-0.3631 0.3774L-0.3124 0.3745L-0.2744 0.3869L-0.2653 0.4328L-0.2707 0.4971L-0.2153 0.4979L-0.0812 0.4143L0.0588 0.3255L0.1121 0.3351L0.1180 0.4013L0.2027 0.3819L0.3541 0.2890L0.4783 0.2295L0.5594 0.2230L0.8343 -0.0987Z" fill="url(#j2)"/>
<path transform="matrix(-110.37 93.95 -93.95 -110.37 1059.87 802.94)" d="M-0.5605 0.0841L-1.2035 0.7238L-1.1068 0.6620L-1.0280 0.6188L-0.9574 0.5846L-0.8750 0.5393L-0.7889 0.4910L-0.7192 0.4603L-0.6631 0.4444L-0.6227 0.4460L-0.5811 0.4478L-0.5206 0.4314L-0.4331 0.3883L-0.3404 0.3409L-0.2774 0.3261L-0.2422 0.3427L-0.2483 0.4054L-0.2723 0.4904L-0.2187 0.4948L-0.0928 0.4228L0.0395 0.3453L0.1113 0.3364L0.1355 0.3833L0.2247 0.3611L0.3810 0.2656L0.4925 0.2235L0.5473 0.2499L0.8567 -0.1081Z" fill="url(#j2)"/>
<path transform="matrix(-108.87 95.09 -95.09 -108.87 1061.62 803.68)" d="M-0.5624 0.0822L-1.1496 0.6508L-1.0788 0.6161L-1.0042 0.5784L-0.9226 0.5345L-0.8392 0.4896L-0.7709 0.4605L-0.7149 0.4445L-0.6538 0.4245L-0.6065 0.4195L-0.5675 0.4242L-0.5146 0.4164L-0.4344 0.3822L-0.3375 0.3324L-0.2612 0.3048L-0.2149 0.3098L-0.2060 0.3558L-0.2094 0.4172L-0.1531 0.4188L-0.0371 0.3594L0.0648 0.3167L0.1131 0.3339L0.1548 0.3613L0.2460 0.3380L0.3886 0.2609L0.5169 0.2020L0.5998 0.1967L0.8602 -0.0963Z" fill="url(#j1)"/>
<path transform="matrix(-105.15 94.83 -94.83 -105.15 1062.84 803.81)" d="M-0.5748 0.0741L-1.1456 0.6089L-1.0492 0.5521L-0.9605 0.5033L-0.8966 0.4785L-0.8494 0.4705L-0.7963 0.4580L-0.7273 0.4313L-0.6536 0.4012L-0.5855 0.3775L-0.5172 0.3547L-0.4408 0.3252L-0.3674 0.3000L-0.3018 0.2838L-0.2389 0.2718L-0.1849 0.2705L-0.1487 0.2889L-0.1201 0.3175L-0.0597 0.3160L0.0381 0.2785L0.1294 0.2497L0.1767 0.2690L0.2089 0.3073L0.2829 0.3048L0.4030 0.2565L0.5279 0.2057L0.6300 0.1824L0.8795 -0.0889Z" fill="url(#j2)"/>
<path transform="matrix(-103.51 94.40 -94.40 -103.51 1064.22 804.13)" d="M-0.5809 0.0728L-1.1824 0.6293L-1.0702 0.5591L-0.9736 0.5039L-0.9127 0.4827L-0.8698 0.4794L-0.8085 0.4598L-0.7214 0.4167L-0.6467 0.3864L-0.5915 0.3758L-0.5355 0.3657L-0.4609 0.3390L-0.3828 0.3101L-0.3265 0.3038L-0.2741 0.3031L-0.2107 0.2933L-0.1364 0.2745L-0.0704 0.2658L-0.0078 0.2626L0.0746 0.2416L0.1719 0.2076L0.2435 0.2021L0.2876 0.2279L0.3482 0.2399L0.4285 0.2345L0.5045 0.2371L0.5830 0.2409L0.8892 -0.0878Z" fill="url(#j2)"/>
<path transform="matrix(-102.12 91.39 -91.39 -102.12 1064.62 803.39)" d="M-0.5927 0.0706L-1.3434 0.7775L-1.2504 0.7250L-1.1426 0.6590L-1.0376 0.5962L-0.9538 0.5545L-0.8894 0.5321L-0.8071 0.4936L-0.7140 0.4455L-0.6393 0.4163L-0.5892 0.4124L-0.5474 0.4180L-0.4894 0.4093L-0.4245 0.3953L-0.3597 0.3831L-0.2911 0.3689L-0.2131 0.3470L-0.1340 0.3258L-0.0602 0.3120L0.0087 0.3056L0.0749 0.3044L0.1394 0.3077L0.2080 0.3096L0.2981 0.2920L0.4071 0.2571L0.5093 0.2327L0.5891 0.2360L0.9077 -0.1118Z" fill="url(#j3)"/>
<path transform="matrix(-99.85 93.64 -93.64 -99.85 1066.94 804.73)" d="M-0.5944 0.0681L-1.2418 0.6492L-1.1579 0.6076L-1.0507 0.5456L-0.9366 0.4780L-0.8477 0.4338L-0.7964 0.4249L-0.7462 0.4181L-0.6756 0.3936L-0.5917 0.3580L-0.5198 0.3345L-0.4722 0.3351L-0.4152 0.3283L-0.3215 0.2883L-0.2187 0.2410L-0.1396 0.2176L-0.0802 0.2148L-0.0150 0.2085L0.0525 0.2020L0.0925 0.2246L0.1131 0.2693L0.1558 0.2952L0.2404 0.2823L0.3584 0.2384L0.4890 0.1841L0.6073 0.1451L0.6936 0.1422L0.9108 -0.0836Z" fill="url(#j2)"/>
<path transform="matrix(-104.17 94.35 -94.35 -104.17 1068.58 805.38)" d="M-0.5774 0.0804L-1.2328 0.6888L-1.1531 0.6481L-1.0742 0.6089L-0.9790 0.5550L-0.8955 0.5129L-0.8441 0.5021L-0.8038 0.5028L-0.7386 0.4810L-0.6395 0.4277L-0.5504 0.3851L-0.4990 0.3800L-0.4557 0.3842L-0.3800 0.3585L-0.2874 0.3175L-0.2136 0.2965L-0.1502 0.2875L-0.0652 0.2588L0.0073 0.2445L0.0240 0.2889L0.0211 0.3565L0.0545 0.3903L0.1460 0.3672L0.2879 0.2940L0.4288 0.2239L0.5466 0.1808L0.6336 0.1735L0.8851 -0.0968Z" fill="url(#j3)"/>
<path transform="matrix(-106.68 95.64 -95.64 -106.68 1070.09 805.86)" d="M-0.5656 0.0843L-1.1145 0.5983L-1.0605 0.5801L-1.0275 0.5827L-0.9766 0.5692L-0.8964 0.5289L-0.8036 0.4773L-0.7154 0.4309L-0.6464 0.4038L-0.5842 0.3843L-0.5278 0.3716L-0.4742 0.3630L-0.4181 0.3533L-0.3580 0.3412L-0.2904 0.3231L-0.2212 0.3051L-0.1519 0.2887L-0.0800 0.2714L-0.0230 0.2712L-0.0008 0.3089L-0.0042 0.3759L-0.0087 0.4477L0.0624 0.4442L0.2326 0.3392L0.3787 0.2614L0.4726 0.2416L0.5504 0.2426L0.8674 -0.1009Z" fill="url(#j3)"/>
<path transform="matrix(-107.60 95.39 -95.39 -107.60 1071.48 806.21)" d="M-0.5626 0.0884L-1.1346 0.6293L-1.0809 0.6109L-1.0347 0.6004L-0.9753 0.5783L-0.9062 0.5477L-0.8337 0.5148L-0.7603 0.4818L-0.6810 0.4440L-0.6007 0.4063L-0.5437 0.3924L-0.4962 0.3892L-0.4385 0.3774L-0.3607 0.3470L-0.2738 0.3088L-0.1930 0.2782L-0.1148 0.2517L-0.0484 0.2390L-0.0016 0.2482L0.0154 0.2907L-0.0003 0.3702L-0.0263 0.4644L0.0380 0.4673L0.1965 0.3731L0.3324 0.3048L0.4274 0.2830L0.5108 0.2773L0.8633 -0.1081Z" fill="url(#j0)"/>
<path transform="matrix(-103.38 94.93 -94.93 -103.38 1072.73 806.35)" d="M-0.5772 0.0800L-1.1148 0.5702L-1.0896 0.5796L-1.0610 0.5868L-0.9940 0.5597L-0.9053 0.5133L-0.8285 0.4788L-0.7657 0.4582L-0.6887 0.4254L-0.6023 0.3847L-0.5243 0.3529L-0.4557 0.3313L-0.3933 0.3167L-0.3208 0.2939L-0.2440 0.2684L-0.1650 0.2423L-0.0900 0.2216L-0.0340 0.2213L0.0113 0.2338L0.0413 0.2639L0.0524 0.3158L0.0520 0.3827L0.1155 0.3882L0.2435 0.3307L0.3588 0.2887L0.4662 0.2575L0.5774 0.2254L0.8862 -0.0999Z" fill="url(#j2)"/>
<path transform="matrix(-102.57 95.30 -95.30 -102.57 1074.36 806.93)" d="M-0.5786 0.0803L-1.1174 0.5654L-1.0819 0.5654L-1.0457 0.5657L-0.9873 0.5469L-0.9120 0.5135L-0.8359 0.4802L-0.7757 0.4625L-0.7234 0.4530L-0.6506 0.4259L-0.5517 0.3753L-0.4617 0.3341L-0.4100 0.3300L-0.3762 0.3446L-0.3189 0.3384L-0.2297 0.3035L-0.1414 0.2708L-0.0731 0.2592L-0.0160 0.2604L0.0430 0.2621L0.0975 0.2706L0.1399 0.2938L0.1947 0.3077L0.2643 0.3097L0.3451 0.3036L0.4524 0.2735L0.5904 0.2145L0.8887 -0.0955Z" fill="url(#j1)"/>
<path transform="matrix(-97.36 93.21 -93.21 -97.36 1075.30 806.75)" d="M-0.6016 0.0706L-1.2024 0.5946L-1.1852 0.6124L-1.1409 0.6074L-1.0500 0.5624L-0.9367 0.4982L-0.8462 0.4549L-0.7877 0.4409L-0.7328 0.4314L-0.6399 0.3888L-0.5227 0.3252L-0.4385 0.2924L-0.3872 0.2909L-0.3327 0.2880L-0.2587 0.2687L-0.1739 0.2410L-0.1059 0.2306L-0.0573 0.2402L-0.0086 0.2520L0.0613 0.2461L0.1399 0.2342L0.2119 0.2310L0.2850 0.2295L0.3474 0.2415L0.4061 0.2604L0.4945 0.2536L0.6427 0.1901L0.9245 -0.0935Z" fill="url(#j2)"/>
<path transform="matrix(-93.06 91.51 -91.51 -93.06 1076.46 806.83)" d="M-0.6217 0.0632L-1.3128 0.6491L-1.2863 0.6601L-1.2236 0.6412L-1.1086 0.5783L-0.9808 0.5051L-0.8757 0.4520L-0.7850 0.4120L-0.6900 0.3694L-0.6052 0.3365L-0.5392 0.3212L-0.4850 0.3178L-0.4165 0.3030L-0.3267 0.2708L-0.2351 0.2383L-0.1511 0.2140L-0.0928 0.2147L-0.0440 0.2261L0.0183 0.2275L0.0957 0.2171L0.1768 0.2056L0.2544 0.1998L0.3412 0.1881L0.4275 0.1796L0.4977 0.1897L0.5639 0.2072L0.6614 0.1982L0.9558 -0.0898Z" fill="url(#j2)"/>
<path transform="matrix(-95.32 92.73 -92.73 -95.32 1078.32 807.65)" d="M-0.6094 0.0716L-1.2865 0.6512L-1.2402 0.6443L-1.2027 0.6458L-1.1305 0.6183L-1.0515 0.5858L-0.9737 0.5553L-0.8704 0.5032L-0.7356 0.4243L-0.6390 0.3797L-0.6011 0.3883L-0.5549 0.3908L-0.4671 0.3577L-0.3622 0.3104L-0.2812 0.2859L-0.2158 0.2772L-0.1607 0.2796L-0.0968 0.2760L-0.0105 0.2538L0.0599 0.2482L0.1173 0.2574L0.1900 0.2547L0.3003 0.2188L0.4264 0.1703L0.5110 0.1642L0.5630 0.1933L0.6394 0.2026L0.9373 -0.0914Z" fill="url(#j1)"/>
<path transform="matrix(-95.74 94.05 -94.05 -95.74 1080.16 808.42)" d="M-0.6036 0.0738L-1.2206 0.5960L-1.1668 0.5823L-1.1378 0.5906L-1.0831 0.5779L-1.0023 0.5438L-0.9264 0.5148L-0.8506 0.4867L-0.7508 0.4387L-0.6555 0.3956L-0.5810 0.3716L-0.5075 0.3496L-0.4276 0.3233L-0.3504 0.3007L-0.2851 0.2901L-0.2201 0.2814L-0.1579 0.2770L-0.0879 0.2674L0.0005 0.2429L0.0876 0.2216L0.1552 0.2204L0.2147 0.2293L0.2900 0.2261L0.3824 0.2096L0.4845 0.1866L0.5791 0.1739L0.6672 0.1707L0.9290 -0.0846Z" fill="url(#j2)"/>
<path transform="matrix(-98.69 94.49 -94.49 -98.69 1081.62 808.85)" d="M-0.5916 0.0822L-1.2982 0.6953L-1.2098 0.6502L-1.1375 0.6198L-1.0638 0.5890L-0.9835 0.5531L-0.9123 0.5261L-0.8430 0.5017L-0.7740 0.4787L-0.7031 0.4549L-0.6219 0.4230L-0.5405 0.3920L-0.4798 0.3810L-0.4585 0.4074L-0.4392 0.4376L-0.3720 0.4257L-0.2706 0.3837L-0.1686 0.3428L-0.0713 0.3078L0.0273 0.2733L0.1138 0.2523L0.1825 0.2506L0.2504 0.2523L0.3264 0.2491L0.4147 0.2369L0.5046 0.2262L0.5908 0.2225L0.9110 -0.0972Z" fill="url(#j1)"/>
<path transform="matrix(-102.79 97.77 -97.77 -102.79 1084.40 810.63)" d="M-0.5692 0.0962L-1.1761 0.6256L-1.1168 0.6041L-1.0599 0.5854L-1.0018 0.5665L-0.9471 0.5515L-0.9034 0.5472L-0.8503 0.5355L-0.7864 0.5153L-0.7222 0.4958L-0.6508 0.4710L-0.5611 0.4306L-0.4835 0.4023L-0.4830 0.4460L-0.5045 0.5120L-0.4358 0.4968L-0.2851 0.4067L-0.1456 0.3281L-0.0486 0.2906L0.0242 0.2778L0.0763 0.2869L0.1278 0.2991L0.2100 0.2844L0.3211 0.2438L0.4345 0.2036L0.5216 0.1919L0.5793 0.2129L0.8768 -0.0855Z" fill="url(#j2)"/>
<path transform="matrix(-100.80 99.03 -99.03 -100.80 1086.18 811.26)" d="M-0.5720 0.0919L-1.1072 0.5430L-1.0523 0.5262L-1.0224 0.5314L-0.9893 0.5349L-0.9305 0.5173L-0.8550 0.4863L-0.7849 0.4607L-0.7222 0.4426L-0.6535 0.4202L-0.5680 0.3842L-0.4714 0.3394L-0.4303 0.3447L-0.5188 0.4662L-0.6314 0.6120L-0.5510 0.5882L-0.3025 0.4145L-0.1010 0.2832L0.0052 0.2392L0.0793 0.2263L0.1420 0.2258L0.2047 0.2277L0.2774 0.2229L0.3647 0.2068L0.4670 0.1793L0.5582 0.1649L0.6293 0.1733L0.8817 -0.0713Z" fill="url(#j2)"/>
<path transform="matrix(-98.83 97.86 -97.86 -98.83 1087.14 811.12)" d="M-0.5810 0.0876L-1.2017 0.6061L-1.1391 0.5836L-1.0508 0.5403L-0.9606 0.4960L-0.8808 0.4612L-0.8041 0.4298L-0.7438 0.4131L-0.7054 0.4164L-0.6606 0.4153L-0.5769 0.3817L-0.4775 0.3355L-0.4460 0.3497L-0.5441 0.4792L-0.6714 0.6374L-0.5836 0.6082L-0.3000 0.4056L-0.0993 0.2771L-0.0130 0.2523L0.0693 0.2329L0.1641 0.2041L0.2403 0.1944L0.2927 0.2091L0.3471 0.2251L0.4289 0.2183L0.5288 0.1974L0.6274 0.1809L0.8959 -0.0769Z" fill="url(#j1)"/>
<path transform="matrix(-97.81 95.79 -95.79 -97.81 1087.83 810.74)" d="M-0.5894 0.0860L-1.2649 0.6558L-1.1973 0.6292L-1.1239 0.5983L-1.0540 0.5712L-0.9703 0.5331L-0.8577 0.4709L-0.7533 0.4164L-0.7033 0.4098L-0.6941 0.4397L-0.6486 0.4396L-0.5397 0.3851L-0.4540 0.3520L-0.4828 0.4215L-0.5437 0.5220L-0.4719 0.5064L-0.2948 0.3976L-0.1657 0.3329L-0.0849 0.3135L0.0244 0.2699L0.1483 0.2145L0.2340 0.1963L0.2784 0.2193L0.3113 0.2562L0.3659 0.2759L0.4580 0.2634L0.5681 0.2367L0.9093 -0.0938Z" fill="url(#j3)"/>
<path transform="matrix(-92.42 93.01 -93.01 -92.42 1088.38 810.19)" d="M-0.6159 0.0732L-1.3893 0.7069L-1.2848 0.6525L-1.1905 0.6071L-1.0951 0.5614L-0.9695 0.4913L-0.8437 0.4216L-0.7667 0.3934L-0.7411 0.4093L-0.7231 0.4331L-0.6607 0.4206L-0.5545 0.3721L-0.4487 0.3250L-0.4032 0.3308L-0.4016 0.3763L-0.3527 0.3828L-0.2522 0.3462L-0.1508 0.3103L-0.0573 0.2830L0.0427 0.2517L0.1569 0.2097L0.2567 0.1826L0.3158 0.1948L0.3476 0.2351L0.3983 0.2616L0.4969 0.2472L0.6034 0.2288L0.9507 -0.0978Z" fill="url(#j2)"/>
<path transform="matrix(-89.34 90.81 -90.81 -89.34 1089.23 809.96)" d="M-0.6338 0.0672L-1.4829 0.7549L-1.4053 0.7241L-1.2931 0.6658L-1.1671 0.5968L-1.0428 0.5298L-0.9333 0.4754L-0.8430 0.4378L-0.7767 0.4210L-0.7236 0.4163L-0.6493 0.3952L-0.5557 0.3590L-0.4749 0.3348L-0.4195 0.3335L-0.3626 0.3326L-0.2793 0.3107L-0.1794 0.2762L-0.0881 0.2506L-0.0067 0.2356L0.0679 0.2285L0.1408 0.2253L0.2168 0.2217L0.2893 0.2241L0.3606 0.2304L0.4325 0.2394L0.5107 0.2461L0.5961 0.2500L0.9788 -0.1056Z" fill="url(#j2)"/>
<path transform="matrix(-89.79 90.64 -90.64 -89.79 1090.55 810.19)" d="M-0.6321 0.0695L-1.5192 0.7922L-1.4308 0.7521L-1.3109 0.6869L-1.1953 0.6257L-1.0962 0.5788L-0.9885 0.5254L-0.8741 0.4673L-0.7785 0.4256L-0.7270 0.4218L-0.6879 0.4299L-0.6223 0.4169L-0.5543 0.4033L-0.4768 0.3829L-0.3767 0.3446L-0.2605 0.2937L-0.1521 0.2509L-0.0810 0.2423L-0.0212 0.2455L0.0391 0.2506L0.0982 0.2591L0.1620 0.2662L0.2339 0.2687L0.3196 0.2617L0.4038 0.2590L0.4826 0.2647L0.5826 0.2544L0.9767 -0.1136Z" fill="url(#j3)"/>
<path transform="matrix(-89.59 91.89 -91.89 -89.59 1092.57 811.11)" d="M-0.6285 0.0718L-1.4454 0.7256L-1.3768 0.7019L-1.2488 0.6311L-1.1285 0.5669L-1.0473 0.5352L-0.9521 0.4928L-0.8588 0.4527L-0.7668 0.4146L-0.7046 0.4020L-0.6717 0.4149L-0.6160 0.4103L-0.5344 0.3854L-0.4239 0.3376L-0.3254 0.3010L-0.2480 0.2837L-0.1693 0.2669L-0.0903 0.2516L-0.0278 0.2524L0.0116 0.2755L0.0676 0.2866L0.1714 0.2584L0.3066 0.2046L0.4080 0.1829L0.4531 0.2149L0.4940 0.2544L0.5845 0.2528L0.9716 -0.1022Z" fill="url(#j2)"/>
<path transform="matrix(-89.32 92.21 -92.21 -89.32 1094.25 811.69)" d="M-0.6281 0.0738L-1.4629 0.7366L-1.3738 0.6968L-1.2582 0.6364L-1.1277 0.5645L-1.0165 0.5088L-0.9332 0.4762L-0.8826 0.4710L-0.8239 0.4603L-0.7520 0.4400L-0.6859 0.4256L-0.6176 0.4106L-0.5359 0.3858L-0.4447 0.3544L-0.3737 0.3411L-0.3122 0.3375L-0.2215 0.3109L-0.0941 0.2547L0.0181 0.2129L0.0810 0.2151L0.1307 0.2312L0.2013 0.2317L0.2923 0.2170L0.3785 0.2091L0.4481 0.2190L0.5094 0.2398L0.5867 0.2499L0.9715 -0.0999Z" fill="url(#j3)"/>
<path transform="matrix(-93.44 94.64 -94.64 -93.44 1096.25 812.61)" d="M-0.6052 0.0845L-1.3306 0.6710L-1.2567 0.6409L-1.1896 0.6171L-1.1042 0.5790L-1.0063 0.5314L-0.9161 0.4908L-0.8509 0.4717L-0.7955 0.4616L-0.7378 0.4508L-0.6821 0.4428L-0.6181 0.4291L-0.5471 0.4108L-0.4839 0.4004L-0.4362 0.4047L-0.3938 0.4152L-0.3227 0.4029L-0.2000 0.3476L-0.0766 0.2931L-0.0038 0.2845L0.0502 0.2945L0.1079 0.3039L0.1742 0.3082L0.2617 0.2963L0.3703 0.2680L0.4769 0.2444L0.5780 0.2288L0.9365 -0.1026Z" fill="url(#j2)"/>
<path transform="matrix(-94.99 97.01 -97.01 -94.99 1098.49 813.73)" d="M-0.5927 0.0898L-1.2688 0.6311L-1.1857 0.5932L-1.1058 0.5585L-1.0160 0.5164L-0.9219 0.4715L-0.8462 0.4422L-0.7948 0.4337L-0.7522 0.4333L-0.6998 0.4261L-0.6464 0.4192L-0.5989 0.4185L-0.5494 0.4175L-0.4941 0.4130L-0.4523 0.4214L-0.4582 0.4719L-0.4463 0.5096L-0.3249 0.4556L-0.1485 0.3554L-0.0334 0.3093L0.0335 0.3070L0.1127 0.2962L0.2055 0.2757L0.2980 0.2579L0.3786 0.2533L0.4576 0.2534L0.5626 0.2329L0.9176 -0.0919Z" fill="url(#j3)"/>
<path transform="matrix(-96.94 98.64 -98.64 -96.94 1100.77 814.91)" d="M-0.5812 0.0990L-1.2809 0.6606L-1.1811 0.6084L-1.0791 0.5550L-0.9791 0.5038L-0.8914 0.4631L-0.8453 0.4571L-0.8236 0.4720L-0.7919 0.4799L-0.7330 0.4666L-0.6582 0.4411L-0.6074 0.4367L-0.5821 0.4549L-0.5545 0.4728L-0.5227 0.4889L-0.5394 0.5479L-0.5520 0.6058L-0.4164 0.5388L-0.1737 0.3803L-0.0178 0.2974L0.0530 0.2902L0.1312 0.2787L0.2063 0.2722L0.2695 0.2788L0.3474 0.2752L0.4590 0.2440L0.5893 0.1984L0.9003 -0.0867Z" fill="url(#j3)"/>
<path transform="matrix(-93.74 98.68 -98.68 -93.74 1102.22 815.17)" d="M-0.5913 0.0915L-1.2436 0.5964L-1.1733 0.5697L-1.0812 0.5267L-0.9648 0.4653L-0.8460 0.4025L-0.7642 0.3693L-0.7304 0.3749L-0.7128 0.3944L-0.6785 0.4019L-0.6204 0.3915L-0.5873 0.4025L-0.6084 0.4587L-0.6297 0.5169L-0.5752 0.5154L-0.5402 0.5315L-0.5513 0.5874L-0.3977 0.5092L-0.1277 0.3350L0.0731 0.2187L0.1790 0.1833L0.2364 0.1908L0.2578 0.2317L0.2804 0.2748L0.3527 0.2781L0.4933 0.2246L0.6558 0.1541L0.9165 -0.0763Z" fill="url(#j3)"/>
<path transform="matrix(-93.47 96.61 -96.61 -93.47 1103.06 814.98)" d="M-0.5977 0.0934L-1.3358 0.6748L-1.2821 0.6609L-1.1915 0.6184L-1.0643 0.5476L-0.9386 0.4783L-0.8535 0.4420L-0.8134 0.4426L-0.7650 0.4377L-0.6931 0.4148L-0.6378 0.4064L-0.6376 0.4444L-0.6821 0.5207L-0.7081 0.5840L-0.6368 0.5686L-0.5172 0.5145L-0.4369 0.4944L-0.3127 0.4390L-0.1488 0.3512L-0.0079 0.2840L0.1015 0.2452L0.1802 0.2348L0.2168 0.2633L0.2315 0.3141L0.2888 0.3309L0.4353 0.2717L0.6278 0.1734L0.9267 -0.0952Z" fill="url(#j2)"/>
<path transform="matrix(-93.36 98.33 -98.33 -93.36 1104.88 815.65)" d="M-0.5928 0.0920L-1.1867 0.5502L-1.1269 0.5314L-1.0504 0.5003L-0.9553 0.4553L-0.8704 0.4190L-0.8292 0.4177L-0.8101 0.4347L-0.7499 0.4205L-0.6516 0.3770L-0.5944 0.3671L-0.6079 0.4150L-0.6600 0.4957L-0.6873 0.5585L-0.6075 0.5363L-0.4309 0.4365L-0.2626 0.3441L-0.1225 0.2758L-0.0043 0.2267L0.0859 0.2024L0.1528 0.1995L0.1989 0.2164L0.2112 0.2648L0.1925 0.3431L0.2253 0.3808L0.3725 0.3224L0.5709 0.2213L0.9197 -0.0855Z" fill="url(#j2)"/>
<path transform="matrix(-92.08 95.02 -95.02 -92.08 1105.31 815.05)" d="M-0.6062 0.0913L-1.3714 0.6933L-1.2768 0.6471L-1.1893 0.6073L-1.0959 0.5633L-1.0139 0.5290L-0.9564 0.5152L-0.8911 0.4960L-0.7946 0.4526L-0.6961 0.4084L-0.6387 0.3984L-0.6131 0.4157L-0.6082 0.4514L-0.6015 0.4874L-0.5215 0.4646L-0.3778 0.3902L-0.2492 0.3293L-0.1458 0.2908L-0.0369 0.2491L0.0635 0.2162L0.1126 0.2290L0.1204 0.2800L0.1376 0.3261L0.1710 0.3612L0.2274 0.3796L0.3458 0.3463L0.4936 0.2895L0.9410 -0.1113Z" fill="url(#j0)"/>
<path transform="matrix(-89.69 92.80 -92.80 -89.69 1106.07 814.72)" d="M-0.6212 0.0866L-1.4487 0.7351L-1.3766 0.7076L-1.3052 0.6813L-1.2244 0.6483L-1.1423 0.6150L-1.0690 0.5896L-0.9884 0.5592L-0.8824 0.5094L-0.7699 0.4549L-0.6777 0.4178L-0.6157 0.4062L-0.5696 0.4090L-0.5192 0.4096L-0.4431 0.3907L-0.3474 0.3569L-0.2651 0.3357L-0.1904 0.3224L-0.0964 0.2948L0.0008 0.2662L0.0635 0.2688L0.0679 0.3241L0.0667 0.3873L0.1374 0.3918L0.2471 0.3650L0.3804 0.3202L0.5392 0.2554L0.9647 -0.1241Z" fill="url(#j1)"/>
<path transform="matrix(-93.57 96.87 -96.87 -93.57 1108.90 816.40)" d="M-0.5948 0.0984L-1.2865 0.6393L-1.1791 0.5825L-1.1123 0.5581L-1.0884 0.5683L-1.0659 0.5807L-1.0087 0.5664L-0.9171 0.5257L-0.8100 0.4733L-0.7247 0.4391L-0.6493 0.4138L-0.5708 0.3871L-0.4986 0.3665L-0.4368 0.3557L-0.3716 0.3435L-0.2761 0.3076L-0.1806 0.2730L-0.1321 0.2791L-0.0926 0.2947L-0.0344 0.2966L0.0063 0.3156L-0.0156 0.3908L-0.0619 0.4904L0.0036 0.4971L0.2086 0.3846L0.3971 0.2880L0.5774 0.2005L0.9242 -0.1080Z" fill="url(#j0)"/>
<path transform="matrix(-92.98 100.50 -100.50 -92.98 1111.11 817.37)" d="M-0.5863 0.0926L-1.1835 0.5386L-1.0346 0.4533L-0.9534 0.4190L-0.9128 0.4159L-0.8588 0.4035L-0.7822 0.3748L-0.7252 0.3617L-0.6812 0.3596L-0.6264 0.3502L-0.5447 0.3210L-0.4676 0.2964L-0.4186 0.2946L-0.3884 0.3089L-0.3343 0.3059L-0.2191 0.2561L-0.0991 0.2036L-0.0389 0.1999L-0.0050 0.2190L0.0455 0.2269L0.0524 0.2723L-0.0352 0.3978L-0.1435 0.5443L-0.0888 0.5604L0.1725 0.4066L0.4281 0.2582L0.6266 0.1591L0.9114 -0.0829Z" fill="url(#j1)"/>
<path transform="matrix(-93.51 99.54 -99.54 -93.51 1112.64 817.82)" d="M-0.5868 0.0995L-1.2450 0.5982L-1.1048 0.5180L-1.0081 0.4711L-0.9553 0.4584L-0.9141 0.4554L-0.8680 0.4496L-0.8246 0.4467L-0.7643 0.4317L-0.6787 0.3980L-0.5794 0.3544L-0.5082 0.3337L-0.4727 0.3422L-0.4371 0.3521L-0.3702 0.3386L-0.2726 0.3018L-0.1803 0.2705L-0.0982 0.2488L-0.0090 0.2229L0.0695 0.2074L0.0698 0.2581L-0.0315 0.3959L-0.1307 0.5362L-0.0747 0.5505L0.1572 0.4188L0.4000 0.2788L0.5818 0.1921L0.9126 -0.0928Z" fill="url(#j3)"/>
<path transform="matrix(-90.40 98.59 -98.59 -90.40 1113.94 817.96)" d="M-0.5996 0.0938L-1.2255 0.5557L-1.0897 0.4814L-1.0042 0.4449L-0.9743 0.4503L-0.9401 0.4534L-0.8784 0.4369L-0.8107 0.4167L-0.7557 0.4070L-0.7160 0.4099L-0.6648 0.4051L-0.5909 0.3842L-0.5053 0.3554L-0.4221 0.3295L-0.3437 0.3084L-0.2634 0.2872L-0.1882 0.2714L-0.1089 0.2537L-0.0131 0.2247L0.0725 0.2053L0.0891 0.2432L0.0179 0.3546L-0.0444 0.4626L0.0169 0.4735L0.2088 0.3796L0.4209 0.2704L0.5846 0.2031L0.9330 -0.0890Z" fill="url(#j2)"/>
<path transform="matrix(-85.32 95.24 -95.24 -85.32 1114.76 817.69)" d="M-0.6276 0.0852L-1.3434 0.6000L-1.2209 0.5388L-1.1443 0.5112L-1.1012 0.5087L-1.0291 0.4859L-0.9137 0.4322L-0.8079 0.3862L-0.7609 0.3842L-0.7514 0.4111L-0.7080 0.4141L-0.6130 0.3800L-0.5145 0.3441L-0.4426 0.3294L-0.3673 0.3134L-0.2792 0.2891L-0.2125 0.2824L-0.1590 0.2877L-0.0740 0.2704L0.0439 0.2293L0.1252 0.2185L0.1119 0.2843L0.0863 0.3631L0.1473 0.3765L0.2973 0.3213L0.4900 0.2337L0.6639 0.1632L0.9772 -0.0927Z" fill="url(#j3)"/>
<path transform="matrix(-82.68 92.51 -92.51 -82.68 1115.83 817.69)" d="M-0.6464 0.0843L-1.5070 0.7007L-1.4051 0.6556L-1.3104 0.6161L-1.2418 0.5961L-1.1862 0.5865L-1.1130 0.5648L-1.0099 0.5223L-0.8958 0.4724L-0.8006 0.4372L-0.7228 0.4157L-0.6512 0.4000L-0.5788 0.3849L-0.5077 0.3720L-0.4242 0.3511L-0.3195 0.3156L-0.2117 0.2791L-0.1145 0.2520L-0.0255 0.2328L0.0601 0.2180L0.1256 0.2209L0.1325 0.2720L0.1241 0.3383L0.1913 0.3481L0.3472 0.2900L0.5348 0.2085L0.6818 0.1620L1.0070 -0.1026Z" fill="url(#j3)"/>
<path transform="matrix(-81.25 91.61 -91.61 -81.25 1117.04 817.80)" d="M-0.6549 0.0814L-1.5831 0.7400L-1.4699 0.6877L-1.3462 0.6283L-1.2470 0.5870L-1.1798 0.5695L-1.1131 0.5530L-1.0228 0.5205L-0.9106 0.4729L-0.7945 0.4232L-0.6802 0.3756L-0.5957 0.3508L-0.5405 0.3488L-0.4981 0.3577L-0.4419 0.3579L-0.3471 0.3307L-0.2385 0.2945L-0.1367 0.2649L-0.0402 0.2409L0.0458 0.2266L0.1046 0.2354L0.1022 0.2940L0.0824 0.3695L0.1507 0.3794L0.3491 0.2893L0.5619 0.1893L0.7002 0.1511L1.0207 -0.1069Z" fill="url(#j1)"/>
<path transform="matrix(-81.56 94.90 -94.90 -81.56 1119.24 818.75)" d="M-0.6415 0.0787L-1.3455 0.5612L-1.2615 0.5301L-1.1496 0.4803L-1.0167 0.4165L-0.9099 0.3714L-0.8353 0.3492L-0.7662 0.3317L-0.6917 0.3113L-0.6201 0.2939L-0.5525 0.2803L-0.4950 0.2749L-0.4787 0.3003L-0.5031 0.3563L-0.4971 0.3924L-0.4100 0.3717L-0.2686 0.3128L-0.1123 0.2441L0.0325 0.1849L0.1319 0.1606L0.1592 0.1918L0.1094 0.2832L0.0463 0.3885L0.0995 0.4092L0.3343 0.2941L0.5592 0.1877L0.6921 0.1543L1.0004 -0.0855Z" fill="url(#j1)"/>
<path transform="matrix(-81.89 93.80 -93.80 -81.89 1120.59 819.02)" d="M-0.6437 0.0844L-1.5123 0.6887L-1.3810 0.6241L-1.2200 0.5391L-1.0532 0.4504L-0.9513 0.4077L-0.9153 0.4122L-0.8784 0.4171L-0.8069 0.3984L-0.7480 0.3897L-0.7158 0.4013L-0.6749 0.4079L-0.6448 0.4237L-0.6572 0.4720L-0.6445 0.5037L-0.5438 0.4727L-0.3972 0.4091L-0.2423 0.3404L-0.1067 0.2872L0.0036 0.2544L0.0920 0.2399L0.1159 0.2764L0.0768 0.3640L0.1309 0.3836L0.3191 0.3021L0.5083 0.2216L0.6503 0.1803L1.0043 -0.0990Z" fill="url(#j2)"/>
<path transform="matrix(-81.39 95.88 -95.88 -81.39 1123.27 820.36)" d="M-0.6379 0.0885L-1.4175 0.6144L-1.2849 0.5508L-1.1466 0.4837L-1.0148 0.4214L-0.9311 0.3925L-0.8926 0.3952L-0.8635 0.4054L-0.8135 0.4022L-0.7547 0.3940L-0.7003 0.3898L-0.6617 0.3979L-0.6707 0.4408L-0.7197 0.5135L-0.7170 0.5518L-0.5920 0.5048L-0.4000 0.4109L-0.2306 0.3341L-0.0999 0.2861L0.0311 0.2394L0.1563 0.1982L0.2129 0.2094L0.1946 0.2785L0.2473 0.2981L0.4173 0.2324L0.5935 0.1637L0.7321 0.1259L0.9957 -0.0758Z" fill="url(#j3)"/>
<path d="M728.5 806.5L1049.5 922.0L1166.7 752.0" stroke="#fff" stroke-width="1.5" fill="none" stroke-linecap="square"/>
<path d="M728.5 806.5v3.5M737.4 809.7v3.5M746.3 812.9v3.5M755.2 816.1v3.5M764.2 819.3v3.5M773.1 822.5v3.5M782.0 825.8v3.5M790.9 829.0v3.5M799.8 832.2v3.5M808.8 835.4v3.5M817.7 838.6v3.5M826.6 841.8v3.5M835.5 845.0v3.5M844.4 848.2v3.5M853.3 851.4v3.5M862.2 854.6v3.5M871.2 857.8v3.5M880.1 861.0v3.5M889.0 864.2v3.5M897.9 867.5v3.5M906.8 870.7v3.5M915.8 873.9v3.5M924.7 877.1v3.5M933.6 880.3v3.5M942.5 883.5v3.5M951.4 886.7v3.5M960.3 889.9v3.5M969.2 893.1v3.5M978.2 896.3v3.5M987.1 899.5v3.5M996.0 902.8v3.5M1004.9 906.0v3.5M1013.8 909.2v3.5M1022.8 912.4v3.5M1031.7 915.6v3.5M1040.6 918.8v3.5M1049.5 922.0v3.5M1072.9 888.0l2.5 1.5M1096.4 854.0l2.5 1.5M1119.8 820.0l2.5 1.5M1143.3 786.0l2.5 1.5M1166.7 752.0l2.5 1.5" stroke="#fff" stroke-width="1.3" fill="none"/>
<path d="M697.0 604.3L725.3 804.5" stroke="url(#lg)" stroke-width="4.5" fill="none"/>
<text x="685.5" y="623.5" font-size="11" font-weight="700" font-family="Liberation Sans, sans-serif" fill="#fff">E</text>
<text x="1064" y="910" font-size="12.5" font-weight="700" font-family="Liberation Sans, sans-serif" fill="#fff">NT</text>
<text x="885.5" y="875" font-size="12" font-family="Liberation Sans, sans-serif" fill="#fff">L</text>
<text x="917.5" y="887.5" font-size="12" font-family="Liberation Sans, sans-serif" fill="#fff">L</text>
<text x="952.5" y="901" font-size="12" font-family="Liberation Sans, sans-serif" fill="#fff">L</text>
<text x="989.5" y="913.5" font-size="12" font-family="Liberation Sans, sans-serif" fill="#fff">L</text>
<text x="969.5" y="908" font-size="12" font-family="Liberation Sans, sans-serif" fill="#fff">)(</text>
</svg>
<svg class="a" style="left:2px;top:4px" width="22" height="21" viewBox="0 0 22 21"><rect x="0" y="0" width="20" height="19" fill="#d8d8d8"/><path d="M0 19.5V15L9.5 5L20 15.5V19.5Z" fill="#000"/><text x="10" y="18.5" font-size="6.5" font-weight="700" font-family="Liberation Sans, sans-serif" fill="#fff" text-anchor="middle">XTZ</text></svg>
<svg class="a" style="left:16px;top:60px" width="15" height="18" viewBox="0 0 15 18"><path d="M0.5 0.5H9.5L13.5 4.5V16.5H0.5Z" fill="#fff" stroke="#000"/><path d="M9.5 0.5V4.5H13.5" fill="#e0e0e0" stroke="#000"/></svg>
<svg class="a" style="left:42px;top:60px" width="20" height="17" viewBox="0 0 20 17"><path d="M1 16V4.5H2.5L3.5 3.5H7L8 4.5H12.5V8" fill="#ffff80" stroke="#000"/><path d="M1 16L4.5 8.5H18.5L14 16Z" fill="#808000" stroke="#000"/><path d="M11 2.5Q14 -0.5 17 3" fill="none" stroke="#000"/><path d="M18.5 1V5H14.5Z" fill="#000"/></svg>
<svg class="a" style="left:71px;top:60px" width="18" height="18" viewBox="0 0 18 18"><path d="M0.5 0.5H16.5L17.5 1.5V17.5H0.5Z" fill="#808000" stroke="#000"/><rect x="3.5" y="0.5" width="10" height="8" fill="#e8e8e8" stroke="#000" stroke-width="0.6"/><rect x="4" y="11" width="10" height="6.5" fill="#000"/><rect x="11" y="12.5" width="2" height="4" fill="#e8e8e8"/></svg>
<svg class="a" style="left:106px;top:60px" width="20" height="18" viewBox="0 0 20 18"><path d="M5.5 6.5L7.5 0.5H15.5L14.5 6.5Z" fill="#fff" stroke="#000"/><path d="M8.5 2.5H13.5M8 4.5H13" stroke="#808080"/><path d="M0.5 9.5L3.5 6.5H17L19.5 8.5V13L17 16.5H0.5Z" fill="#c0c0c0" stroke="#000"/><path d="M0.5 9.5H16.5V16.5M16.5 9.5L19.5 7" fill="none" stroke="#000"/><rect x="1.5" y="11" width="14" height="2.5" fill="#fff"/><rect x="8.5" y="11.3" width="4.5" height="1.8" fill="#e0e040"/><rect x="1" y="14" width="15" height="2" fill="#808080"/></svg>
<svg class="a" style="left:142px;top:59px" width="22" height="21" viewBox="0 0 22 21"><path d="M3 4.2H12.5V1.2L18 6L12.5 10.8V7.8H3Z" fill="#000"/><text x="0" y="19.3" textLength="21" lengthAdjust="spacingAndGlyphs" font-family="Liberation Mono, monospace" font-size="9.5" fill="#000" stroke="#000" stroke-width="0.35">ROOM</text></svg>
<svg class="a" style="left:171px;top:59px" width="22" height="21" viewBox="0 0 22 21"><path d="M3 4.2H12.5V1.2L18 6L12.5 10.8V7.8H3Z" fill="#000"/><text x="0" y="19.3" textLength="20.5" lengthAdjust="spacingAndGlyphs" font-family="Liberation Mono, monospace" font-size="9.5" fill="#000" stroke="#000" stroke-width="0.35">RTA</text></svg>
<svg class="a" style="left:199.5px;top:59px" width="22" height="21" viewBox="0 0 22 21"><path d="M3 4.2H12.5V1.2L18 6L12.5 10.8V7.8H3Z" fill="#000"/><text x="0" y="19.3" textLength="21" lengthAdjust="spacingAndGlyphs" font-family="Liberation Mono, monospace" font-size="9.5" fill="#000" stroke="#000" stroke-width="0.35">BOTH</text></svg>
<svg class="a" style="left:241px;top:59px" width="23" height="22" viewBox="0 0 23 22"><path d="M1 1.5L21.5 10.5L1 20.5Z" fill="#00e000"/><text x="3" y="17" font-family="Liberation Serif, serif" font-weight="700" font-size="19" fill="#000" textLength="17" lengthAdjust="spacingAndGlyphs">fg</text></svg>
<svg class="a" style="left:0;top:1030px" width="1920" height="50" viewBox="0 0 1920 50"><defs><linearGradient id="tbg" x1="0" y1="0" x2="1" y2="0"><stop offset="0" stop-color="#0c0b0b"/><stop offset="0.31" stop-color="#100d0c"/><stop offset="0.36" stop-color="#1e190c"/><stop offset="0.42" stop-color="#2b240b"/><stop offset="0.53" stop-color="#2a2209"/><stop offset="0.62" stop-color="#332a0b"/><stop offset="0.76" stop-color="#3a300d"/><stop offset="0.775" stop-color="#1f1c1a"/><stop offset="1" stop-color="#1c1a19"/></linearGradient></defs><rect x="0" y="0" width="1920" height="50" fill="url(#tbg)"/><rect x="1027" y="0" width="50" height="50" fill="#3e3d3d"/><path d="M1030 0l40 50M1040 0l36 46M1050 0l26 34M1029 12l30 38" stroke="#56524e" stroke-width="3"/><path d="M0 0l3 9l6-4l4 5l6-8l2 14l-19 4z" transform="translate(912 36) scale(1.1)" fill="#1c2030"/><path d="M0 0l3 9l6-4l4 5l6-8l2 14l-19 4z" transform="translate(1020 30) scale(1.2)" fill="#1c2030"/><path d="M0 0l3 9l6-4l4 5l6-8l2 14l-19 4z" transform="translate(1175 42) scale(1.0)" fill="#1c2030"/><path d="M0 0l3 9l6-4l4 5l6-8l2 14l-19 4z" transform="translate(1225 20) scale(1.6)" fill="#1c2030"/><path d="M0 0l3 9l6-4l4 5l6-8l2 14l-19 4z" transform="translate(1335 12) scale(1.8)" fill="#1c2030"/><path d="M0 0l3 9l6-4l4 5l6-8l2 14l-19 4z" transform="translate(1440 28) scale(1.5)" fill="#1c2030"/><rect x="618" y="0" width="61" height="50" fill="#46413d"/><rect x="561" y="47" width="51" height="3" fill="#76b9ed"/><rect x="618.5" y="47" width="60.5" height="3" fill="#76b9ed"/><rect x="685" y="47" width="51" height="3" fill="#76b9ed"/><path d="M20 17.6l8.3-1.2v8.1H20zM29.5 16.2L40.6 14.6v9.9H29.5zM20 25.7h8.3v8.1L20 32.6zM29.5 25.7h11.1v9.9L29.5 34z" fill="#fff"/><circle cx="92.3" cy="22.2" r="7" fill="none" stroke="#fff" stroke-width="1.3"/><path d="M87.5 27.5L80.3 34.5" stroke="#fff" stroke-width="1.5"/><path d="M142.5 15.5h15v18h-15zM140.5 19.5h-2.5v10h2.5M159.5 19.5h2.5v10h-2.5" fill="none" stroke="#fff" stroke-width="1.15"/><path d="M202.3 27.5c0-8.5 5.5-15 12.5-15c7 0 11 5 11 12.5v2.2h-16c0.3 4 3.2 6 7 6c3 0 5.6-0.8 7.8-2.2v5c-2.4 1.3-5.3 2-8.6 2c-7.5 0-12.2-4.6-12.2-11c0-4.2 2.3-7.4 5.8-9.2c-1.3 1.5-2 3.3-2.3 5h10.6c0-3.2-1.5-5-4.3-5c-4 0-9.6 3.3-11.3 9.7z" fill="#1580d8"/><path d="M262.5 13.5h9l2 2.5h15.5v19h-26.5z" fill="#f5d77e"/><rect x="262.5" y="18" width="26.5" height="17" fill="#fbe69c"/><path d="M267.5 35v-8.5h16.5v8.5h-4v-5h-8.5v5z" fill="#3a9ad9"/><rect x="266" y="15" width="5" height="1.5" fill="#fff"/><path d="M332.5 18v-3c0-6 10.5-6 10.5 0v3" fill="none" stroke="#fff" stroke-width="1.6"/><rect x="323" y="18" width="29" height="20.5" fill="#fff"/><rect x="331.5" y="22" width="5.5" height="5.5" fill="#f25022"/><rect x="338.2" y="22" width="5.5" height="5.5" fill="#7fba00"/><rect x="331.5" y="28.7" width="5.5" height="5.5" fill="#00a4ef"/><rect x="338.2" y="28.7" width="5.5" height="5.5" fill="#ffb900"/><rect x="385" y="10" width="30" height="30" fill="#2a9fd6"/><path d="M392 32.5l3.5-16.5h3.5l1 16.5z" fill="#0d3c8c"/><path d="M396.5 15.5h4.5v14h7v4h-11.5z" fill="#fff"/><rect x="447" y="10" width="30" height="30" fill="#e8342a"/><path d="M456.5 16.5v17M462 16.5v17M467.5 16.5v17" stroke="#fff" stroke-width="1.6"/><path d="M455 20h3M460.5 28h3M466 22h3" stroke="#fff" stroke-width="2.6"/><path d="M509.5 11l14 6.5l14-6.5v21l-14 8l-14-8zM515 19.5v9.5l8.5 5l8.5-5v-9.5l-8.5 4z" fill="#c3302b" fill-rule="evenodd"/><circle cx="586" cy="25.5" r="13" fill="#ff9500"/><circle cx="584.5" cy="24" r="8.5" fill="#2a6bd8"/><path d="M573 23c1-6 6-10 12-10.5c-3 2-4 4-3.5 6.5c3-1 6 0.5 6.5 3c-3-0.5-5 1-5 3.500c0 3 3 4.500 6 3.500c3-1 4-4 3.500-7c2.500 3 3 8 0 12c-4 5-12 6-17 2c-3-3-4-7-2.500-13z" fill="#ff5a1f"/><path d="M590 11c5 2 9 7 9 14.500c0 3-1 6-3 8c1-5 0-9-2.500-12c0.500-4-1-8-3.500-10.500z" fill="#ffd43a"/><rect x="633" y="10" width="30" height="30" fill="#d2d2d2"/><path d="M633 40v-7.500L648 17l15 15.500V40z" fill="#000"/><text x="648" y="38" font-family="Liberation Sans, sans-serif" font-size="8.5" fill="#fff" text-anchor="middle" font-weight="700">XTZ</text><path d="M696 27c0-8 8-13.500 16-13.500c8 0 12 4 11 9c-1 4-6 3-8 5.500c-2 2.500 2 5-1 8c-3 2.500-9 1.500-13-1c-3-2-5-5-5-8z" fill="#d6e4ef" stroke="#9fb6c9" stroke-width="0.8"/><circle cx="702" cy="25.500" r="2.300" fill="#e84c3d"/><circle cx="707" cy="19.500" r="2.300" fill="#f2b632"/><circle cx="714" cy="18" r="2.300" fill="#4caf50"/><circle cx="703.500" cy="32" r="2.300" fill="#3d7fd9"/><path d="M724.500 8l-10.500 27l-2.500 3l0.500-4z" fill="#c98b4a"/><path d="M724.500 8l2 1l-3 8l-2-1z" fill="#e7c08a"/><g fill="none" stroke="#fff" stroke-width="1.3"><circle cx="1616" cy="18.5" r="3.200"/><path d="M1610.500 29c0-4 2.500-6.500 5.500-6.500s5.500 2.500 5.500 6"/><circle cx="1608.500" cy="23.500" r="2.800"/><path d="M1603.500 34c0-4 2-6.500 5-6.500s5 2.500 5 6"/></g><path d="M1649.500 29l8-7.500l8 7.500" fill="none" stroke="#fff" stroke-width="1.4"/><rect x="1679" y="20.500" width="17" height="9.500" fill="none" stroke="#fff" stroke-width="1.2"/><rect x="1696.500" y="23" width="1.500" height="4.500" fill="#fff"/><rect x="1680.500" y="22" width="6" height="6.500" fill="#fff"/><g fill="none" stroke="#fff" stroke-width="1.200"><path d="M1711 31.500a14 14 0 0 1 14-13"/><path d="M1714.500 32a10.500 10.500 0 0 1 10.500-9.500" /><path d="M1718 32.500a7 7 0 0 1 7-6" /></g><circle cx="1724.500" cy="31.500" r="1.600" fill="#fff"/><path d="M1737.500 22.500h3.500l4.500-4.500v15l-4.500-4.500h-3.500z" fill="none" stroke="#fff" stroke-width="1.200"/><path d="M1748.500 21.500a5 5 0 0 1 0 8M1751.500 19a8.500 8.500 0 0 1 0 13" fill="none" stroke="#fff" stroke-width="1.100"/><path d="M1754.500 16.500a12 12 0 0 1 0 18" fill="none" stroke="#8a8a8a" stroke-width="1"/><path d="M1870 15.500h19v14h-7l-2.500 3l-2.500-3h-7z" fill="none" stroke="#fff" stroke-width="1.300"/><rect x="1914" y="0" width="1" height="50" fill="#5a5a5a"/></svg>
<span class="t" style="left:27.0px;top:4.7px;font-size:15px;line-height:20px;letter-spacing:-0.05px;">Untitled* - XTZ Room Analyzer Pro</span>
<span class="t" style="left:8.7px;top:31.0px;font-size:15px;line-height:20px;letter-spacing:-0.42px;">File</span>
<span class="t" style="left:48.7px;top:31.0px;font-size:15px;line-height:20px;letter-spacing:-0.14px;">View</span>
<span class="t" style="left:97.0px;top:31.0px;font-size:15px;line-height:20px;letter-spacing:-0.36px;">Setup</span>
<span class="t" style="left:152.5px;top:31.0px;font-size:15px;line-height:20px;letter-spacing:0.09px;">Help</span>
<span class="t" style="left:272.5px;top:59.6px;font-size:14px;line-height:18px;letter-spacing:-0.42px;">Level (dBFS)</span>
<span class="t" style="left:356.5px;top:60.6px;font-size:14px;line-height:18px;color:#6d6d6d;letter-spacing:-0.21px;">-6.0</span>
<span class="t" style="left:14.7px;top:103.0px;font-size:25px;line-height:32px;font-weight:700;color:#ffff80;letter-spacing:-0.47px;">107</span>
<span class="t" style="left:57.0px;top:115.4px;font-size:12.5px;line-height:16px;font-weight:700;color:#ffff80;letter-spacing:-0.02px;">LCpk hold</span>
<span class="t" style="left:14.2px;top:133.0px;font-size:25px;line-height:32px;font-weight:700;color:#ffff80;letter-spacing:-0.19px;">56.4</span>
<span class="t" style="left:64.2px;top:145.4px;font-size:12.5px;line-height:16px;font-weight:700;color:#ffff80;letter-spacing:0.17px;">LCpeak</span>
<span class="t" style="left:14.2px;top:163.0px;font-size:25px;line-height:32px;font-weight:700;color:#ffff80;letter-spacing:-0.19px;">86.8</span>
<span class="t" style="left:64.2px;top:175.4px;font-size:12.5px;line-height:16px;font-weight:700;color:#ffff80;letter-spacing:-0.06px;">LCF hold</span>
<span class="t" style="left:14.2px;top:193.0px;font-size:25px;line-height:32px;font-weight:700;color:#ffff80;letter-spacing:-0.19px;">45.9</span>
<span class="t" style="left:64.2px;top:205.4px;font-size:12.5px;line-height:16px;font-weight:700;color:#ffff80;letter-spacing:-0.20px;">LCF</span>
<span class="t" style="left:14.2px;top:223.0px;font-size:25px;line-height:32px;font-weight:700;color:#ffff80;letter-spacing:-0.19px;">67.5</span>
<span class="t" style="left:64.2px;top:235.4px;font-size:12.5px;line-height:16px;font-weight:700;color:#ffff80;letter-spacing:-0.01px;">LCeq</span>
<span class="t" style="left:76.7px;top:256.8px;font-size:12px;line-height:16px;color:#e6e6e6;letter-spacing:0.39px;-webkit-text-stroke:0.45px #e6e6e6;">120</span>
<span class="t" style="left:76.7px;top:286.6px;font-size:12px;line-height:16px;color:#e6e6e6;letter-spacing:0.69px;-webkit-text-stroke:0.45px #e6e6e6;">115</span>
<span class="t" style="left:76.7px;top:316.3px;font-size:12px;line-height:16px;color:#e6e6e6;letter-spacing:0.69px;-webkit-text-stroke:0.45px #e6e6e6;">110</span>
<span class="t" style="left:76.7px;top:346.0px;font-size:12px;line-height:16px;color:#e6e6e6;letter-spacing:0.39px;-webkit-text-stroke:0.45px #e6e6e6;">105</span>
<span class="t" style="left:76.7px;top:375.7px;font-size:12px;line-height:16px;color:#e6e6e6;letter-spacing:0.39px;-webkit-text-stroke:0.45px #e6e6e6;">100</span>
<span class="t" style="left:76.7px;top:405.4px;font-size:12px;line-height:16px;color:#e6e6e6;letter-spacing:0.67px;-webkit-text-stroke:0.45px #e6e6e6;">95</span>
<span class="t" style="left:76.7px;top:435.2px;font-size:12px;line-height:16px;color:#e6e6e6;letter-spacing:0.67px;-webkit-text-stroke:0.45px #e6e6e6;">90</span>
<span class="t" style="left:76.7px;top:464.9px;font-size:12px;line-height:16px;color:#e6e6e6;letter-spacing:0.67px;-webkit-text-stroke:0.45px #e6e6e6;">85</span>
<span class="t" style="left:76.7px;top:494.6px;font-size:12px;line-height:16px;color:#e6e6e6;letter-spacing:0.67px;-webkit-text-stroke:0.45px #e6e6e6;">80</span>
<span class="t" style="left:76.7px;top:524.3px;font-size:12px;line-height:16px;color:#e6e6e6;letter-spacing:0.67px;-webkit-text-stroke:0.45px #e6e6e6;">75</span>
<span class="t" style="left:76.7px;top:554.0px;font-size:12px;line-height:16px;color:#e6e6e6;letter-spacing:0.67px;-webkit-text-stroke:0.45px #e6e6e6;">70</span>
<span class="t" style="left:76.7px;top:583.8px;font-size:12px;line-height:16px;color:#e6e6e6;letter-spacing:0.67px;-webkit-text-stroke:0.45px #e6e6e6;">65</span>
<span class="t" style="left:76.7px;top:613.5px;font-size:12px;line-height:16px;color:#e6e6e6;letter-spacing:0.67px;-webkit-text-stroke:0.45px #e6e6e6;">60</span>
<span class="t" style="left:76.7px;top:643.2px;font-size:12px;line-height:16px;color:#e6e6e6;letter-spacing:0.67px;-webkit-text-stroke:0.45px #e6e6e6;">55</span>
<span class="t" style="left:76.7px;top:672.9px;font-size:12px;line-height:16px;color:#e6e6e6;letter-spacing:0.67px;-webkit-text-stroke:0.45px #e6e6e6;">50</span>
<span class="t" style="left:76.7px;top:702.6px;font-size:12px;line-height:16px;color:#e6e6e6;letter-spacing:0.67px;-webkit-text-stroke:0.45px #e6e6e6;">45</span>
<span class="t" style="left:76.7px;top:732.4px;font-size:12px;line-height:16px;color:#e6e6e6;letter-spacing:0.67px;-webkit-text-stroke:0.45px #e6e6e6;">40</span>
<span class="t" style="left:76.7px;top:762.1px;font-size:12px;line-height:16px;color:#e6e6e6;letter-spacing:0.67px;-webkit-text-stroke:0.45px #e6e6e6;">35</span>
<span class="t" style="left:76.7px;top:791.8px;font-size:12px;line-height:16px;color:#e6e6e6;letter-spacing:0.67px;-webkit-text-stroke:0.45px #e6e6e6;">30</span>
<span class="t" style="left:76.7px;top:821.5px;font-size:12px;line-height:16px;color:#e6e6e6;letter-spacing:0.67px;-webkit-text-stroke:0.45px #e6e6e6;">25</span>
<span class="t" style="left:76.3px;top:851.2px;font-size:12px;line-height:16px;color:#e6e6e6;letter-spacing:0.75px;-webkit-text-stroke:0.45px #e6e6e6;">20 dB</span>
<span class="t" style="left:16.0px;top:882.2px;font-size:14px;line-height:18px;letter-spacing:-0.56px;">Fast (125ms)</span>
<span class="t" style="left:16.0px;top:913.2px;font-size:14px;line-height:18px;letter-spacing:-0.30px;">C - Weighting</span>
<span class="t" style="left:44.2px;top:944.5px;font-size:14px;line-height:18px;letter-spacing:-0.52px;">47m22s</span>
<span class="t" style="left:19.0px;top:976.2px;font-size:14px;line-height:18px;letter-spacing:-0.24px;">Reset</span>
<span class="t" style="left:77.9px;top:976.2px;font-size:14px;line-height:18px;letter-spacing:-0.40px;">Pause</span>
<span class="t" style="left:1793.8px;top:103.7px;font-size:14px;line-height:18px;letter-spacing:-0.41px;">Measure</span>
<span class="t" style="left:1805.1px;top:134.8px;font-size:14px;line-height:18px;letter-spacing:-0.42px;">Measure</span>
<span class="t" style="left:1791.3px;top:291.8px;font-size:14px;line-height:18px;letter-spacing:-0.23px;">Output Level</span>
<span class="t" style="left:1793.5px;top:313.5px;font-size:14px;line-height:18px;letter-spacing:-0.03px;">Show</span>
<span class="t" style="left:1791.3px;top:334.0px;font-size:14px;line-height:18px;letter-spacing:-0.33px;">Scale range:</span>
<span class="t" style="left:1800.2px;top:361.1px;font-size:14px;line-height:18px;letter-spacing:-0.40px;">60 dB</span>
<span class="t" style="left:1802.2px;top:394.0px;font-size:14px;line-height:18px;letter-spacing:-0.01px;">Anechoic</span>
<span class="t" style="left:1807.3px;top:421.3px;font-size:14px;line-height:18px;letter-spacing:-0.48px;">Ambient</span>
<span class="t" style="left:1817.9px;top:447.3px;font-size:14px;line-height:18px;letter-spacing:0.03px;">Raw</span>
<span class="t" style="left:1813.9px;top:489.5px;font-size:14px;line-height:18px;letter-spacing:0.18px;">RT60</span>
<span class="t" style="left:1791.2px;top:527.0px;font-size:14px;line-height:18px;letter-spacing:-0.30px;">Waterfall:</span>
<span class="t" style="left:1800.1px;top:553.4px;font-size:14px;line-height:18px;">3D [R]</span>
<span class="t" style="left:1793.9px;top:579.8px;font-size:14px;line-height:18px;letter-spacing:-0.40px;">Overlay</span>
<span class="t" style="left:1798.6px;top:607.6px;font-size:14px;line-height:18px;">1</span>
<span class="t" style="left:1822.8px;top:607.6px;font-size:14px;line-height:18px;letter-spacing:-0.40px;">Show 1</span>
<span class="t" style="left:1798.6px;top:636.2px;font-size:14px;line-height:18px;">2</span>
<span class="t" style="left:1822.8px;top:636.2px;font-size:14px;line-height:18px;letter-spacing:-0.40px;">Show 2</span>
<span class="t" style="left:1798.6px;top:665.1px;font-size:14px;line-height:18px;">3</span>
<span class="t" style="left:1822.8px;top:665.1px;font-size:14px;line-height:18px;letter-spacing:-0.40px;">Show 3</span>
<span class="t" style="left:1798.6px;top:690.9px;font-size:14px;line-height:18px;">4</span>
<span class="t" style="left:1822.8px;top:690.9px;font-size:14px;line-height:18px;letter-spacing:-0.40px;">Show 4</span>
<span class="t" style="left:1793.5px;top:719.5px;font-size:14px;line-height:18px;letter-spacing:-0.44px;">Alignment</span>
<span class="t" style="left:1797.3px;top:750.1px;font-size:14px;line-height:18px;color:#838383;letter-spacing:-0.35px;">Align Delay</span>
<span class="t" style="left:1799.5px;top:779.8px;font-size:14px;line-height:18px;color:#838383;letter-spacing:-0.19px;">Auto Align</span>
<span class="t" style="left:156.2px;top:977.0px;font-size:14px;line-height:18px;letter-spacing:-0.44px;">Room Analyzer</span>
<span class="t" style="left:282.8px;top:977.0px;font-size:14px;line-height:18px;letter-spacing:0.29px;">RTA</span>
<span class="t" style="left:347.8px;top:979.9px;font-size:14px;line-height:18px;letter-spacing:-0.34px;">Full Range</span>
<span class="t" style="left:1734.5px;top:1009.2px;font-size:15px;line-height:20px;letter-spacing:-0.20px;">Device: XTZ Audio v2 Pro</span>
<span class="t" style="left:1790.3px;top:1034.0px;font-size:15px;line-height:20px;color:#fff;letter-spacing:-0.55px;">23:23</span>
<span class="t" style="left:1770.3px;top:1057.6px;font-size:15px;line-height:20px;color:#fff;letter-spacing:-0.19px;">2018-05-21</span>
<span class="t" style="left:204.6px;top:110.1px;font-size:12px;line-height:16px;color:#dcdcdc;-webkit-text-stroke:0.5px #dcdcdc;">80</span>
<span class="t" style="left:204.6px;top:174.4px;font-size:12px;line-height:16px;color:#dcdcdc;-webkit-text-stroke:0.5px #dcdcdc;">70</span>
<span class="t" style="left:204.6px;top:238.6px;font-size:12px;line-height:16px;color:#dcdcdc;-webkit-text-stroke:0.5px #dcdcdc;">60</span>
<span class="t" style="left:204.6px;top:302.9px;font-size:12px;line-height:16px;color:#dcdcdc;-webkit-text-stroke:0.5px #dcdcdc;">50</span>
<span class="t" style="left:204.6px;top:367.1px;font-size:12px;line-height:16px;color:#dcdcdc;-webkit-text-stroke:0.5px #dcdcdc;">40</span>
<span class="t" style="left:204.6px;top:431.4px;font-size:12px;line-height:16px;color:#dcdcdc;-webkit-text-stroke:0.5px #dcdcdc;">30</span>
<span class="t" style="left:204.6px;top:495.6px;font-size:12px;line-height:16px;color:#dcdcdc;-webkit-text-stroke:0.5px #dcdcdc;">20</span>
<span class="t" style="left:316.9px;top:513.3px;font-size:12px;line-height:16px;color:#dcdcdc;-webkit-text-stroke:0.5px #dcdcdc;">31.5</span>
<span class="t" style="left:473.9px;top:513.3px;font-size:12px;line-height:16px;color:#dcdcdc;-webkit-text-stroke:0.5px #dcdcdc;">63</span>
<span class="t" style="left:620.9px;top:513.3px;font-size:12px;line-height:16px;color:#dcdcdc;-webkit-text-stroke:0.5px #dcdcdc;">125</span>
<span class="t" style="left:772.9px;top:513.3px;font-size:12px;line-height:16px;color:#dcdcdc;-webkit-text-stroke:0.5px #dcdcdc;">250</span>
<span class="t" style="left:924.9px;top:513.3px;font-size:12px;line-height:16px;color:#dcdcdc;-webkit-text-stroke:0.5px #dcdcdc;">500</span>
<span class="t" style="left:1080.5px;top:513.3px;font-size:12px;line-height:16px;color:#dcdcdc;-webkit-text-stroke:0.5px #dcdcdc;">1k</span>
<span class="t" style="left:1232.5px;top:513.3px;font-size:12px;line-height:16px;color:#dcdcdc;-webkit-text-stroke:0.5px #dcdcdc;">2k</span>
<span class="t" style="left:1384.5px;top:513.3px;font-size:12px;line-height:16px;color:#dcdcdc;-webkit-text-stroke:0.5px #dcdcdc;">4k</span>
<span class="t" style="left:1536.5px;top:513.3px;font-size:12px;line-height:16px;color:#dcdcdc;-webkit-text-stroke:0.5px #dcdcdc;">8k</span>
<span class="t" style="left:1685.2px;top:513.3px;font-size:12px;line-height:16px;color:#dcdcdc;-webkit-text-stroke:0.5px #dcdcdc;">16k</span>
<span class="t" style="left:1611.7px;top:513.3px;font-size:12px;line-height:16px;color:#dcdcdc;-webkit-text-stroke:0.5px #dcdcdc;">Hz</span>
<span class="t" style="left:173.5px;top:513.3px;font-size:12px;line-height:16px;font-weight:700;color:#1e90ff;letter-spacing:0.26px;">dB-SPL</span>
<span class="t" style="left:1623.5px;top:119.5px;font-size:17px;line-height:22px;font-weight:700;color:#ffff00;letter-spacing:0.50px;">Distance: 1.01m</span>
<span class="t" style="left:1842.6px;top:158.8px;font-size:13px;line-height:17px;font-weight:700;color:#e00000;text-shadow:1px 1px 0 #ff9090;">H</span>
<span class="t" style="left:1841.7px;top:215.1px;font-size:13px;line-height:17px;font-weight:700;color:#00b000;text-shadow:1px 1px 0 #90ff90;">G</span>
<span class="t" style="left:1844.0px;top:271.6px;font-size:13px;line-height:17px;font-weight:700;color:#0000d0;text-shadow:1px 1px 0 #9090ff;">L</span>
</body></html>
